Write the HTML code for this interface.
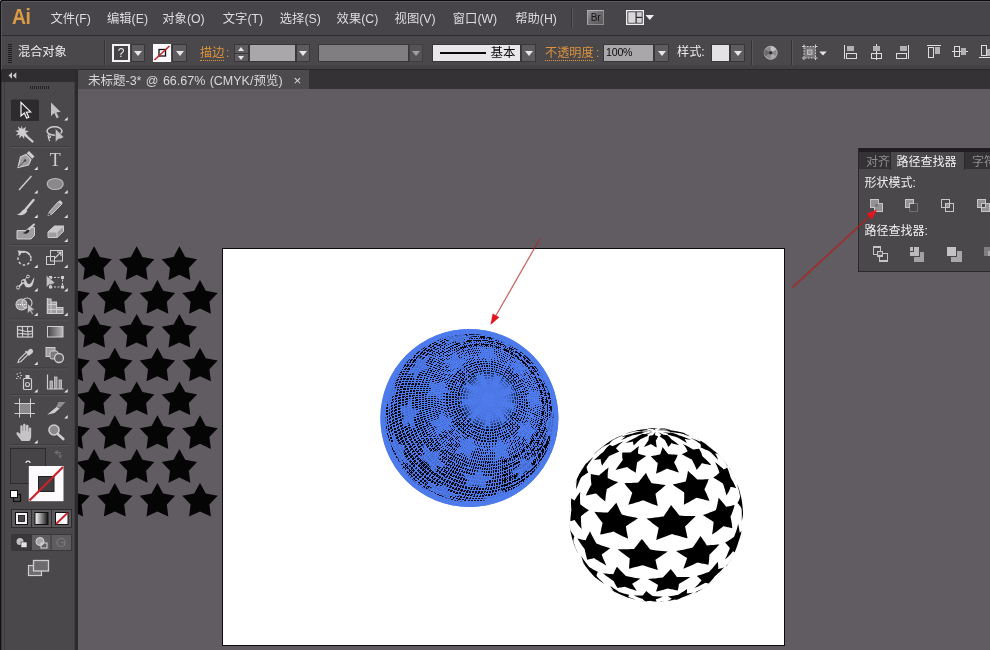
<!DOCTYPE html>
<html lang="zh-CN">
<head>
<meta charset="utf-8">
<title>Adobe Illustrator</title>
<style>
*{box-sizing:border-box;margin:0;padding:0}
html,body{width:990px;height:650px;overflow:hidden;background:#605c61}
body{position:relative;font-family:"Liberation Sans","Noto Sans CJK SC",sans-serif;font-size:12px;color:#e4e2e5;-webkit-font-smoothing:antialiased}
.abs{position:absolute}
#menubar{left:0;top:0;width:990px;height:35px;background:#48454a;border-top:1px solid #0d0c0e;box-shadow:inset 0 1px 0 #5b595c}
#menubar .mi{position:absolute;top:9.6px;font-size:12.3px;line-height:16px;color:#dedce0;white-space:nowrap;letter-spacing:0}
#ailogo{position:absolute;left:12px;top:2px;font-size:22px;font-weight:bold;color:#dc9c43;line-height:28px;letter-spacing:-0.5px;transform:scaleX(.88);transform-origin:left center}
#ctrlbar{left:0;top:35px;width:990px;height:35px;background:#4a484b;border-top:1px solid #2c2a2d;border-bottom:1px solid #2a282b}
#tabbar{left:77px;top:70px;width:913px;height:19px;background:#343235}
#doctab{left:78px;top:70px;width:231px;height:19px;background:#4c4a4d;color:#dedce0;font-size:12.5px;line-height:19px;white-space:nowrap}
#canvas{left:77px;top:89px;width:913px;height:561px;background:#605c61}
#toolbox{left:0;top:70px;width:75px;height:580px;background:#4a484b}
#toolhead{left:0;top:70px;width:75px;height:12px;background:#2f2d30}
#toolsep{left:75px;top:70px;width:3px;height:580px;background:#2c2a2d}
#artboard{left:222px;top:248px;width:563px;height:398px;background:#fff;border:1px solid #0b0a0c}
.lbl{position:absolute;white-space:nowrap;line-height:16px;font-size:12px}
.orange{color:#dc933b;border-bottom:1px dotted #dc933b}
.dd{position:absolute;background:#5e5c5f;border:1px solid #39373a}
.dd:after{content:"";position:absolute;left:50%;top:50%;margin:-2px 0 0 -4px;border:4px solid transparent;border-top:5px solid #e8e6e9;border-bottom:0}
.fld{position:absolute;border:1px solid #39373a}
.vsep{position:absolute;width:1px;background:#353336;box-shadow:1px 0 0 #585659}
</style>
</head>
<body>
<div id="root" style="position:absolute;left:0;top:0;width:990px;height:650px;will-change:transform;transform:translateZ(0)">
<!-- CANVAS -->
<div id="canvas" class="abs"></div>
<div id="artboard" class="abs"></div>
<!--STARS-->
<svg class="abs" style="left:78px;top:240px" width="150" height="285" viewBox="78 240 150 285">
<path fill="#050505" d="M94.1 246.3 L99.9 256.9 L111.8 259.2 L103.5 267.9 L105.0 279.9 L94.1 274.8 L83.2 279.9 L84.7 267.9 L76.4 259.2 L88.3 256.9Z M136.7 246.3 L142.5 256.9 L154.4 259.2 L146.1 267.9 L147.6 279.9 L136.7 274.8 L125.8 279.9 L127.3 267.9 L119.0 259.2 L130.9 256.9Z M179.4 246.3 L185.2 256.9 L197.1 259.2 L188.8 267.9 L190.3 279.9 L179.4 274.8 L168.5 279.9 L170.0 267.9 L161.7 259.2 L173.6 256.9Z M72.2 280.1 L78.0 290.7 L89.9 293.0 L81.6 301.7 L83.1 313.7 L72.2 308.6 L61.3 313.7 L62.8 301.7 L54.5 293.0 L66.4 290.7Z M114.8 280.1 L120.6 290.7 L132.5 293.0 L124.2 301.7 L125.7 313.7 L114.8 308.6 L103.9 313.7 L105.4 301.7 L97.1 293.0 L109.0 290.7Z M157.4 280.1 L163.2 290.7 L175.1 293.0 L166.8 301.7 L168.3 313.7 L157.4 308.6 L146.5 313.7 L148.0 301.7 L139.7 293.0 L151.6 290.7Z M200.0 280.1 L205.8 290.7 L217.7 293.0 L209.4 301.7 L210.9 313.7 L200.0 308.6 L189.1 313.7 L190.6 301.7 L182.3 293.0 L194.2 290.7Z M94.1 313.9 L99.9 324.5 L111.8 326.8 L103.5 335.5 L105.0 347.5 L94.1 342.4 L83.2 347.5 L84.7 335.5 L76.4 326.8 L88.3 324.5Z M136.7 313.9 L142.5 324.5 L154.4 326.8 L146.1 335.5 L147.6 347.5 L136.7 342.4 L125.8 347.5 L127.3 335.5 L119.0 326.8 L130.9 324.5Z M179.4 313.9 L185.2 324.5 L197.1 326.8 L188.8 335.5 L190.3 347.5 L179.4 342.4 L168.5 347.5 L170.0 335.5 L161.7 326.8 L173.6 324.5Z M72.2 347.7 L78.0 358.3 L89.9 360.6 L81.6 369.3 L83.1 381.3 L72.2 376.2 L61.3 381.3 L62.8 369.3 L54.5 360.6 L66.4 358.3Z M114.8 347.7 L120.6 358.3 L132.5 360.6 L124.2 369.3 L125.7 381.3 L114.8 376.2 L103.9 381.3 L105.4 369.3 L97.1 360.6 L109.0 358.3Z M157.4 347.7 L163.2 358.3 L175.1 360.6 L166.8 369.3 L168.3 381.3 L157.4 376.2 L146.5 381.3 L148.0 369.3 L139.7 360.6 L151.6 358.3Z M200.0 347.7 L205.8 358.3 L217.7 360.6 L209.4 369.3 L210.9 381.3 L200.0 376.2 L189.1 381.3 L190.6 369.3 L182.3 360.6 L194.2 358.3Z M94.1 381.5 L99.9 392.1 L111.8 394.4 L103.5 403.1 L105.0 415.1 L94.1 410.0 L83.2 415.1 L84.7 403.1 L76.4 394.4 L88.3 392.1Z M136.7 381.5 L142.5 392.1 L154.4 394.4 L146.1 403.1 L147.6 415.1 L136.7 410.0 L125.8 415.1 L127.3 403.1 L119.0 394.4 L130.9 392.1Z M179.4 381.5 L185.2 392.1 L197.1 394.4 L188.8 403.1 L190.3 415.1 L179.4 410.0 L168.5 415.1 L170.0 403.1 L161.7 394.4 L173.6 392.1Z M72.2 415.3 L78.0 425.9 L89.9 428.2 L81.6 436.9 L83.1 448.9 L72.2 443.8 L61.3 448.9 L62.8 436.9 L54.5 428.2 L66.4 425.9Z M114.8 415.3 L120.6 425.9 L132.5 428.2 L124.2 436.9 L125.7 448.9 L114.8 443.8 L103.9 448.9 L105.4 436.9 L97.1 428.2 L109.0 425.9Z M157.4 415.3 L163.2 425.9 L175.1 428.2 L166.8 436.9 L168.3 448.9 L157.4 443.8 L146.5 448.9 L148.0 436.9 L139.7 428.2 L151.6 425.9Z M200.0 415.3 L205.8 425.9 L217.7 428.2 L209.4 436.9 L210.9 448.9 L200.0 443.8 L189.1 448.9 L190.6 436.9 L182.3 428.2 L194.2 425.9Z M94.1 449.1 L99.9 459.7 L111.8 462.0 L103.5 470.7 L105.0 482.7 L94.1 477.6 L83.2 482.7 L84.7 470.7 L76.4 462.0 L88.3 459.7Z M136.7 449.1 L142.5 459.7 L154.4 462.0 L146.1 470.7 L147.6 482.7 L136.7 477.6 L125.8 482.7 L127.3 470.7 L119.0 462.0 L130.9 459.7Z M179.4 449.1 L185.2 459.7 L197.1 462.0 L188.8 470.7 L190.3 482.7 L179.4 477.6 L168.5 482.7 L170.0 470.7 L161.7 462.0 L173.6 459.7Z M72.2 482.9 L78.0 493.5 L89.9 495.8 L81.6 504.5 L83.1 516.5 L72.2 511.4 L61.3 516.5 L62.8 504.5 L54.5 495.8 L66.4 493.5Z M114.8 482.9 L120.6 493.5 L132.5 495.8 L124.2 504.5 L125.7 516.5 L114.8 511.4 L103.9 516.5 L105.4 504.5 L97.1 495.8 L109.0 493.5Z M157.4 482.9 L163.2 493.5 L175.1 495.8 L166.8 504.5 L168.3 516.5 L157.4 511.4 L146.5 516.5 L148.0 504.5 L139.7 495.8 L151.6 493.5Z M200.0 482.9 L205.8 493.5 L217.7 495.8 L209.4 504.5 L210.9 516.5 L200.0 511.4 L189.1 516.5 L190.6 504.5 L182.3 495.8 L194.2 493.5Z"/>
</svg>
<!--/STARS-->
<!--SPHERES-->
<svg class="abs" style="left:370px;top:320px" width="390" height="300" viewBox="370 320 390 300"><circle cx="469.4" cy="418.0" r="89.0" fill="#4e7bec"/><circle cx="469.4" cy="418.0" r="84.0" fill="#07070f"/><path fill="none" stroke="#4e7bec" stroke-width="1.0" shape-rendering="crispEdges" d="M496.7 399.3L496.4 397.7L495.9 396.2L495.0 394.9L493.9 393.7L492.6 392.8L491.1 392.2L489.6 391.8L488.0 391.8L486.5 392.2L485.1 392.8L483.9 393.7L482.9 394.9L482.2 396.2L481.8 397.7L481.7 399.3L482.0 400.8L482.5 402.3L483.4 403.7L484.5 404.9L485.8 405.8L487.3 406.4L488.8 406.7L490.4 406.7L491.9 406.4L493.3 405.8L494.5 404.9L495.5 403.7L496.2 402.3L496.6 400.8L496.7 399.3M499.2 399.3L498.9 397.4L498.2 395.5L497.2 393.7L495.9 392.2L494.3 390.9L492.5 390.0L490.6 389.4L488.6 389.2L486.7 389.4L484.8 390.0L483.1 390.9L481.7 392.2L480.5 393.7L479.6 395.5L479.2 397.4L479.1 399.3L479.4 401.3L480.0 403.2L481.0 405.0L482.4 406.5L484.0 407.8L485.8 408.7L487.7 409.3L489.6 409.5L491.6 409.3L493.5 408.7L495.2 407.8L496.6 406.5L497.8 405.0L498.6 403.2L499.1 401.3L499.2 399.3M501.7 399.4L501.4 397.1L500.6 394.8L499.5 392.7L498.0 390.8L496.2 389.3L494.1 388.0L491.9 387.2L489.6 386.7L487.2 386.7L485.0 387.2L482.8 388.0L480.9 389.3L479.2 390.8L477.9 392.7L477.0 394.8L476.5 397.1L476.4 399.4L476.7 401.8L477.5 404.0L478.6 406.1L480.1 408.0L481.9 409.6L484.0 410.8L486.2 411.7L488.5 412.1L490.9 412.1L493.1 411.7L495.3 410.8L497.2 409.6L498.9 408.0L500.2 406.1L501.1 404.0L501.6 401.8L501.7 399.4M504.2 399.5L503.9 396.8L503.1 394.3L501.8 391.8L500.2 389.6L498.2 387.8L495.9 386.2L493.5 385.1L490.8 384.4L488.2 384.2L485.5 384.4L483.0 385.1L480.6 386.2L478.5 387.8L476.7 389.6L475.3 391.8L474.3 394.3L473.8 396.8L473.7 399.5L474.0 402.2L474.9 404.8L476.1 407.2L477.7 409.4L479.7 411.3L482.0 412.8L484.5 413.9L487.1 414.6L489.7 414.9L492.4 414.6L494.9 413.9L497.3 412.8L499.4 411.3L501.2 409.4L502.6 407.2L503.6 404.8L504.1 402.2L504.2 399.5M506.7 399.6L506.3 396.7L505.5 393.8L504.1 391.1L502.4 388.6L500.3 386.4L497.9 384.6L495.2 383.2L492.3 382.2L489.4 381.7L486.5 381.7L483.6 382.2L480.8 383.2L478.3 384.6L476.0 386.4L474.2 388.6L472.7 391.1L471.6 393.8L471.0 396.7L470.9 399.6L471.3 402.6L472.2 405.5L473.5 408.2L475.3 410.7L477.4 412.9L479.8 414.7L482.5 416.1L485.3 417.1L488.3 417.5L491.2 417.5L494.1 417.1L496.9 416.1L499.4 414.7L501.6 412.9L503.5 410.7L505.0 408.2L506.1 405.5L506.6 402.6L506.7 399.6M509.2 399.8L508.8 396.5L507.9 393.4L506.5 390.4L504.7 387.7L502.5 385.2L499.9 383.1L497.1 381.4L494.0 380.2L490.9 379.4L487.7 379.2L484.5 379.4L481.4 380.2L478.5 381.4L475.8 383.1L473.5 385.2L471.5 387.7L470.0 390.4L468.9 393.4L468.3 396.5L468.2 399.8L468.6 403.0L469.5 406.1L470.9 409.1L472.7 411.9L474.9 414.3L477.5 416.4L480.3 418.1L483.3 419.3L486.5 420.1L489.7 420.3L492.9 420.1L496.0 419.3L498.9 418.1L501.6 416.4L503.9 414.3L505.9 411.9L507.4 409.1L508.5 406.1L509.1 403.0L509.2 399.8M511.6 399.9L511.2 396.5L510.3 393.1L508.8 389.8L507.0 386.8L504.7 384.1L502.0 381.8L499.1 379.8L495.9 378.3L492.5 377.3L489.1 376.8L485.6 376.8L482.3 377.3L479.0 378.3L476.0 379.8L473.2 381.8L470.8 384.1L468.8 386.8L467.2 389.8L466.1 393.1L465.5 396.5L465.4 399.9L465.9 403.4L466.8 406.8L468.2 410.0L470.1 413.0L472.4 415.7L475.0 418.1L478.0 420.0L481.2 421.5L484.5 422.5L488.0 423.1L491.4 423.1L494.8 422.5L498.1 421.5L501.1 420.0L503.9 418.1L506.3 415.7L508.3 413.0L509.9 410.0L511.0 406.8L511.6 403.4L511.6 399.9M514.1 400.1L513.6 396.5L512.7 393.0L511.3 389.6L509.5 386.4L507.2 383.5L504.6 380.9L501.7 378.7L498.5 376.9L495.1 375.5L491.5 374.7L488.0 374.3L484.4 374.4L480.9 375.0L477.5 376.1L474.4 377.7L471.5 379.7L469.0 382.1L466.8 384.9L465.0 388.0L463.7 391.3L462.9 394.7L462.6 398.3L462.8 401.9L463.5 405.4L464.6 408.9L466.3 412.2L468.3 415.3L470.8 418.0L473.6 420.4L476.6 422.4L479.9 424.0L483.4 425.1L487.0 425.8L490.6 425.9L494.1 425.5L497.5 424.6L500.8 423.3L503.8 421.5L506.5 419.3L508.9 416.7L510.9 413.8L512.4 410.6L513.4 407.2L514.0 403.7L514.1 400.1M516.5 400.3L516.0 396.5L515.1 392.8L513.7 389.2L511.8 385.8L509.5 382.7L506.8 379.8L503.8 377.4L500.5 375.3L497.0 373.7L493.3 372.6L489.6 372.0L485.8 371.9L482.0 372.2L478.4 373.1L474.9 374.5L471.7 376.3L468.8 378.6L466.2 381.2L464.0 384.2L462.2 387.4L460.9 390.9L460.1 394.6L459.8 398.4L460.0 402.2L460.7 405.9L461.9 409.6L463.5 413.1L465.6 416.4L468.1 419.3L471.0 422.0L474.1 424.2L477.5 426.1L481.1 427.4L484.9 428.3L488.6 428.7L492.4 428.6L496.1 427.9L499.7 426.8L503.0 425.2L506.1 423.2L508.9 420.7L511.3 417.9L513.2 414.8L514.8 411.4L515.8 407.8L516.4 404.1L516.5 400.3M518.8 400.5L518.4 396.5L517.4 392.6L516.0 388.8L514.1 385.2L511.8 381.9L509.0 378.9L506.0 376.2L502.6 373.9L499.0 372.1L495.2 370.7L491.3 369.8L487.4 369.5L483.4 369.6L479.5 370.2L475.8 371.3L472.2 373.0L469.0 375.0L466.0 377.5L463.4 380.4L461.2 383.5L459.4 387.0L458.1 390.7L457.3 394.5L457.0 398.5L457.2 402.5L457.9 406.4L459.1 410.3L460.8 413.9L462.9 417.4L465.4 420.6L468.3 423.5L471.5 425.9L475.0 428.0L478.7 429.6L482.6 430.7L486.5 431.4L490.5 431.5L494.4 431.1L498.2 430.2L501.9 428.9L505.3 427.0L508.4 424.7L511.2 422.1L513.6 419.0L515.6 415.7L517.2 412.1L518.2 408.4L518.8 404.5L518.8 400.5M521.2 400.7L520.7 396.6L519.8 392.5L518.3 388.6L516.4 384.8L514.1 381.3L511.3 378.0L508.2 375.2L504.8 372.7L501.1 370.6L497.2 369.0L493.2 367.8L489.1 367.2L485.0 367.1L480.9 367.5L476.9 368.3L473.1 369.7L469.5 371.6L466.1 373.9L463.1 376.6L460.5 379.6L458.3 383.0L456.5 386.6L455.2 390.5L454.4 394.5L454.1 398.6L454.3 402.8L455.1 406.9L456.3 410.9L458.0 414.8L460.1 418.4L462.6 421.8L465.6 424.9L468.9 427.6L472.4 429.9L476.2 431.7L480.2 433.1L484.2 434.0L488.4 434.3L492.5 434.2L496.5 433.6L500.4 432.4L504.1 430.8L507.6 428.8L510.8 426.3L513.6 423.4L516.0 420.2L518.0 416.6L519.6 412.9L520.6 408.9L521.2 404.8L521.2 400.7M523.5 401.0L523.1 396.7L522.1 392.4L520.6 388.3L518.7 384.4L516.3 380.7L513.6 377.3L510.4 374.2L507.0 371.5L503.2 369.2L499.3 367.4L495.2 366.0L490.9 365.1L486.7 364.7L482.4 364.9L478.2 365.5L474.1 366.6L470.2 368.2L466.6 370.3L463.2 372.8L460.2 375.7L457.6 379.0L455.4 382.5L453.6 386.3L452.4 390.4L451.6 394.6L451.3 398.8L451.5 403.1L452.2 407.4L453.4 411.6L455.1 415.6L457.3 419.4L459.8 423.0L462.8 426.2L466.1 429.1L469.7 431.6L473.5 433.7L477.6 435.3L481.8 436.4L486.0 437.1L490.3 437.2L494.6 436.8L498.7 435.9L502.7 434.6L506.5 432.7L510.0 430.4L513.1 427.7L516.0 424.6L518.4 421.2L520.4 417.5L521.9 413.6L522.9 409.5L523.5 405.3L523.5 401.0M525.8 401.2L525.4 396.8L524.4 392.4L522.9 388.2L521.0 384.1L518.6 380.2L515.8 376.6L512.7 373.4L509.2 370.5L505.4 368.0L501.4 365.9L497.2 364.3L492.9 363.2L488.5 362.5L484.1 362.4L479.7 362.8L475.4 363.7L471.3 365.0L467.3 366.9L463.7 369.2L460.3 371.9L457.3 375.0L454.7 378.4L452.5 382.1L450.7 386.1L449.4 390.3L448.7 394.6L448.4 399.0L448.6 403.5L449.3 407.9L450.5 412.2L452.2 416.4L454.4 420.4L457.0 424.1L459.9 427.5L463.3 430.6L466.9 433.3L470.8 435.6L474.9 437.5L479.2 438.8L483.6 439.7L488.0 440.1L492.4 440.0L496.7 439.3L501.0 438.2L505.0 436.6L508.8 434.5L512.3 432.0L515.5 429.1L518.3 425.8L520.7 422.3L522.7 418.4L524.2 414.3L525.3 410.0L525.8 405.7L525.8 401.2M528.1 401.5L527.6 397.0L526.6 392.5L525.2 388.1L523.3 383.8L520.9 379.8L518.1 376.1L514.9 372.6L511.4 369.5L507.6 366.8L503.6 364.5L499.3 362.7L494.9 361.3L490.4 360.5L485.9 360.1L481.3 360.2L476.8 360.8L472.5 362.0L468.3 363.6L464.3 365.6L460.7 368.1L457.3 371.0L454.3 374.3L451.7 377.9L449.5 381.8L447.8 385.9L446.5 390.3L445.7 394.7L445.5 399.3L445.7 403.8L446.4 408.4L447.6 412.8L449.3 417.1L451.5 421.3L454.1 425.2L457.0 428.8L460.4 432.0L464.0 435.0L468.0 437.5L472.1 439.5L476.5 441.1L480.9 442.2L485.5 442.9L490.0 443.0L494.6 442.6L499.0 441.7L503.3 440.4L507.3 438.5L511.1 436.3L514.7 433.5L517.9 430.5L520.7 427.0L523.1 423.3L525.0 419.2L526.5 415.0L527.6 410.6L528.1 406.1L528.1 401.5M530.3 401.9L529.9 397.2L528.9 392.6L527.4 388.0L525.5 383.7L523.1 379.5L520.4 375.6L517.2 372.0L513.7 368.7L509.9 365.8L505.8 363.3L501.5 361.3L497.0 359.7L492.4 358.6L487.7 357.9L483.1 357.8L478.4 358.2L473.9 359.1L469.5 360.4L465.3 362.2L461.3 364.5L457.6 367.2L454.3 370.3L451.3 373.7L448.7 377.5L446.5 381.6L444.8 385.8L443.5 390.3L442.8 394.9L442.5 399.5L442.8 404.2L443.5 408.9L444.7 413.5L446.4 417.9L448.6 422.2L451.1 426.2L454.1 430.0L457.4 433.4L461.1 436.5L465.1 439.2L469.3 441.5L473.7 443.3L478.2 444.7L482.8 445.5L487.5 445.9L492.2 445.8L496.8 445.2L501.3 444.1L505.6 442.5L509.7 440.4L513.5 437.9L517.0 435.0L520.2 431.8L523.0 428.1L525.4 424.2L527.3 420.1L528.8 415.7L529.8 411.2L530.3 406.6L530.3 401.9M532.6 402.2L532.1 397.4L531.1 392.7L529.6 388.0L527.7 383.5L525.4 379.2L522.6 375.2L519.4 371.4L515.9 368.0L512.1 364.9L508.0 362.2L503.7 360.0L499.1 358.2L494.5 356.8L489.7 355.9L484.9 355.6L480.2 355.7L475.4 356.3L470.8 357.4L466.4 359.0L462.2 361.0L458.2 363.5L454.5 366.4L451.2 369.7L448.2 373.3L445.6 377.2L443.5 381.4L441.8 385.8L440.6 390.3L439.8 395.0L439.6 399.8L439.8 404.6L440.5 409.4L441.8 414.1L443.4 418.7L445.6 423.1L448.1 427.3L451.1 431.2L454.5 434.8L458.1 438.1L462.1 440.9L466.3 443.4L470.8 445.4L475.4 447.0L480.1 448.1L484.9 448.7L489.6 448.9L494.4 448.5L499.1 447.6L503.6 446.3L507.9 444.5L512.0 442.2L515.9 439.5L519.4 436.5L522.6 433.0L525.3 429.3L527.7 425.2L529.6 420.9L531.1 416.4L532.1 411.8L532.6 407.0L532.6 402.2M534.7 402.6L534.3 397.8L533.3 393.0L531.9 388.3L530.1 383.8L527.8 379.4L525.1 375.2L522.0 371.4L518.6 367.8L514.9 364.5L510.9 361.6L506.6 359.2L502.2 357.1L497.5 355.5L492.8 354.3L488.0 353.6L483.2 353.3L478.4 353.6L473.7 354.3L469.1 355.5L464.6 357.1L460.4 359.2L456.4 361.6L452.6 364.5L449.2 367.8L446.2 371.4L443.5 375.2L441.3 379.4L439.4 383.8L438.0 388.3L437.1 393.0L436.6 397.8L436.6 402.6L437.1 407.4L438.1 412.2L439.5 416.9L441.3 421.5L443.6 425.8L446.3 430.0L449.3 433.9L452.8 437.4L456.5 440.7L460.5 443.6L464.8 446.0L469.2 448.1L473.8 449.7L478.6 450.9L483.4 451.6L488.2 451.9L493.0 451.6L497.7 450.9L502.3 449.7L506.8 448.1L511.0 446.0L515.0 443.6L518.7 440.7L522.1 437.4L525.2 433.9L527.9 430.0L530.1 425.8L532.0 421.5L533.4 416.9L534.3 412.2L534.7 407.4L534.7 402.6M536.9 403.0L536.4 398.1L535.5 393.2L534.1 388.4L532.2 383.7L529.9 379.3L527.3 375.0L524.2 371.0L520.8 367.2L517.1 363.8L513.1 360.8L508.8 358.1L504.3 355.9L499.7 354.0L494.9 352.6L490.0 351.7L485.1 351.2L480.2 351.2L475.3 351.7L470.5 352.6L465.9 354.0L461.4 355.9L457.2 358.1L453.2 360.8L449.5 363.8L446.1 367.2L443.0 371.0L440.4 375.0L438.2 379.3L436.3 383.7L435.0 388.4L434.1 393.2L433.6 398.1L433.6 403.0L434.1 407.9L435.0 412.8L436.4 417.6L438.3 422.3L440.6 426.8L443.2 431.0L446.3 435.1L449.7 438.8L453.4 442.2L457.4 445.2L461.7 447.9L466.2 450.2L470.8 452.0L475.6 453.4L480.5 454.3L485.4 454.8L490.3 454.8L495.2 454.3L500.0 453.4L504.6 452.0L509.1 450.2L513.3 447.9L517.3 445.2L521.0 442.2L524.4 438.8L527.5 435.1L530.1 431.0L532.3 426.8L534.2 422.3L535.5 417.6L536.4 412.8L536.9 407.9L536.9 403.0M539.0 403.5L538.5 398.4L537.6 393.5L536.2 388.6L534.3 383.8L532.1 379.2L529.4 374.8L526.4 370.7L523.0 366.8L519.3 363.2L515.3 360.0L511.0 357.2L506.5 354.7L501.8 352.7L497.0 351.1L492.0 350.0L487.0 349.3L482.0 349.0L477.0 349.3L472.1 350.0L467.3 351.1L462.6 352.7L458.2 354.7L453.9 357.2L449.9 360.0L446.2 363.2L442.9 366.8L439.9 370.7L437.2 374.8L435.0 379.2L433.2 383.8L431.9 388.6L431.0 393.5L430.6 398.4L430.6 403.5L431.1 408.5L432.0 413.5L433.4 418.4L435.2 423.1L437.5 427.7L440.1 432.1L443.2 436.3L446.6 440.1L450.3 443.7L454.3 446.9L458.6 449.7L463.1 452.2L467.8 454.2L472.6 455.8L477.5 457.0L482.5 457.7L487.5 457.9L492.5 457.7L497.4 457.0L502.3 455.8L506.9 454.2L511.4 452.2L515.7 449.7L519.6 446.9L523.3 443.7L526.7 440.1L529.7 436.3L532.3 432.1L534.5 427.7L536.3 423.1L537.7 418.4L538.6 413.5L539.0 408.5L539.0 403.5M541.1 403.9L540.6 398.8L539.6 393.8L538.2 388.8L536.4 383.9L534.2 379.2L531.5 374.7L528.5 370.4L525.1 366.4L521.4 362.7L517.4 359.4L513.2 356.4L508.6 353.7L503.9 351.5L499.1 349.7L494.1 348.4L489.0 347.4L483.9 347.0L478.8 347.0L473.8 347.4L468.8 348.4L464.0 349.7L459.3 351.5L454.8 353.7L450.6 356.4L446.6 359.4L443.0 362.7L439.6 366.4L436.6 370.4L434.1 374.7L431.9 379.2L430.1 383.9L428.8 388.8L427.9 393.8L427.5 398.8L427.5 403.9L428.0 409.1L428.9 414.1L430.3 419.1L432.1 424.0L434.4 428.7L437.0 433.2L440.0 437.5L443.4 441.5L447.1 445.2L451.1 448.5L455.4 451.5L459.9 454.1L464.6 456.4L469.5 458.2L474.4 459.5L479.5 460.4L484.6 460.9L489.7 460.9L494.8 460.4L499.7 459.5L504.6 458.2L509.2 456.4L513.7 454.1L518.0 451.5L521.9 448.5L525.6 445.2L528.9 441.5L531.9 437.5L534.5 433.2L536.7 428.7L538.4 424.0L539.8 419.1L540.7 414.1L541.1 409.1L541.1 403.9M543.1 404.5L542.6 399.3L541.6 394.1L540.3 389.0L538.5 384.1L536.2 379.3L533.6 374.7L530.6 370.3L527.3 366.2L523.6 362.3L519.6 358.8L515.3 355.6L510.8 352.8L506.1 350.4L501.2 348.5L496.2 346.9L491.1 345.8L485.9 345.1L480.7 344.9L475.6 345.1L470.5 345.8L465.5 346.9L460.6 348.5L455.9 350.4L451.4 352.8L447.2 355.6L443.3 358.8L439.6 362.3L436.3 366.2L433.4 370.3L430.8 374.7L428.7 379.3L426.9 384.1L425.6 389.0L424.8 394.1L424.3 399.3L424.4 404.5L424.9 409.7L425.8 414.8L427.2 419.9L429.0 424.8L431.2 429.6L433.8 434.3L436.8 438.6L440.2 442.8L443.9 446.6L447.9 450.1L452.1 453.3L456.7 456.1L461.4 458.5L466.3 460.5L471.3 462.0L476.4 463.1L481.6 463.8L486.7 464.1L491.9 463.8L497.0 463.1L502.0 462.0L506.9 460.5L511.5 458.5L516.0 456.1L520.2 453.3L524.2 450.1L527.8 446.6L531.1 442.8L534.1 438.6L536.6 434.3L538.8 429.6L540.5 424.8L541.8 419.9L542.7 414.8L543.1 409.7L543.1 404.5M545.0 405.0L544.5 399.8L543.6 394.5L542.2 389.4L540.5 384.3L538.2 379.4L535.6 374.7L532.7 370.2L529.3 366.0L525.7 362.0L521.7 358.4L517.4 355.0L512.9 352.1L508.2 349.5L503.3 347.3L498.3 345.6L493.1 344.3L487.9 343.4L482.6 342.9L477.4 342.9L472.1 343.4L467.0 344.3L462.0 345.6L457.1 347.3L452.5 349.5L448.0 352.1L443.8 355.0L439.9 358.4L436.3 362.0L433.0 366.0L430.1 370.2L427.5 374.7L425.4 379.4L423.7 384.3L422.4 389.4L421.6 394.5L421.2 399.8L421.2 405.0L421.7 410.3L422.6 415.5L424.0 420.7L425.8 425.7L428.0 430.6L430.6 435.3L433.6 439.8L436.9 444.1L440.6 448.0L444.6 451.7L448.8 455.0L453.3 458.0L458.1 460.5L463.0 462.7L468.0 464.5L473.2 465.8L478.4 466.7L483.6 467.1L488.9 467.1L494.1 466.7L499.2 465.8L504.3 464.5L509.1 462.7L513.8 460.5L518.3 458.0L522.5 455.0L526.4 451.7L530.0 448.0L533.3 444.1L536.2 439.8L538.7 435.3L540.8 430.6L542.5 425.7L543.8 420.7L544.7 415.5L545.1 410.3L545.0 405.0M546.9 405.6L546.5 400.3L545.5 395.0L544.2 389.7L542.4 384.6L540.2 379.6L537.6 374.8L534.7 370.2L531.3 365.9L527.7 361.8L523.7 358.0L519.5 354.6L515.0 351.4L510.3 348.7L505.4 346.4L500.3 344.4L495.1 342.9L489.9 341.8L484.5 341.1L479.2 340.9L473.9 341.1L468.6 341.8L463.5 342.9L458.5 344.4L453.6 346.4L448.9 348.7L444.5 351.4L440.3 354.6L436.4 358.0L432.8 361.8L429.6 365.9L426.7 370.2L424.2 374.8L422.1 379.6L420.4 384.6L419.2 389.7L418.4 395.0L418.0 400.3L418.0 405.6L418.5 411.0L419.4 416.3L420.8 421.5L422.6 426.7L424.8 431.6L427.3 436.4L430.3 441.0L433.6 445.4L437.3 449.5L441.2 453.3L445.5 456.7L450.0 459.8L454.7 462.6L459.6 464.9L464.6 466.9L469.8 468.4L475.1 469.5L480.4 470.1L485.7 470.4L491.1 470.1L496.3 469.5L501.5 468.4L506.5 466.9L511.4 464.9L516.0 462.6L520.5 459.8L524.7 456.7L528.5 453.3L532.1 449.5L535.4 445.4L538.2 441.0L540.7 436.4L542.8 431.6L544.5 426.7L545.8 421.5L546.6 416.3L547.0 411.0L546.9 405.6M548.8 406.3L548.3 400.9L547.4 395.5L546.0 390.2L544.3 385.0L542.1 379.9L539.5 375.0L536.6 370.3L533.3 365.9L529.7 361.7L525.7 357.8L521.5 354.2L517.0 350.9L512.3 348.0L507.4 345.5L502.4 343.4L497.1 341.7L491.8 340.4L486.5 339.5L481.1 339.1L475.7 339.1L470.3 339.5L465.0 340.4L459.9 341.7L454.8 343.4L450.0 345.5L445.3 348.0L440.9 350.9L436.8 354.2L432.9 357.8L429.4 361.7L426.2 365.9L423.3 370.3L420.9 375.0L418.8 379.9L417.1 385.0L415.9 390.2L415.1 395.5L414.7 400.9L414.8 406.3L415.3 411.7L416.2 417.1L417.5 422.4L419.3 427.6L421.5 432.7L424.0 437.6L427.0 442.3L430.2 446.7L433.9 450.9L437.8 454.8L442.0 458.4L446.5 461.7L451.2 464.6L456.1 467.1L461.2 469.2L466.4 470.9L471.7 472.2L477.1 473.1L482.5 473.5L487.9 473.5L493.2 473.1L498.5 472.2L503.7 470.9L508.7 469.2L513.6 467.1L518.2 464.6L522.6 461.7L526.8 458.4L530.6 454.8L534.2 450.9L537.4 446.7L540.2 442.3L542.7 437.6L544.7 432.7L546.4 427.6L547.6 422.4L548.5 417.1L548.8 411.7L548.8 406.3M550.5 407.0L550.0 401.6L549.1 396.1L547.8 390.7L546.0 385.5L543.9 380.3L541.4 375.3L538.4 370.6L535.2 366.0L531.6 361.7L527.7 357.7L523.5 353.9L519.0 350.5L514.3 347.5L509.4 344.8L504.3 342.5L499.1 340.6L493.8 339.1L488.4 338.1L482.9 337.4L477.5 337.2L472.0 337.4L466.6 338.1L461.3 339.1L456.1 340.6L451.1 342.5L446.3 344.8L441.7 347.5L437.3 350.5L433.1 353.9L429.3 357.7L425.8 361.7L422.7 366.0L419.9 370.6L417.4 375.3L415.4 380.3L413.8 385.5L412.5 390.7L411.8 396.1L411.4 401.6L411.5 407.0L411.9 412.5L412.9 418.0L414.2 423.3L415.9 428.6L418.1 433.8L420.6 438.7L423.5 443.5L426.8 448.1L430.4 452.4L434.3 456.4L438.5 460.1L443.0 463.5L447.7 466.6L452.6 469.3L457.6 471.6L462.9 473.5L468.2 474.9L473.6 476.0L479.1 476.7L484.5 476.9L490.0 476.7L495.4 476.0L500.7 474.9L505.8 473.5L510.9 471.6L515.7 469.3L520.3 466.6L524.7 463.5L528.8 460.1L532.7 456.4L536.2 452.4L539.3 448.1L542.1 443.5L544.6 438.7L546.6 433.8L548.2 428.6L549.4 423.3L550.2 418.0L550.6 412.5L550.5 407.0M552.2 407.9L551.7 402.3L550.8 396.8L549.5 391.4L547.7 386.0L545.6 380.8L543.1 375.7L540.2 370.9L537.0 366.2L533.4 361.8L529.5 357.7L525.3 353.8L520.9 350.3L516.2 347.1L511.3 344.3L506.3 341.8L501.0 339.8L495.7 338.1L490.3 336.8L484.8 336.0L479.2 335.5L473.7 335.5L468.2 336.0L462.8 336.8L457.5 338.1L452.3 339.8L447.3 341.8L442.5 344.3L437.9 347.1L433.5 350.3L429.5 353.8L425.7 357.7L422.2 361.8L419.1 366.2L416.3 370.9L413.9 375.7L411.9 380.8L410.3 386.0L409.1 391.4L408.4 396.8L408.0 402.3L408.1 407.9L408.6 413.4L409.5 418.9L410.8 424.3L412.5 429.7L414.7 434.9L417.2 440.0L420.1 444.8L423.3 449.5L426.9 453.9L430.7 458.0L434.9 461.9L439.4 465.4L444.0 468.6L448.9 471.4L454.0 473.9L459.2 476.0L464.6 477.6L470.0 478.9L475.5 479.7L481.0 480.2L486.5 480.2L492.0 479.7L497.4 478.9L502.8 477.6L507.9 476.0L512.9 473.9L517.8 471.4L522.4 468.6L526.7 465.4L530.8 461.9L534.6 458.0L538.1 453.9L541.2 449.5L543.9 444.8L546.3 440.0L548.3 434.9L549.9 429.7L551.1 424.3L551.9 418.9L552.3 413.4L552.2 407.9M553.7 408.8L553.2 403.2L552.3 397.6L551.0 392.1L549.3 386.7L547.2 381.4L544.7 376.3L541.8 371.3L538.6 366.6L535.1 362.1L531.3 357.8L527.1 353.9L522.7 350.2L518.0 346.9L513.2 343.9L508.1 341.3L502.9 339.1L497.5 337.2L492.1 335.8L486.5 334.7L481.0 334.1L475.4 333.9L469.8 334.1L464.3 334.7L458.9 335.8L453.6 337.2L448.4 339.1L443.4 341.3L438.6 343.9L434.0 346.9L429.7 350.2L425.7 353.9L421.9 357.8L418.5 362.1L415.4 366.6L412.7 371.3L410.4 376.3L408.4 381.4L406.8 386.7L405.6 392.1L404.9 397.6L404.5 403.2L404.6 408.8L405.1 414.4L406.0 419.9L407.3 425.4L409.0 430.8L411.1 436.1L413.6 441.2L416.5 446.2L419.7 450.9L423.2 455.4L427.1 459.7L431.2 463.6L435.6 467.3L440.3 470.6L445.2 473.6L450.2 476.2L455.5 478.5L460.8 480.3L466.3 481.8L471.8 482.8L477.4 483.4L483.0 483.6L488.5 483.4L494.0 482.8L499.4 481.8L504.8 480.3L509.9 478.5L514.9 476.2L519.7 473.6L524.3 470.6L528.6 467.3L532.7 463.6L536.4 459.7L539.8 455.4L542.9 450.9L545.6 446.2L548.0 441.2L550.0 436.1L551.5 430.8L552.7 425.4L553.5 419.9L553.8 414.4L553.7 408.8M555.1 409.8L554.6 404.2L553.7 398.5L552.4 393.0L550.7 387.5L548.6 382.2L546.2 377.0L543.3 371.9L540.2 367.1L536.7 362.5L532.8 358.2L528.7 354.1L524.3 350.3L519.7 346.9L514.9 343.8L509.8 341.0L504.6 338.6L499.2 336.6L493.8 335.0L488.2 333.7L482.6 332.9L477.0 332.5L471.4 332.5L465.8 332.9L460.2 333.7L454.8 335.0L449.5 336.6L444.4 338.6L439.4 341.0L434.6 343.8L430.1 346.9L425.8 350.3L421.8 354.1L418.1 358.2L414.7 362.5L411.7 367.1L409.0 371.9L406.7 377.0L404.7 382.2L403.2 387.5L402.0 393.0L401.3 398.5L401.0 404.2L401.0 409.8L401.5 415.4L402.4 421.1L403.7 426.6L405.4 432.1L407.5 437.4L410.0 442.6L412.8 447.7L416.0 452.5L419.5 457.1L423.3 461.4L427.4 465.5L431.8 469.3L436.4 472.7L441.3 475.8L446.3 478.6L451.5 481.0L456.9 483.0L462.4 484.6L467.9 485.9L473.5 486.7L479.2 487.1L484.8 487.1L490.4 486.7L495.9 485.9L501.3 484.6L506.6 483.0L511.8 481.0L516.8 478.6L521.5 475.8L526.1 472.7L530.4 469.3L534.4 465.5L538.1 461.4L541.4 457.1L544.5 452.5L547.2 447.7L549.5 442.6L551.4 437.4L553.0 432.1L554.1 426.6L554.9 421.1L555.2 415.4L555.1 409.8M556.3 411.0L555.8 405.3L554.9 399.6L553.6 394.0L551.9 388.5L549.8 383.1L547.4 377.9L544.6 372.8L541.5 367.9L538.0 363.2L534.2 358.8L530.1 354.6L525.8 350.7L521.2 347.1L516.4 343.9L511.3 341.0L506.1 338.4L500.8 336.2L495.3 334.5L489.8 333.0L484.1 332.0L478.5 331.4L472.8 331.2L467.1 331.4L461.5 332.0L456.0 333.0L450.6 334.5L445.3 336.2L440.1 338.4L435.2 341.0L430.5 343.9L426.0 347.1L421.7 350.7L417.8 354.6L414.1 358.8L410.8 363.2L407.8 367.9L405.1 372.8L402.9 377.9L401.0 383.1L399.4 388.5L398.3 394.0L397.6 399.6L397.3 405.3L397.4 411.0L397.8 416.7L398.7 422.4L400.0 428.0L401.7 433.5L403.8 438.9L406.2 444.1L409.0 449.2L412.1 454.1L415.6 458.8L419.4 463.2L423.5 467.4L427.8 471.3L432.4 474.9L437.2 478.1L442.3 481.0L447.5 483.6L452.8 485.8L458.3 487.5L463.9 489.0L469.5 490.0L475.2 490.6L480.8 490.8L486.5 490.6L492.1 490.0L497.6 489.0L503.1 487.5L508.3 485.8L513.5 483.6L518.4 481.0L523.2 478.1L527.6 474.9L531.9 471.3L535.8 467.4L539.5 463.2L542.8 458.8L545.8 454.1L548.5 449.2L550.8 444.1L552.7 438.9L554.2 433.5L555.3 428.0L556.0 422.4L556.3 416.7L556.3 411.0M557.0 412.3L556.5 406.6L555.6 400.9L554.4 395.3L552.7 389.7M502.2 336.4L496.7 334.4L491.2 332.8L485.5 331.6L479.9 330.8L474.2 330.4L468.5 330.4L462.8 330.8L457.2 331.6L451.7 332.8L446.3 334.4L441.1 336.4L436.0 338.7L431.1 341.4L426.4 344.4L422.0 347.7L417.8 351.4L413.9 355.4L410.3 359.6L407.0 364.1L404.1 368.9L401.5 373.8L399.3 379.0L397.4 384.3L395.9 389.7L394.8 395.3L394.1 400.9L393.8 406.6L393.9 412.3L394.4 418.0L395.3 423.7L396.5 429.3L398.2 434.9L400.2 440.3L402.6 445.6L405.4 450.7L408.5 455.7L411.9 460.4L415.6 464.9L419.7 469.2L423.9 473.1L428.5 476.8L433.3 480.2L438.2 483.2L443.4 485.9L448.7 488.2L454.2 490.2L459.7 491.8L465.4 492.9L471.0 493.7L476.7 494.1L482.4 494.1L488.1 493.7L493.7 492.9L499.2 491.8L504.6 490.2L509.8 488.2L514.9 485.9L519.8 483.2L524.5 480.2L528.9 476.8L533.1 473.1L537.0 469.2L540.6 464.9L543.9 460.4L546.8 455.7L549.4 450.7L551.6 445.6L553.5 440.3L555.0 434.9L556.1 429.3L556.8 423.7L557.1 418.0L557.0 412.3M469.8 330.0L464.2 330.2L458.5 330.8L453.0 331.8L447.5 333.1L442.2 334.8L437.0 336.9L432.0 339.4L427.2 342.2L422.6 345.3L418.2 348.8L414.2 352.5L410.3 356.6L406.8 360.9L403.6 365.4L400.7 370.2L398.2 375.1L396.0 380.3L394.2 385.6L392.8 391.1L391.7 396.6L391.0 402.2L390.7 407.9L390.8 413.6L391.3 419.3L392.2 425.0L393.4 430.6L395.0 436.2L397.0 441.6L399.4 446.9L402.1 452.1L405.1 457.0L408.5 461.8L412.2 466.3L416.1 470.6L420.3 474.7L424.8 478.4L429.5 481.9L434.4 485.0L439.5 487.8L444.8 490.3L450.2 492.4L455.7 494.1L461.3 495.4L466.9 496.4L472.6 497.0L478.3 497.2L483.9 497.0L489.6 496.4L495.1 495.4L500.6 494.1L505.9 492.4L511.1 490.3L516.1 487.8L520.9 485.0L525.5 481.9L529.9 478.4L534.0 474.7L537.8 470.6L541.3 466.3L544.5 461.8L547.4 457.0L549.9 452.1L552.1 446.9L553.9 441.6L555.3 436.2L556.4 430.6L557.1 425.0M441.9 334.4L436.7 336.4L431.6 338.8L426.7 341.5L422.0 344.5L417.5 347.9L413.3 351.5L409.4 355.5L405.8 359.7L402.4 364.2L399.4 368.9L396.7 373.8L394.4 378.9L392.4 384.1L390.8 389.5L389.5 395.1L388.6 400.7L388.2 406.4L388.1 412.1L388.4 417.8L389.0 423.5L390.1 429.2L391.5 434.8L393.3 440.3L395.5 445.7L398.0 451.0L400.9 456.1L404.0 461.0L407.5 465.7L411.3 470.2L415.4 474.4L419.7 478.4L424.3 482.0L429.1 485.4L434.1 488.4L439.3 491.1L444.6 493.4L450.1 495.4L455.6 497.1L461.2 498.3L466.9 499.2L472.6 499.7L478.3 499.8L484.0 499.5L489.7 498.8L495.2 497.7L500.7 496.3L506.0 494.5L511.2 492.3L516.2 489.8L521.0 486.9L525.5 483.7L529.9 480.2L533.9 476.4L537.7 472.3L541.2 468.0L544.4 463.4L547.3 458.6L549.8 453.6L552.0 448.4M424.8 342.1L420.1 345.2L415.6 348.6L411.3 352.3L407.4 356.3L403.7 360.5L400.3 365.0L397.3 369.8L394.6 374.7L392.2 379.9L390.2 385.2L388.6 390.7L387.3 396.2L386.4 401.9L385.9 407.6L385.8 413.4L386.1 419.2L386.8 425.0L387.9 430.7L389.3 436.4L391.1 441.9L393.3 447.4L395.9 452.7L398.8 457.8L402.0 462.8L405.5 467.5L409.3 472.1L413.4 476.3L417.8 480.3L422.4 484.0L427.3 487.4L432.3 490.4L437.5 493.2L442.9 495.5L448.4 497.5L454.0 499.2L459.7 500.4L465.4 501.3L471.2 501.8L477.0 501.9L482.7 501.6L488.4 500.9L494.0 499.9L499.5 498.4L504.9 496.6L510.1 494.4L515.1 491.8L520.0 489.0L524.6 485.7L529.0 482.2L533.1 478.3L536.9 474.2L540.4 469.8M405.7 357.4L402.0 361.7L398.6 366.2L395.5 371.0L392.8 375.9L390.4 381.1L388.4 386.4L386.8 391.9L385.5 397.5L384.6 403.2L384.2 409.0L384.1 414.8L384.4 420.6L385.0 426.4L386.1 432.1L387.6 437.8L389.4 443.4L391.6 448.9L394.1 454.2L397.0 459.4L400.2 464.4L403.8 469.1L407.6 473.6L411.8 477.9L416.2 481.9L420.8 485.6L425.7 489.0L430.7 492.1L436.0 494.8L441.4 497.2L446.9 499.2L452.5 500.9L458.2 502.1L464.0 503.0L469.8 503.5L475.5 503.6L481.3 503.3L487.0 502.6L492.6 501.6L498.2 500.1L503.6 498.3L508.8 496.1L513.9 493.5L518.7 490.6L523.4 487.4L527.8 483.8M394.2 372.4L391.5 377.4L389.1 382.5L387.1 387.9L385.4 393.3L384.2 398.9L383.3 404.6L382.8 410.3L382.7 416.1L383.0 421.9L383.7 427.7L384.8 433.5L386.2 439.1L388.0 444.7L390.2 450.2L392.8 455.5L395.7 460.7L398.9 465.7L402.4 470.4L406.3 474.9L410.4 479.2L414.8 483.2L419.4 486.9L424.3 490.3L429.3 493.4L434.6 496.1L439.9 498.5L445.5 500.5L451.1 502.1L456.8 503.4L462.5 504.3L468.3 504.8L474.1 504.9L479.8 504.6L485.5 503.9L491.2 502.8L496.7 501.4L502.1 499.5L507.3 497.3L512.4 494.8M384.6 394.9L383.3 400.4L382.4 406.0L382.0 411.8L381.9 417.5L382.1 423.3L382.8 429.0L383.9 434.7L385.3 440.4L387.1 445.9L389.3 451.3L391.8 456.6L394.7 461.8L397.9 466.7L401.4 471.4L405.2 475.9L409.3 480.2L413.7 484.1L418.3 487.8L423.1 491.2L428.1 494.2L433.3 496.9L438.7 499.3L444.2 501.3L449.8 502.9L455.4 504.2L461.1 505.1L466.9 505.6L472.6 505.6L478.3 505.4L484.0 504.7L489.6 503.6M381.4 416.0L381.5 421.7L382.0 427.5L382.9 433.2L384.2 438.9L385.8 444.5L387.8 449.9L390.2 455.3L392.9 460.5L396.0 465.5L399.4 470.3L403.0 474.9L407.0 479.2L411.3 483.3L415.8 487.1L420.5 490.6L425.5 493.7L430.6 496.5L435.9 499.0L441.4 501.1L446.9 502.9L452.5 504.2L458.2 505.2L464.0 505.8M389.0 453.8L391.6 459.0L394.5 464.0L397.7 468.9L401.3 473.6L405.1 478.0L409.2 482.1L413.6 486.0L418.3 489.5L423.1 492.8L428.1 495.7"/><path fill="none" stroke="#4e7bec" stroke-width="1.0" shape-rendering="crispEdges" d="M499.6 399.4L503.8 399.5L508.0 399.7L512.1 399.9L516.1 400.2L519.9 400.6L523.6 401.0L527.1 401.4L530.5 401.9L533.8 402.4L536.8 403.0L539.7 403.6L542.3 404.3L544.8 404.9L547.1 405.7L549.1 406.4L550.9 407.2L552.5 408.0L553.9 408.9L555.1 409.8L556.0 410.7L556.7 411.6L557.1 412.5M528.2 400.1L531.5 400.4L534.7 400.9L537.6 401.3L540.4 401.8L543.0 402.4L545.4 402.9L547.6 403.6L549.6 404.2L551.3 405.0M518.4 398.3L522.2 398.3L525.7 398.5L529.2 398.7L532.4 398.9L535.5 399.2L538.4 399.5L541.1 399.9L543.6 400.4L545.9 400.9L548.0 401.4L549.9 402.0L551.6 402.6L553.0 403.3L554.2 404.0L555.2 404.8L556.0 405.5L556.5 406.4M527.8 397.1L531.1 397.2L534.2 397.3L537.2 397.5L539.9 397.8L542.5 398.1L544.9 398.5L547.0 398.9L549.0 399.4L550.7 399.9M507.7 396.9L511.7 396.6L515.6 396.3L519.3 396.0L523.0 395.8L526.4 395.7L529.8 395.6L532.9 395.6L535.9 395.6L538.7 395.7L541.3 395.9L543.7 396.1L545.9 396.4L547.9 396.8L549.7 397.2L551.3 397.7L552.6 398.2L553.7 398.8L554.6 399.4L555.3 400.1L555.7 400.8M527.3 394.2L530.5 394.0L533.6 393.9L536.5 393.8L539.2 393.8L541.7 393.9L544.0 394.0L546.1 394.2L548.0 394.5L549.7 394.8M517.6 393.9L521.2 393.4L524.7 393.0L528.0 392.6L531.1 392.3L534.1 392.1L536.9 391.9L539.5 391.8L542.0 391.8L544.2 391.8L546.2 392.0L548.0 392.2L549.6 392.4L551.0 392.8L552.1 393.2L553.1 393.7L553.8 394.2L554.2 394.8M526.5 391.3L529.6 390.8L532.6 390.4L535.5 390.1L538.1 389.9L540.6 389.7L542.8 389.6L544.9 389.6L546.8 389.7L548.4 389.9M499.0 396.4L503.0 395.3L507.0 394.2L510.8 393.3L514.5 392.4L518.1 391.5L521.6 390.7L524.9 390.0L528.1 389.4L531.1 388.9L534.0 388.4L536.6 388.0L539.1 387.7L541.4 387.5L543.5 387.4L545.4 387.3L547.1 387.4L548.6 387.5L549.8 387.7L550.8 388.0L551.7 388.4L552.2 388.8M525.5 388.4L528.6 387.7L531.5 387.0L534.2 386.5L536.8 386.0L539.2 385.6L541.4 385.3L543.4 385.1L545.1 385.0L546.7 385.0M516.2 389.7L519.6 388.6L522.8 387.6L526.0 386.7L528.9 385.9L531.7 385.1L534.4 384.5L536.8 383.9L539.1 383.5L541.2 383.1L543.1 382.8L544.8 382.7L546.2 382.6L547.5 382.6L548.5 382.7L549.4 382.9L550.0 383.2M524.3 385.6L527.3 384.6L530.1 383.7L532.7 382.9L535.2 382.2L537.5 381.6L539.6 381.1L541.5 380.7L543.2 380.4L544.7 380.2M505.9 391.7L509.5 390.1L513.0 388.6L516.3 387.2L519.6 385.9L522.7 384.6L525.6 383.5L528.4 382.5L531.1 381.5L533.5 380.7L535.8 379.9L537.9 379.3L539.9 378.7L541.6 378.3L543.1 378.0L544.4 377.8L545.6 377.7L546.5 377.7L547.2 377.8L547.7 378.0M523.0 382.9L525.8 381.7L528.5 380.5L531.0 379.5L533.4 378.6L535.5 377.8L537.5 377.0L539.3 376.4L541.0 376.0L542.4 375.6M514.1 385.7L517.3 384.1L520.3 382.6L523.1 381.1L525.9 379.8L528.4 378.6L530.8 377.5L533.1 376.5L535.1 375.6L537.0 374.8L538.7 374.2L540.2 373.6L541.5 373.2L542.6 372.9L543.5 372.8L544.2 372.7L544.7 372.8M521.4 380.3L524.1 378.8L526.6 377.4L529.0 376.2L531.3 375.0L533.3 374.0L535.2 373.1L536.9 372.3L538.4 371.7L539.7 371.1M497.6 393.7L501.1 391.4L504.4 389.2L507.7 387.1L510.9 385.1L513.9 383.2L516.9 381.3L519.7 379.6L522.3 378.0L524.8 376.4L527.2 375.0L529.4 373.7L531.5 372.6L533.3 371.5L535.0 370.6L536.5 369.8L537.9 369.2L539.0 368.6L540.0 368.2L540.7 368.0L541.3 367.9L541.7 367.9M519.7 377.8L522.2 376.1L524.6 374.5L526.8 373.0L528.9 371.7L530.8 370.4L532.6 369.3L534.2 368.4L535.5 367.5L536.8 366.8M511.6 382.0L514.4 379.9L517.0 377.9L519.6 376.0L522.0 374.2L524.2 372.5L526.3 371.0L528.3 369.6L530.1 368.3L531.7 367.1L533.1 366.1L534.4 365.3L535.5 364.6L536.4 364.0L537.2 363.6L537.7 363.3L538.1 363.2M517.8 375.4L520.1 373.5L522.4 371.7L524.4 370.0L526.3 368.4L528.1 367.0L529.7 365.7L531.2 364.6L532.4 363.6L533.5 362.8M502.7 387.0L505.6 384.4L508.3 381.9L511.0 379.5L513.6 377.2L516.0 375.0L518.3 372.9L520.5 370.9L522.5 369.1L524.4 367.4L526.1 365.9L527.7 364.5L529.1 363.2L530.4 362.1L531.5 361.1L532.4 360.3L533.1 359.7L533.7 359.2L534.1 358.8L534.3 358.7M515.7 373.2L517.9 371.0L519.9 369.0L521.8 367.1L523.6 365.4L525.2 363.8L526.6 362.3L527.9 361.0L529.0 359.9L530.0 358.9M508.5 378.7L510.9 376.1L513.2 373.7L515.3 371.3L517.4 369.1L519.3 367.1L521.0 365.1L522.6 363.4L524.1 361.7L525.4 360.3L526.6 358.9L527.6 357.8L528.4 356.8L529.1 356.0L529.6 355.3L530.0 354.8L530.2 354.5M513.5 371.1L515.5 368.7L517.3 366.5L519.0 364.5L520.6 362.5L522.0 360.8L523.3 359.2L524.4 357.7L525.4 356.4L526.2 355.3M495.6 391.4L498.1 388.2L500.6 385.1L503.1 382.0L505.4 379.1L507.6 376.2L509.7 373.5L511.7 370.9L513.6 368.4L515.4 366.1L517.0 363.9L518.6 361.8L519.9 359.9L521.2 358.2L522.3 356.6L523.2 355.2L524.0 354.0L524.7 352.9L525.2 352.1L525.6 351.4L525.8 350.9L525.8 350.5M511.2 369.1L512.9 366.6L514.6 364.2L516.1 362.0L517.4 359.9L518.7 358.0L519.8 356.2L520.7 354.6L521.6 353.2L522.2 352.0M505.1 375.8L507.0 372.8L508.8 370.0L510.5 367.3L512.1 364.8L513.6 362.3L514.9 360.1L516.2 358.0L517.3 356.1L518.2 354.3L519.1 352.7L519.8 351.3L520.3 350.0L520.8 349.0L521.0 348.1L521.2 347.5L521.2 347.0M508.7 367.3L510.2 364.6L511.6 362.1L512.9 359.7L514.1 357.5L515.1 355.4L516.1 353.5L516.8 351.8L517.5 350.3L518.0 348.9M498.4 383.4L500.3 380.0L502.1 376.7L503.8 373.5L505.4 370.4L507.0 367.5L508.4 364.6L509.7 362.0L510.9 359.5L512.0 357.1L513.0 354.9L513.9 352.9L514.6 351.1L515.2 349.4L515.7 348.0L516.1 346.7L516.3 345.6L516.4 344.8L516.4 344.1L516.3 343.6M506.2 365.7L507.4 362.9L508.6 360.2L509.7 357.7L510.6 355.3L511.4 353.1L512.2 351.1L512.8 349.3L513.3 347.6L513.6 346.2M501.3 373.4L502.7 370.1L504.0 367.0L505.2 364.0L506.3 361.1L507.4 358.4L508.3 355.9L509.1 353.5L509.8 351.4L510.4 349.4L510.8 347.5L511.2 345.9L511.4 344.5L511.6 343.3L511.6 342.2L511.5 341.4L511.3 340.8M503.5 364.3L504.5 361.3L505.4 358.5L506.3 355.9L507.0 353.4L507.6 351.1L508.1 349.0L508.6 347.0L508.9 345.3L509.1 343.8M493.0 389.8L494.5 385.9L495.9 382.1L497.2 378.4L498.5 374.8L499.7 371.3L500.8 367.9L501.8 364.7L502.7 361.6L503.6 358.7L504.3 355.9L504.9 353.3L505.5 350.9L505.9 348.7L506.3 346.7L506.5 344.8L506.7 343.2L506.7 341.7L506.7 340.5L506.5 339.5L506.3 338.7L505.9 338.1M500.7 363.1L501.5 360.0L502.2 357.1L502.8 354.3L503.3 351.7L503.7 349.3L504.0 347.1L504.2 345.1L504.3 343.3L504.3 341.6M497.2 371.6L498.1 368.1L498.8 364.7L499.5 361.5L500.1 358.4L500.7 355.5L501.1 352.7L501.5 350.1L501.7 347.8L501.9 345.6L502.0 343.6L502.0 341.8L501.9 340.2L501.7 338.8L501.5 337.7L501.1 336.8L500.7 336.1L500.1 335.6M497.9 362.0L498.4 358.8L498.8 355.8L499.2 353.0L499.4 350.3L499.6 347.8L499.7 345.5L499.7 343.4L499.7 341.5L499.5 339.9M493.3 381.1L494.0 377.2L494.7 373.4L495.3 369.7L495.8 366.1L496.3 362.7L496.7 359.4L497.0 356.3L497.3 353.4L497.5 350.6L497.5 348.0L497.6 345.6L497.5 343.4L497.4 341.4L497.1 339.7L496.9 338.1L496.5 336.7L496.0 335.6L495.5 334.7L494.9 334.1L494.3 333.6M495.0 361.2L495.2 357.9L495.4 354.8L495.5 351.9L495.5 349.2L495.5 346.6L495.4 344.3L495.2 342.1L494.9 340.2L494.6 338.4M493.0 370.4L493.2 366.7L493.4 363.1L493.6 359.7L493.7 356.5L493.7 353.4L493.6 350.5L493.5 347.8L493.3 345.3L493.1 343.0L492.8 340.9L492.4 339.0L491.9 337.3L491.4 335.9L490.9 334.6L490.2 333.6L489.6 332.8L488.8 332.3M492.1 360.6L492.0 357.2L491.9 354.1L491.8 351.1L491.6 348.3L491.3 345.7L490.9 343.3L490.5 341.1L490.1 339.1L489.6 337.4M490.1 389.0L490.3 384.7L490.5 380.6L490.7 376.5L490.8 372.5L490.8 368.7L490.7 365.0L490.6 361.5L490.5 358.1L490.3 354.8L490.0 351.8L489.7 348.9L489.3 346.2L488.9 343.7L488.4 341.5L487.8 339.4L487.3 337.5L486.6 335.9L485.9 334.5L485.2 333.3L484.4 332.3L483.6 331.6L482.8 331.1M489.1 360.1L488.8 356.8L488.5 353.6L488.0 350.6L487.6 347.7L487.1 345.1L486.5 342.7L485.9 340.4L485.2 338.4L484.5 336.6M488.6 369.7L488.3 366.0L487.9 362.3L487.5 358.9L487.0 355.5L486.5 352.4L486.0 349.4L485.4 346.7L484.7 344.1L484.0 341.7L483.3 339.5L482.5 337.6L481.7 335.9L480.9 334.3L480.0 333.1L479.1 332.0L478.2 331.2L477.2 330.6L476.3 330.3M486.2 359.9L485.6 356.5L484.9 353.3L484.3 350.3L483.6 347.5L482.8 344.8L482.0 342.4L481.2 340.1L480.3 338.1L479.4 336.3M487.8 380.4L487.3 376.2L486.8 372.2L486.2 368.4L485.6 364.6L484.9 361.1L484.2 357.6L483.4 354.4L482.7 351.3L481.8 348.3L481.0 345.6L480.1 343.1L479.2 340.8L478.2 338.7L477.2 336.8L476.2 335.1L475.2 333.7L474.2 332.5L473.2 331.5L472.1 330.8L471.1 330.3L470.0 330.0M483.2 359.9L482.3 356.5L481.4 353.3L480.5 350.3L479.5 347.5L478.6 344.8L477.5 342.4L476.5 340.1L475.5 338.1L474.4 336.3M484.2 369.7L483.3 366.0L482.4 362.3L481.4 358.9L480.4 355.5L479.3 352.4L478.3 349.4L477.2 346.7L476.1 344.1L474.9 341.7L473.8 339.5L472.6 337.6L471.5 335.9L470.3 334.3L469.1 333.1L467.9 332.0L466.8 331.2L465.6 330.6L464.5 330.3M480.3 360.1L479.1 356.8L478.0 353.6L476.8 350.6L475.6 347.7L474.3 345.1L473.1 342.7L471.9 340.4L470.6 338.4L469.3 336.6M487.1 389.0L486.1 384.7L485.1 380.6L484.0 376.5L482.8 372.5L481.7 368.7L480.4 365.0L479.2 361.5L477.9 358.1L476.7 354.8L475.4 351.8L474.0 348.9L472.7 346.2L471.3 343.7L470.0 341.5L468.6 339.4L467.3 337.5L466.0 335.9L464.6 334.5L463.3 333.3L462.0 332.3L460.7 331.6L459.4 331.1L458.2 330.9M477.3 360.6L475.9 357.2L474.5 354.1L473.1 351.1L471.6 348.3L470.2 345.7L468.7 343.3L467.3 341.1L465.8 339.1L464.4 337.4M479.9 370.4L478.4 366.7L476.9 363.1L475.4 359.7L473.8 356.5L472.3 353.4L470.7 350.5L469.2 347.8L467.6 345.3L466.0 343.0L464.5 340.9L462.9 339.0L461.4 337.3L459.9 335.9L458.4 334.6L457.0 333.6L455.6 332.8L454.2 332.3L452.9 332.0L451.6 331.9M474.5 361.2L472.8 357.9L471.1 354.8L469.4 351.9L467.7 349.2L466.1 346.6L464.4 344.3L462.7 342.1L461.1 340.2L459.5 338.4M482.4 381.1L480.7 377.2L479.0 373.4L477.2 369.7L475.5 366.1L473.7 362.7L471.9 359.4L470.1 356.3L468.2 353.4L466.4 350.6L464.6 348.0L462.9 345.6L461.1 343.4L459.3 341.4L457.6 339.7L455.9 338.1L454.3 336.7L452.7 335.6L451.1 334.7L449.6 334.1L448.2 333.6L446.8 333.4L445.4 333.4M471.7 362.0L469.7 358.8L467.8 355.8L465.9 353.0L464.0 350.3L462.1 347.8L460.2 345.5L458.3 343.4L456.5 341.5L454.7 339.9M475.8 371.6L473.7 368.1L471.7 364.7L469.6 361.5L467.6 358.4L465.5 355.5L463.5 352.7L461.4 350.1L459.4 347.8L457.4 345.6L455.5 343.6L453.6 341.8L451.7 340.2L449.9 338.8L448.1 337.7L446.4 336.8L444.8 336.1L443.2 335.6L441.7 335.3L440.3 335.3L438.9 335.5M469.0 363.1L466.8 360.0L464.6 357.1L462.4 354.3L460.3 351.7L458.1 349.3L456.1 347.1L454.0 345.1L452.0 343.3L450.0 341.6M484.3 389.8L482.1 385.9L479.9 382.1L477.6 378.4L475.3 374.8L473.0 371.3L470.7 367.9L468.4 364.7L466.1 361.6L463.8 358.7L461.5 355.9L459.2 353.3L457.0 350.9L454.8 348.7L452.6 346.7L450.5 344.8L448.4 343.2L446.4 341.7L444.5 340.5L442.6 339.5L440.8 338.7L439.1 338.1L437.4 337.7L435.9 337.6L434.4 337.6L433.0 337.9M466.3 364.3L463.9 361.3L461.5 358.5L459.1 355.9L456.7 353.4L454.4 351.1L452.1 349.0L449.8 347.0L447.7 345.3L445.5 343.8M471.9 373.4L469.3 370.1L466.7 367.0L464.2 364.0L461.6 361.1L459.1 358.4L456.6 355.9L454.2 353.5L451.7 351.4L449.4 349.4L447.1 347.5L444.8 345.9L442.6 344.5L440.5 343.3L438.5 342.2L436.5 341.4L434.7 340.8L432.9 340.4L431.2 340.3L429.7 340.3L428.2 340.5L426.9 341.0M463.8 365.7L461.1 362.9L458.5 360.2L455.9 357.7L453.3 355.3L450.8 353.1L448.3 351.1L445.8 349.3L443.5 347.6L441.2 346.2M477.5 383.4L474.7 380.0L471.9 376.7L469.1 373.5L466.3 370.4L463.5 367.5L460.7 364.6L457.9 362.0L455.2 359.5L452.5 357.1L449.9 354.9L447.3 352.9L444.7 351.1L442.3 349.4L439.9 348.0L437.6 346.7L435.4 345.6L433.2 344.8L431.2 344.1L429.3 343.6L427.5 343.3L425.8 343.3L424.2 343.4L422.7 343.8L421.4 344.3M461.4 367.3L458.5 364.6L455.6 362.1L452.8 359.7L450.0 357.5L447.3 355.4L444.6 353.5L442.0 351.8L439.5 350.3L437.1 348.9M468.3 375.8L465.3 372.8L462.2 370.0L459.2 367.3L456.2 364.8L453.3 362.3L450.4 360.1L447.5 358.0L444.7 356.1L442.0 354.3L439.3 352.7L436.8 351.3L434.3 350.0L431.9 349.0L429.6 348.1L427.4 347.5L425.4 347.0L423.4 346.7L421.6 346.7L419.9 346.8L418.4 347.1L417.0 347.6L415.7 348.3M459.1 369.1L456.0 366.6L452.9 364.2L449.9 362.0L446.9 359.9L444.0 358.0L441.2 356.2L438.4 354.6L435.8 353.2L433.2 352.0M481.9 391.4L478.7 388.2L475.4 385.1L472.1 382.0L468.9 379.1L465.6 376.2L462.3 373.5L459.1 370.9L455.9 368.4L452.7 366.1L449.6 363.9L446.5 361.8L443.5 359.9L440.5 358.2L437.6 356.6L434.9 355.2L432.2 354.0L429.6 352.9L427.1 352.1L424.8 351.4L422.5 350.9L420.4 350.5L418.5 350.4L416.6 350.4L414.9 350.6L413.4 351.0L412.0 351.6L410.8 352.4M457.0 371.1L453.7 368.7L450.4 366.5L447.2 364.5L444.0 362.5L441.0 360.8L438.0 359.2L435.0 357.7L432.2 356.4L429.5 355.3M465.2 378.7L461.7 376.1L458.2 373.7L454.8 371.3L451.4 369.1L448.1 367.1L444.8 365.1L441.6 363.4L438.5 361.7L435.4 360.3L432.5 358.9L429.6 357.8L426.9 356.8L424.2 356.0L421.7 355.3L419.4 354.8L417.1 354.5L415.0 354.4L413.1 354.4L411.3 354.6L409.7 355.0L408.2 355.6L406.9 356.3M455.0 373.2L451.5 371.0L448.0 369.0L444.7 367.1L441.3 365.4L438.1 363.8L435.0 362.3L431.9 361.0L429.0 359.9L426.1 358.9M473.6 387.0L469.9 384.4L466.2 381.9L462.5 379.5L458.9 377.2L455.2 375.0L451.6 372.9L448.1 370.9L444.6 369.1L441.2 367.4L437.9 365.9L434.6 364.5L431.5 363.2L428.4 362.1L425.5 361.1L422.6 360.3L420.0 359.7L417.4 359.2L415.0 358.8L412.7 358.7L410.6 358.7L408.7 358.8L406.9 359.2L405.3 359.6L403.8 360.3L402.6 361.1L401.5 362.0M453.1 375.4L449.5 373.5L445.9 371.7L442.3 370.0L438.9 368.4L435.5 367.0L432.2 365.7L429.0 364.6L425.9 363.6L423.0 362.8M462.5 382.0L458.6 379.9L454.8 377.9L451.0 376.0L447.3 374.2L443.7 372.5L440.1 371.0L436.6 369.6L433.1 368.3L429.8 367.1L426.6 366.1L423.5 365.3L420.6 364.6L417.7 364.0L415.0 363.6L412.5 363.3L410.1 363.2L407.9 363.2L405.8 363.4L403.9 363.7L402.2 364.2L400.7 364.8L399.4 365.6L398.3 366.5M451.5 377.8L447.7 376.1L443.9 374.5L440.2 373.0L436.6 371.7L433.1 370.4L429.7 369.3L426.4 368.4L423.2 367.5L420.2 366.8M480.1 393.7L476.1 391.4L472.0 389.2L468.0 387.1L464.0 385.1L460.0 383.2L456.0 381.3L452.0 379.6L448.1 378.0L444.3 376.4L440.5 375.0L436.8 373.7L433.2 372.6L429.7 371.5L426.3 370.6L423.0 369.8L419.9 369.2L416.9 368.6L414.0 368.2L411.3 368.0L408.7 367.9L406.3 367.9L404.1 368.1L402.0 368.4L400.2 368.8L398.5 369.4L397.0 370.1L395.8 370.9L394.7 371.9M450.0 380.3L446.1 378.8L442.2 377.4L438.4 376.2L434.6 375.0L431.0 374.0L427.5 373.1L424.1 372.3L420.8 371.7L417.6 371.1L414.6 370.7L411.8 370.4L409.1 370.3L406.5 370.3L404.2 370.4L402.0 370.7L400.0 371.0L398.2 371.5L396.5 372.2L395.1 372.9L393.9 373.8L392.9 374.8M460.3 385.7L456.1 384.1L452.0 382.6L448.0 381.1L444.0 379.8L440.1 378.6L436.2 377.5L432.5 376.5L428.8 375.6L425.3 374.8L421.9 374.2L418.6 373.6L415.5 373.2L412.5 372.9L409.6 372.8L406.9 372.7L404.4 372.8L402.1 373.0L400.0 373.3L398.0 373.8L396.2 374.4L394.7 375.1L393.3 375.9L392.2 376.8L391.2 377.8M448.7 382.9L444.7 381.7L440.7 380.5L436.7 379.5L432.9 378.6L429.2 377.8L425.5 377.0L422.0 376.4L418.7 376.0L415.4 375.6L412.3 375.3L409.4 375.2L406.7 375.2L404.1 375.3L401.6 375.5L399.4 375.8L397.4 376.3L395.5 376.8L393.9 377.5L392.5 378.3L391.3 379.2L390.2 380.2L389.5 381.3M470.8 391.7L466.5 390.1L462.2 388.6L458.0 387.2L453.7 385.9L449.5 384.6L445.4 383.5L441.3 382.5L437.3 381.5L433.4 380.7L429.6 379.9L425.9 379.3L422.3 378.7L418.8 378.3L415.5 378.0L412.4 377.8L409.3 377.7L406.5 377.7L403.8 377.8L401.3 378.0L399.0 378.4L396.9 378.8L395.0 379.4L393.3 380.0L391.8 380.8L390.5 381.7L389.4 382.6L388.5 383.7M447.6 385.6L443.5 384.6L439.4 383.7L435.3 382.9L431.4 382.2L427.6 381.6L423.9 381.1L420.3 380.7L416.9 380.4L413.6 380.2L410.4 380.1L407.4 380.1L404.6 380.2L402.0 380.5L399.5 380.8L397.2 381.2L395.2 381.7L393.3 382.3L391.7 383.1L390.2 383.9L389.0 384.8L388.0 385.8L387.2 386.9M458.7 389.7L454.3 388.6L450.0 387.6L445.7 386.7L441.6 385.9L437.4 385.1L433.4 384.5L429.5 383.9L425.7 383.5L422.0 383.1L418.4 382.8L415.0 382.7L411.7 382.6L408.6 382.6L405.6 382.7L402.8 382.9L400.2 383.2L397.8 383.6L395.6 384.1L393.6 384.7L391.8 385.4L390.2 386.2L388.8 387.0L387.7 388.0L386.7 389.0L386.0 390.1M446.7 388.4L442.5 387.7L438.3 387.0L434.2 386.5L430.2 386.0L426.3 385.6L422.5 385.3L418.9 385.1L415.4 385.0L412.0 385.0L408.8 385.1L405.8 385.2L402.9 385.5L400.3 385.8L397.8 386.2L395.5 386.7L393.4 387.3L391.5 388.0L389.8 388.8L388.4 389.6L387.2 390.5L386.2 391.5L385.4 392.6M479.0 396.4L474.5 395.3L470.0 394.2L465.5 393.3L461.0 392.4L456.6 391.5L452.2 390.7L447.8 390.0L443.5 389.4L439.3 388.9L435.1 388.4L431.0 388.0L427.1 387.7L423.2 387.5L419.5 387.4L415.9 387.3L412.5 387.4L409.2 387.5L406.1 387.7L403.2 388.0L400.4 388.4L397.9 388.8L395.5 389.3L393.3 390.0L391.4 390.6L389.6 391.4L388.1 392.2L386.8 393.1L385.7 394.1L384.8 395.1L384.2 396.2M446.0 391.3L441.7 390.8L437.5 390.4L433.3 390.1L429.3 389.9L425.3 389.7L421.5 389.6L417.8 389.6L414.3 389.7L410.8 389.9L407.6 390.1L404.5 390.4L401.6 390.8L398.9 391.2L396.4 391.8L394.1 392.4L392.0 393.1L390.1 393.8L388.4 394.6L387.0 395.5L385.7 396.4L384.7 397.4L384.0 398.5L383.4 399.6M457.6 393.9L453.2 393.4L448.7 393.0L444.3 392.6L440.0 392.3L435.8 392.1L431.6 391.9L427.6 391.8L423.6 391.8L419.8 391.8L416.2 392.0L412.7 392.2L409.3 392.4L406.1 392.8L403.1 393.2L400.2 393.7L397.6 394.2L395.1 394.8L392.8 395.5L390.8 396.2L389.0 397.0L387.4 397.9L386.0 398.8L384.8 399.7L383.9 400.7L383.2 401.8L382.7 402.9M445.6 394.2L441.2 394.0L436.9 393.9L432.7 393.8L428.6 393.8L424.6 393.9L420.8 394.0L417.0 394.2L413.5 394.5L410.0 394.8L406.8 395.2L403.7 395.7L400.7 396.2L398.0 396.8L395.5 397.5L393.1 398.1L391.0 398.9L389.1 399.7L387.4 400.6L386.0 401.5L384.7 402.4L383.7 403.4L383.0 404.4L382.4 405.5M469.6 396.9L465.0 396.6L460.4 396.3L455.8 396.0L451.3 395.8L446.9 395.7L442.5 395.6L438.1 395.6L433.9 395.6L429.8 395.7L425.7 395.9L421.8 396.1L418.0 396.4L414.4 396.8L410.9 397.2L407.5 397.7L404.4 398.2L401.4 398.8L398.6 399.4L396.0 400.1L393.6 400.8L391.4 401.6L389.4 402.4L387.6 403.3L386.1 404.2L384.8 405.1L383.7 406.1L382.9 407.1L382.3 408.1L381.9 409.2M445.3 397.1L440.9 397.2L436.6 397.3L432.4 397.5L428.2 397.8L424.2 398.1L420.4 398.5L416.6 398.9L413.0 399.4L409.6 399.9L406.3 400.4L403.2 401.1L400.2 401.7L397.5 402.4L394.9 403.2L392.6 404.0L390.5 404.8L388.6 405.7L386.9 406.6L385.4 407.5L384.2 408.5L383.2 409.5L382.4 410.5L381.9 411.5L381.6 412.6M457.2 398.3L452.7 398.3L448.2 398.5L443.8 398.7L439.4 398.9L435.1 399.2L430.9 399.5L426.8 399.9L422.8 400.4L419.0 400.9L415.3 401.4L411.7 402.0L408.3 402.6L405.1 403.3L402.1 404.0L399.2 404.8L396.5 405.5L394.0 406.4L391.8 407.2L389.7 408.1L387.9 409.0L386.2 409.9L384.8 410.9L383.7 411.9L382.8 412.9L382.1 413.9L381.6 414.9M445.2 400.1L440.8 400.4L436.5 400.9L432.3 401.3L428.2 401.8L424.2 402.4L420.3 402.9L416.5 403.6L412.9 404.2L409.5 405.0L406.2 405.7L403.0 406.5L400.1 407.3L397.4 408.1L394.8 409.0L392.5 409.9L390.4 410.8L388.4 411.7L386.7 412.7L385.3 413.6L384.0 414.6L383.0 415.6L382.3 416.6L381.8 417.6L381.5 418.6M478.7 399.4L474.1 399.5L469.5 399.7L464.9 399.9L460.3 400.2L455.8 400.6L451.2 401.0L446.8 401.4L442.3 401.9L438.0 402.4L433.7 403.0L429.6 403.6L425.5 404.3L421.6 404.9L417.8 405.7L414.2 406.4L410.7 407.2L407.3 408.0L404.2 408.9L401.2 409.8L398.4 410.7L395.7 411.6L393.3 412.5L391.1 413.5L389.1 414.4L387.4 415.4L385.8 416.4L384.5 417.3L383.4 418.3L382.6 419.3L382.0 420.3L381.6 421.3M445.4 403.1L441.0 403.7L436.7 404.4L432.5 405.1L428.4 405.8L424.4 406.6L420.5 407.4L416.7 408.3L413.2 409.1L409.7 410.0L406.4 411.0L403.3 411.9L400.4 412.8L397.7 413.8L395.1 414.8L392.8 415.8L390.7 416.8L388.7 417.8L387.1 418.8L385.6 419.8L384.4 420.7L383.4 421.7L382.6 422.7L382.1 423.7L381.8 424.6M457.5 402.7L452.9 403.3L448.5 404.0L444.1 404.8L439.7 405.6L435.5 406.4L431.3 407.3L427.2 408.1L423.3 409.1L419.5 410.0L415.8 410.9L412.2 411.9L408.9 412.9L405.6 413.9L402.6 414.9L399.8 416.0L397.1 417.0L394.6 418.0L392.4 419.1L390.3 420.1L388.5 421.1L386.9 422.1L385.5 423.1L384.3 424.1L383.4 425.1L382.7 426.1L382.3 427.0L382.0 427.9M445.7 406.0L441.4 406.9L437.1 407.9L432.9 408.9L428.9 409.9L424.9 410.9L421.0 411.9L417.3 413.0L413.7 414.0L410.3 415.1L407.1 416.2L404.0 417.3L401.1 418.4L398.3 419.5L395.8 420.6L393.5 421.7L391.4 422.7L389.5 423.8L387.8 424.8L386.3 425.9L385.1 426.9L384.1 427.8L383.3 428.8L382.8 429.7L382.5 430.6M469.8 402.4L465.3 403.3L460.8 404.2L456.3 405.2L451.9 406.1L447.5 407.2L443.1 408.2L438.8 409.3L434.6 410.4L430.5 411.5L426.6 412.6L422.7 413.8L418.9 414.9L415.3 416.1L411.9 417.2L408.6 418.4L405.5 419.6L402.5 420.8L399.7 421.9L397.1 423.1L394.8 424.2L392.6 425.3L390.6 426.4L388.9 427.5L387.3 428.6L386.0 429.6L384.9 430.6L384.1 431.5L383.5 432.4L383.1 433.3L383.0 434.1M446.3 409.0L442.0 410.2L437.8 411.4L433.7 412.6L429.6 413.8L425.7 415.1L421.9 416.4L418.2 417.6L414.7 418.9L411.3 420.1L408.1 421.4L405.0 422.7L402.1 423.9L399.4 425.1L396.9 426.3L394.6 427.5L392.5 428.6L390.6 429.8L389.0 430.9L387.5 431.9L386.3 432.9L385.3 433.9L384.5 434.8L384.0 435.7L383.7 436.6L383.6 437.4M458.3 407.0L453.9 408.3L449.5 409.6L445.2 410.9L441.0 412.2L436.8 413.5L432.8 414.9L428.8 416.3L424.9 417.6L421.2 419.0L417.6 420.4L414.1 421.7L410.8 423.1L407.7 424.4L404.7 425.8L401.9 427.1L399.3 428.3L396.9 429.6L394.6 430.8L392.6 432.0L390.8 433.1L389.2 434.2L387.8 435.3L386.7 436.3L385.7 437.2L385.0 438.1L384.6 439.0L384.3 439.8M447.1 411.9L442.9 413.3L438.7 414.8L434.6 416.3L430.7 417.8L426.8 419.3L423.1 420.7L419.4 422.2L416.0 423.7L412.6 425.1L409.4 426.5L406.4 428.0L403.6 429.3L400.9 430.7L398.4 432.0L396.2 433.3L394.1 434.5L392.2 435.7L390.5 436.8L389.1 437.9L387.9 438.9L386.9 439.9L386.1 440.8L385.5 441.7L385.2 442.5L385.1 443.2M479.3 402.3L474.9 403.7L470.6 405.1L466.2 406.6L461.8 408.1L457.5 409.7L453.2 411.2L449.0 412.8L444.8 414.4L440.6 416.0L436.6 417.6L432.6 419.2L428.7 420.8L425.0 422.4L421.4 424.0L417.9 425.5L414.5 427.1L411.3 428.6L408.3 430.1L405.4 431.5L402.7 433.0L400.2 434.3L397.8 435.7L395.7 437.0L393.8 438.2L392.0 439.4L390.5 440.5L389.2 441.6L388.1 442.5L387.3 443.5L386.7 444.3L386.3 445.1L386.1 445.8M448.1 414.7L443.9 416.5L439.9 418.2L435.9 419.9L432.0 421.6L428.2 423.3L424.5 425.0L421.0 426.7L417.6 428.4L414.3 430.0L411.2 431.6L408.2 433.2L405.4 434.7L402.8 436.1L400.4 437.6L398.1 438.9L396.1 440.2L394.2 441.5L392.6 442.7L391.1 443.8L389.9 444.8L388.9 445.8L388.1 446.7L387.5 447.5L387.2 448.2L387.1 448.9M459.8 411.2L455.5 413.1L451.4 414.9L447.3 416.8L443.2 418.6L439.2 420.5L435.3 422.3L431.5 424.1L427.8 426.0L424.2 427.8L420.7 429.5L417.4 431.3L414.2 433.0L411.2 434.6L408.3 436.2L405.6 437.8L403.0 439.3L400.7 440.8L398.5 442.2L396.6 443.5L394.8 444.7L393.2 445.9L391.8 447.0L390.7 448.0L389.8 449.0L389.1 449.8L388.6 450.6L388.3 451.3L388.2 451.9M449.2 417.5L445.2 419.5L441.3 421.5L437.4 423.5L433.6 425.4L429.9 427.3L426.3 429.2L422.9 431.1L419.5 433.0L416.3 434.8L413.3 436.5L410.4 438.2L407.6 439.9L405.0 441.5L402.7 443.0L400.4 444.4L398.4 445.8L396.6 447.1L395.0 448.4L393.5 449.5L392.3 450.6L391.3 451.5L390.5 452.4L390.0 453.2L389.6 453.9L389.5 454.5M471.7 407.7L467.5 409.8L463.4 411.9L459.3 414.0L455.3 416.1L451.2 418.2L447.3 420.3L443.3 422.4L439.5 424.5L435.7 426.6L432.1 428.6L428.5 430.6L425.0 432.6L421.7 434.6L418.5 436.5L415.4 438.3L412.5 440.1L409.7 441.9L407.1 443.5L404.7 445.1L402.5 446.7L400.4 448.1L398.5 449.5L396.8 450.8L395.3 451.9L394.1 453.0L393.0 454.0L392.1 454.9L391.5 455.7L391.0 456.4L390.8 457.0L390.8 457.5M450.6 420.2L446.7 422.5L442.9 424.7L439.1 426.9L435.4 429.1L431.9 431.2L428.4 433.3L425.0 435.4L421.8 437.4L418.7 439.4L415.7 441.3L412.8 443.2L410.2 444.9L407.7 446.6L405.3 448.3L403.2 449.8L401.2 451.3L399.4 452.6L397.8 453.9L396.4 455.1L395.1 456.1L394.1 457.1L393.3 458.0L392.7 458.7L392.4 459.4L392.2 459.9M461.8 415.2L457.8 417.6L453.9 420.0L450.1 422.3L446.3 424.7L442.5 427.0L438.9 429.3L435.3 431.6L431.8 433.8L428.4 436.0L425.1 438.2L422.0 440.3L418.9 442.3L416.1 444.3L413.3 446.2L410.7 448.0L408.3 449.7L406.1 451.4L404.0 452.9L402.1 454.4L400.3 455.8L398.8 457.0L397.5 458.2L396.3 459.2L395.4 460.1L394.7 460.9L394.1 461.6L393.8 462.2L393.7 462.7M452.2 422.8L448.4 425.3L444.7 427.8L441.1 430.2L437.5 432.6L434.1 435.0L430.7 437.3L427.5 439.5L424.3 441.7L421.3 443.9L418.4 445.9L415.7 447.9L413.1 449.8L410.6 451.6L408.3 453.4L406.2 455.0L404.3 456.5L402.5 457.9L400.9 459.3L399.5 460.5L398.3 461.5L397.3 462.5L396.5 463.3L395.9 464.1L395.5 464.6L395.3 465.1M480.6 405.0L476.9 407.6L473.1 410.2L469.3 412.8L465.5 415.4L461.7 418.0L458.0 420.6L454.2 423.2L450.5 425.8L446.9 428.4L443.3 431.0L439.8 433.5L436.4 436.0L433.1 438.4L429.9 440.8L426.7 443.1L423.7 445.3L420.8 447.5L418.1 449.5L415.5 451.5L413.0 453.4L410.7 455.3L408.6 457.0L406.6 458.6L404.8 460.0L403.2 461.4L401.7 462.7L400.5 463.8L399.4 464.8L398.5 465.7L397.8 466.4L397.3 467.0L397.0 467.5L396.9 467.9M453.9 425.3L450.3 428.1L446.8 430.7L443.3 433.4L439.9 436.0L436.6 438.5L433.3 441.0L430.2 443.5L427.2 445.9L424.3 448.1L421.5 450.4L418.8 452.5L416.3 454.5L413.9 456.4L411.7 458.2L409.7 460.0L407.8 461.5L406.0 463.0L404.5 464.4L403.1 465.6L401.9 466.7L400.9 467.7L400.1 468.5L399.4 469.2L399.0 469.7L398.8 470.1M464.3 418.9L460.7 421.8L457.2 424.7L453.6 427.5L450.2 430.3L446.7 433.1L443.3 435.8L440.0 438.5L436.8 441.1L433.7 443.7L430.7 446.2L427.7 448.6L424.9 451.0L422.2 453.2L419.7 455.4L417.2 457.4L415.0 459.4L412.8 461.2L410.9 462.9L409.0 464.5L407.4 465.9L405.9 467.3L404.6 468.5L403.5 469.5L402.5 470.4L401.7 471.2L401.2 471.8L400.8 472.3L400.6 472.6M455.8 427.7L452.4 430.7L449.0 433.6L445.7 436.4L442.5 439.2L439.3 442.0L436.2 444.6L433.2 447.2L430.3 449.8L427.5 452.2L424.8 454.6L422.3 456.8L419.9 459.0L417.6 461.0L415.4 462.9L413.4 464.7L411.6 466.3L409.9 467.9L408.4 469.3L407.0 470.5L405.8 471.6L404.8 472.6L404.0 473.4L403.3 474.0L402.8 474.5L402.6 474.9M474.8 412.4L471.5 415.5L468.1 418.6L464.7 421.7L461.3 424.8L457.9 427.8L454.6 430.9L451.3 433.9L448.0 436.9L444.9 439.8L441.7 442.7L438.7 445.4L435.8 448.2L432.9 450.8L430.1 453.3L427.5 455.8L424.9 458.1L422.5 460.4L420.2 462.5L418.1 464.5L416.1 466.3L414.2 468.1L412.5 469.7L410.9 471.1L409.5 472.4L408.3 473.6L407.2 474.6L406.3 475.5L405.6 476.2L405.0 476.7L404.7 477.1L404.5 477.3M457.8 430.0L454.6 433.1L451.4 436.2L448.3 439.3L445.2 442.3L442.2 445.2L439.3 448.0L436.4 450.8L433.7 453.5L431.0 456.1L428.5 458.5L426.0 460.9L423.7 463.2L421.5 465.3L419.4 467.3L417.5 469.1L415.7 470.9L414.1 472.4L412.6 473.9L411.2 475.1L410.1 476.2L409.0 477.2L408.2 478.0L407.5 478.6L407.0 479.1L406.7 479.4M467.4 422.2L464.2 425.6L461.0 428.9L457.9 432.1L454.8 435.4L451.7 438.5L448.7 441.7L445.7 444.7L442.8 447.7L440.0 450.6L437.2 453.4L434.6 456.1L432.0 458.8L429.6 461.3L427.2 463.6L425.0 465.9L422.9 468.0L420.9 470.0L419.0 471.9L417.3 473.6L415.7 475.1L414.3 476.5L413.0 477.7L411.9 478.8L411.0 479.7L410.2 480.4L409.5 481.0L409.1 481.4L408.7 481.6M460.0 432.1L457.0 435.4L454.0 438.7L451.1 441.9L448.2 445.1L445.4 448.2L442.6 451.2L439.9 454.1L437.3 456.9L434.8 459.7L432.4 462.3L430.0 464.7L427.8 467.1L425.7 469.3L423.7 471.4L421.9 473.3L420.1 475.1L418.5 476.7L417.1 478.2L415.8 479.5L414.6 480.6L413.6 481.5L412.7 482.3L412.0 482.9L411.5 483.4L411.1 483.6M482.7 407.3L479.8 410.8L476.9 414.3L474.0 417.9L471.0 421.4L468.1 424.9L465.1 428.4L462.2 431.9L459.2 435.4L456.4 438.8L453.5 442.1L450.7 445.4L447.9 448.6L445.2 451.7L442.6 454.7L440.0 457.6L437.6 460.4L435.2 463.1L432.9 465.7L430.7 468.2L428.6 470.5L426.6 472.6L424.7 474.6L423.0 476.5L421.4 478.2L419.9 479.7L418.5 481.1L417.3 482.3L416.3 483.3L415.4 484.1L414.6 484.8L414.0 485.2L413.5 485.5L413.2 485.6M462.4 434.0L459.6 437.5L456.8 441.0L454.1 444.4L451.4 447.7L448.7 451.0L446.1 454.1L443.6 457.2L441.2 460.2L438.8 463.0L436.5 465.7L434.3 468.3L432.2 470.7L430.2 473.0L428.3 475.2L426.5 477.2L424.8 479.0L423.3 480.7L421.9 482.2L420.6 483.5L419.4 484.6L418.4 485.6L417.5 486.3L416.8 486.9L416.2 487.3L415.7 487.5M470.8 425.1L468.1 428.8L465.4 432.5L462.7 436.1L460.0 439.7L457.4 443.3L454.7 446.7L452.2 450.1L449.6 453.4L447.2 456.6L444.7 459.7L442.4 462.6L440.1 465.5L437.9 468.2L435.8 470.8L433.8 473.2L431.9 475.5L430.1 477.6L428.3 479.6L426.7 481.4L425.3 483.0L423.9 484.5L422.7 485.7L421.6 486.8L420.6 487.7L419.8 488.4L419.0 488.9L418.5 489.2L418.1 489.3M464.8 435.8L462.3 439.5L459.7 443.1L457.2 446.7L454.7 450.2L452.3 453.5L449.9 456.8L447.5 460.0L445.2 463.1L443.0 466.0L440.8 468.9L438.8 471.5L436.8 474.1L434.9 476.4L433.1 478.7L431.4 480.7L429.8 482.6L428.3 484.3L426.9 485.8L425.6 487.1L424.5 488.3L423.5 489.2L422.6 490.0L421.8 490.5L421.2 490.9L420.7 491.1M479.2 416.0L476.8 419.9L474.3 423.8L471.9 427.7L469.4 431.5L466.9 435.4L464.5 439.1L462.0 442.9L459.6 446.5L457.2 450.1L454.9 453.6L452.5 457.0L450.3 460.3L448.0 463.4L445.9 466.5L443.8 469.4L441.7 472.1L439.8 474.8L437.9 477.2L436.1 479.5L434.4 481.7L432.8 483.6L431.3 485.4L429.9 487.0L428.7 488.4L427.5 489.6L426.4 490.6L425.5 491.5L424.7 492.1L424.0 492.5L423.4 492.7L422.9 492.7M467.4 437.4L465.1 441.2L462.8 445.0L460.5 448.7L458.2 452.3L455.9 455.8L453.7 459.3L451.6 462.6L449.5 465.7L447.4 468.8L445.4 471.7L443.5 474.5L441.6 477.1L439.8 479.5L438.1 481.8L436.5 483.9L434.9 485.8L433.5 487.6L432.2 489.1L430.9 490.4L429.8 491.6L428.8 492.5L427.9 493.3L427.1 493.8L426.4 494.2L425.8 494.3M474.6 427.5L472.4 431.5L470.2 435.5L468.0 439.5L465.8 443.3L463.6 447.2L461.4 450.9L459.3 454.5L457.1 458.1L455.0 461.5L453.0 464.8L451.0 468.0L449.0 471.1L447.1 474.0L445.3 476.7L443.5 479.3L441.8 481.7L440.1 484.0L438.6 486.0L437.1 487.9L435.7 489.6L434.5 491.1L433.3 492.4L432.2 493.5L431.2 494.3L430.3 495.0L429.5 495.5L428.9 495.7L428.3 495.7M470.1 438.8L468.0 442.8L465.9 446.7L463.9 450.5L461.8 454.3L459.8 457.9L457.8 461.4L455.8 464.8L453.9 468.1L452.0 471.2L450.1 474.2L448.3 477.1L446.6 479.7L444.9 482.2L443.3 484.6L441.8 486.7L440.3 488.7L438.9 490.4L437.6 492.0L436.4 493.4L435.3 494.5L434.3 495.5L433.4 496.2L432.5 496.7L431.8 497.0L431.2 497.1M485.3 408.9L483.5 413.1L481.7 417.3L479.8 421.5L477.9 425.7L476.0 429.9L474.1 434.0L472.1 438.1L470.2 442.2L468.2 446.2L466.2 450.1L464.3 453.9L462.4 457.6L460.5 461.2L458.6 464.7L456.7 468.1L454.9 471.3L453.1 474.4L451.4 477.3L449.7 480.1L448.1 482.6L446.5 485.1L445.0 487.3L443.5 489.3L442.2 491.2L440.9 492.8L439.6 494.3L438.5 495.5L437.4 496.5L436.5 497.3L435.6 497.9L434.8 498.3L434.1 498.4M472.8 440.1L471.0 444.2L469.2 448.2L467.4 452.1L465.5 455.9L463.7 459.7L461.9 463.3L460.1 466.8L458.4 470.1L456.7 473.3L455.0 476.4L453.3 479.3L451.7 482.0L450.2 484.6L448.7 487.0L447.2 489.2L445.9 491.2L444.5 493.0L443.3 494.5L442.1 495.9L441.0 497.1L440.0 498.0L439.0 498.8L438.2 499.3L437.4 499.6L436.7 499.6M478.7 429.3L477.0 433.6L475.4 437.8L473.7 442.0L472.0 446.1L470.3 450.1L468.6 454.1L466.9 457.9L465.2 461.7L463.5 465.3L461.8 468.8L460.2 472.1L458.5 475.3L456.9 478.4L455.4 481.2L453.9 483.9L452.4 486.5L451.0 488.8L449.6 490.9L448.2 492.9L447.0 494.6L445.8 496.1L444.6 497.5L443.5 498.6L442.5 499.4L441.6 500.1L440.8 500.5L440.0 500.7L439.3 500.7M475.7 441.1L474.1 445.3L472.5 449.4L471.0 453.4L469.4 457.3L467.8 461.2L466.2 464.8L464.6 468.4L463.1 471.8L461.5 475.1L460.0 478.2L458.5 481.2L457.0 484.0L455.6 486.6L454.2 489.0L452.8 491.2L451.5 493.3L450.3 495.1L449.1 496.7L447.9 498.1L446.8 499.2L445.8 500.2L444.8 500.9L443.9 501.4L443.1 501.7L442.4 501.7M484.3 418.3L483.0 422.7L481.7 427.1L480.4 431.5L479.0 435.8L477.6 440.1L476.2 444.4L474.7 448.6L473.3 452.6L471.8 456.6L470.3 460.5L468.9 464.3L467.4 467.9L465.9 471.4L464.5 474.8L463.0 478.0L461.6 481.0L460.2 483.9L458.8 486.6L457.4 489.1L456.1 491.4L454.8 493.5L453.6 495.4L452.4 497.1L451.3 498.5L450.2 499.8L449.1 500.8L448.1 501.6L447.2 502.2L446.3 502.5L445.5 502.6M478.6 442.0L477.3 446.2L475.9 450.4L474.6 454.5L473.3 458.5L471.9 462.4L470.5 466.1L469.2 469.7L467.8 473.2L466.4 476.6L465.1 479.7L463.8 482.7L462.4 485.6L461.1 488.2L459.8 490.6L458.6 492.9L457.3 494.9L456.1 496.8L455.0 498.4L453.9 499.8L452.8 501.0L451.8 501.9L450.8 502.6L449.8 503.1L449.0 503.4L448.1 503.4M483.0 430.6L481.9 435.0L480.8 439.4L479.6 443.7L478.5 448.0L477.3 452.2L476.1 456.3L474.8 460.3L473.6 464.1L472.3 467.9L471.1 471.5L469.8 474.9L468.5 478.2L467.3 481.4L466.0 484.3L464.7 487.1L463.5 489.7L462.3 492.1L461.1 494.3L459.9 496.3L458.7 498.0L457.6 499.6L456.5 500.9L455.4 502.0L454.4 502.9L453.4 503.5L452.5 503.9L451.6 504.1M481.5 442.6L480.5 446.9L479.4 451.1L478.3 455.3L477.2 459.3L476.1 463.3L475.0 467.1L473.8 470.7L472.6 474.3L471.5 477.6L470.3 480.8L469.1 483.9L467.9 486.7L466.7 489.4L465.5 491.9L464.4 494.1L463.2 496.2L462.1 498.1L461.0 499.7L459.9 501.1L458.8 502.3L457.8 503.2L456.8 503.9L455.8 504.4L454.9 504.6M488.2 409.7L487.6 414.3L487.0 418.8L486.3 423.4L485.6 427.9L484.9 432.5L484.1 436.9L483.2 441.4L482.4 445.7L481.5 450.0L480.5 454.2L479.6 458.3L478.6 462.3L477.5 466.2L476.5 469.9L475.4 473.5L474.3 476.9L473.2 480.2L472.1 483.3L471.0 486.2L469.9 489.0L468.8 491.5L467.7 493.9L466.6 496.0L465.5 497.9L464.4 499.7L463.3 501.1L462.2 502.4L461.2 503.4L460.1 504.2L459.2 504.8L458.2 505.1M484.4 443.0L483.7 447.4L482.9 451.6L482.1 455.8L481.2 459.9L480.3 463.9L479.4 467.7L478.5 471.4L477.5 475.0L476.5 478.4L475.5 481.6L474.5 484.7L473.4 487.5L472.4 490.2L471.3 492.7L470.2 495.0L469.2 497.1L468.1 498.9L467.0 500.6L466.0 502.0L464.9 503.1L463.9 504.1L462.9 504.8L461.8 505.3L460.9 505.5M487.3 431.2L486.8 435.7L486.3 440.2L485.7 444.6L485.1 448.9L484.4 453.2L483.7 457.4L483.0 461.4L482.2 465.4L481.4 469.2L480.5 472.8L479.6 476.3L478.7 479.7L477.8 482.9L476.8 485.9L475.9 488.7L474.9 491.3L473.9 493.7L472.8 496.0L471.8 498.0L470.8 499.8L469.7 501.3L468.7 502.7L467.6 503.8L466.6 504.6L465.6 505.2L464.5 505.6L463.5 505.8M487.4 443.2L486.9 447.6L486.4 451.9L485.9 456.1L485.2 460.2L484.6 464.2L483.9 468.0L483.2 471.7L482.4 475.3L481.6 478.7L480.7 482.0L479.9 485.0L479.0 487.9L478.0 490.6L477.1 493.1L476.1 495.4L475.1 497.5L474.1 499.3L473.1 501.0L472.1 502.4L471.0 503.6L470.0 504.5L468.9 505.2L467.9 505.7L466.9 505.9M489.7 419.0L489.7 423.6L489.6 428.2L489.5 432.8L489.2 437.3L489.0 441.8L488.7 446.2L488.3 450.5L487.9 454.7L487.4 458.9L486.9 462.9L486.3 466.8L485.7 470.6L485.1 474.2L484.4 477.6L483.6 481.0L482.8 484.1L482.0 487.0L481.2 489.8L480.3 492.4L479.4 494.7L478.4 496.9L477.5 498.8L476.5 500.5L475.5 502.0L474.4 503.3L473.4 504.3L472.3 505.1L471.3 505.6L470.2 505.9M490.4 443.2L490.2 447.6L489.9 451.9L489.6 456.1L489.3 460.2L488.8 464.2L488.4 468.0L487.8 471.7L487.3 475.3L486.6 478.7L486.0 482.0L485.3 485.0L484.5 487.9L483.7 490.6L482.9 493.1L482.0 495.4L481.1 497.5L480.1 499.3L479.2 501.0L478.2 502.4L477.1 503.6L476.1 504.5L475.0 505.2L474.0 505.7M491.7 431.2L491.8 435.7L491.8 440.2L491.8 444.6L491.8 448.9L491.6 453.2L491.4 457.4L491.2 461.4L490.8 465.4L490.5 469.2L490.0 472.8L489.5 476.3L489.0 479.7L488.4 482.9L487.7 485.9L487.0 488.7L486.3 491.3L485.5 493.7L484.6 496.0L483.7 498.0L482.8 499.8L481.9 501.3L480.9 502.7L479.8 503.8L478.8 504.6L477.7 505.2L476.6 505.6M493.3 443.0L493.4 447.4L493.4 451.6L493.4 455.8L493.2 459.9L493.1 463.9L492.8 467.7L492.5 471.4L492.1 475.0L491.7 478.4L491.2 481.6L490.6 484.7L490.0 487.5L489.3 490.2L488.6 492.7L487.8 495.0L487.0 497.1L486.1 498.9L485.2 500.6L484.2 502.0L483.2 503.1L482.2 504.1L481.1 504.8L480.0 505.3M491.1 409.7L491.8 414.3L492.5 418.8L493.0 423.4L493.6 427.9L494.0 432.5L494.4 436.9L494.7 441.4L494.9 445.7L495.1 450.0L495.2 454.2L495.2 458.3L495.2 462.3L495.1 466.2L494.9 469.9L494.6 473.5L494.3 476.9L493.9 480.2L493.5 483.3L492.9 486.2L492.3 489.0L491.7 491.5L491.0 493.9L490.2 496.0L489.4 497.9L488.5 499.7L487.6 501.1L486.6 502.4L485.5 503.4L484.5 504.2L483.3 504.8M496.2 442.6L496.6 446.9L496.9 451.1L497.1 455.3L497.2 459.3L497.2 463.3L497.2 467.1L497.1 470.7L496.9 474.3L496.7 477.6L496.3 480.8L495.9 483.9L495.4 486.7L494.9 489.4L494.3 491.9L493.6 494.1L492.8 496.2L492.0 498.1L491.2 499.7L490.2 501.1L489.2 502.3L488.2 503.2L487.1 503.9L485.9 504.4M496.0 430.6L496.7 435.0L497.3 439.4L497.8 443.7L498.3 448.0L498.7 452.2L499.0 456.3L499.2 460.3L499.3 464.1L499.4 467.9L499.3 471.5L499.2 474.9L499.0 478.2L498.8 481.4L498.4 484.3L498.0 487.1L497.5 489.7L496.9 492.1L496.2 494.3L495.5 496.3L494.7 498.0L493.8 499.6L492.9 500.9L491.8 502.0L490.8 502.9L489.6 503.5M499.1 442.0L499.7 446.2L500.2 450.4L500.7 454.5L501.1 458.5L501.3 462.4L501.5 466.1L501.6 469.7L501.6 473.2L501.6 476.6L501.4 479.7L501.1 482.7L500.8 485.6L500.4 488.2L499.9 490.6L499.3 492.9L498.6 494.9L497.8 496.8L497.0 498.4L496.1 499.8L495.1 501.0L494.1 501.9L493.0 502.6M495.1 418.3L496.3 422.7L497.4 427.1L498.4 431.5L499.4 435.8L500.2 440.1L501.0 444.4L501.7 448.6L502.3 452.6L502.8 456.6L503.2 460.5L503.6 464.3L503.8 467.9L503.9 471.4L504.0 474.8L503.9 478.0L503.8 481.0L503.5 483.9L503.2 486.6L502.8 489.1L502.3 491.4L501.7 493.5L501.0 495.4L500.2 497.1L499.3 498.5L498.4 499.8L497.3 500.8L496.2 501.6M501.9 441.1L502.8 445.3L503.6 449.4L504.2 453.4L504.8 457.3L505.3 461.2L505.7 464.8L506.0 468.4L506.2 471.8L506.3 475.1L506.3 478.2L506.2 481.2L506.0 484.0L505.7 486.6L505.3 489.0L504.8 491.2L504.2 493.3L503.5 495.1L502.7 496.7L501.9 498.1L500.9 499.2L499.8 500.2L498.7 500.9M500.1 429.3L501.4 433.6L502.5 437.8L503.6 442.0L504.6 446.1L505.5 450.1L506.2 454.1L506.9 457.9L507.5 461.7L508.0 465.3L508.3 468.8L508.6 472.1L508.7 475.3L508.8 478.4L508.7 481.2L508.5 483.9L508.3 486.5L507.9 488.8L507.4 490.9L506.8 492.9L506.1 494.6L505.3 496.1L504.4 497.5L503.4 498.6L502.3 499.4M504.6 440.1L505.7 444.2L506.8 448.2L507.7 452.1L508.5 455.9L509.2 459.7L509.9 463.3L510.3 466.8L510.7 470.1L511.0 473.3L511.2 476.4L511.2 479.3L511.1 482.0L510.9 484.6L510.6 487.0L510.2 489.2L509.7 491.2L509.1 493.0L508.3 494.5L507.5 495.9L506.5 497.1L505.5 498.0L504.3 498.8M493.9 408.9L495.8 413.1L497.7 417.3L499.4 421.5L501.1 425.7L502.6 429.9L504.1 434.0L505.5 438.1L506.8 442.2L508.0 446.2L509.1 450.1L510.0 453.9L510.9 457.6L511.6 461.2L512.3 464.7L512.8 468.1L513.2 471.3L513.4 474.4L513.6 477.3L513.6 480.1L513.5 482.6L513.3 485.1L513.0 487.3L512.6 489.3L512.0 491.2L511.3 492.8L510.5 494.3L509.6 495.5L508.6 496.5L507.4 497.3M507.2 438.8L508.6 442.8L509.9 446.7L511.0 450.5L512.1 454.3L513.0 457.9L513.8 461.4L514.5 464.8L515.1 468.1L515.5 471.2L515.8 474.2L516.0 477.1L516.1 479.7L516.0 482.2L515.8 484.6L515.4 486.7L515.0 488.7L514.4 490.4L513.7 492.0L512.9 493.4L511.9 494.5L510.9 495.5M504.0 427.5L505.8 431.5L507.5 435.5L509.0 439.5L510.5 443.3L511.8 447.2L513.1 450.9L514.2 454.5L515.2 458.1L516.0 461.5L516.8 464.8L517.4 468.0L517.8 471.1L518.2 474.0L518.4 476.7L518.4 479.3L518.4 481.7L518.2 484.0L517.9 486.0L517.4 487.9L516.8 489.6L516.1 491.1L515.2 492.4L514.2 493.5L513.1 494.3M509.8 437.4L511.4 441.2L512.9 445.0L514.3 448.7L515.5 452.3L516.6 455.8L517.6 459.3L518.5 462.6L519.2 465.7L519.8 468.8L520.3 471.7L520.6 474.5L520.8 477.1L520.8 479.5L520.7 481.8L520.5 483.9L520.1 485.8L519.6 487.6L518.9 489.1L518.1 490.4L517.2 491.6L516.1 492.5M500.0 416.0L502.3 419.9L504.5 423.8L506.5 427.7L508.5 431.5L510.4 435.4L512.2 439.1L513.8 442.9L515.3 446.5L516.7 450.1L518.0 453.6L519.1 457.0L520.1 460.3L521.0 463.4L521.7 466.5L522.3 469.4L522.7 472.1L523.0 474.8L523.1 477.2L523.1 479.5L523.0 481.7L522.7 483.6L522.2 485.4L521.6 487.0L520.9 488.4L520.0 489.6L519.0 490.6M512.2 435.8L514.0 439.5L515.7 443.1L517.3 446.7L518.8 450.2L520.1 453.5L521.3 456.8L522.3 460.0L523.2 463.1L524.0 466.0L524.5 468.9L525.0 471.5L525.3 474.1L525.4 476.4L525.4 478.7L525.2 480.7L524.9 482.6L524.5 484.3L523.8 485.8L523.1 487.1L522.1 488.3M507.6 425.1L509.8 428.8L512.0 432.5L514.0 436.1L515.9 439.7L517.7 443.3L519.3 446.7L520.8 450.1L522.2 453.4L523.4 456.6L524.5 459.7L525.4 462.6L526.2 465.5L526.8 468.2L527.2 470.8L527.5 473.2L527.7 475.5L527.6 477.6L527.5 479.6L527.1 481.4L526.6 483.0L526.0 484.5L525.1 485.7L524.2 486.8M514.5 434.0L516.5 437.5L518.4 441.0L520.2 444.4L521.9 447.7L523.4 451.0L524.7 454.1L525.9 457.2L527.0 460.2L527.9 463.0L528.6 465.7L529.1 468.3L529.6 470.7L529.8 473.0L529.9 475.2L529.8 477.2L529.5 479.0L529.1 480.7L528.5 482.2L527.8 483.5L526.8 484.6M496.4 407.3L499.3 410.8L502.1 414.3L504.9 417.9L507.5 421.4L510.1 424.9L512.5 428.4L514.8 431.9L517.0 435.4L519.1 438.8L521.0 442.1L522.8 445.4L524.4 448.6L525.9 451.7L527.2 454.7L528.4 457.6L529.4 460.4L530.3 463.1L530.9 465.7L531.5 468.2L531.8 470.5L532.0 472.6L532.0 474.6L531.8 476.5L531.5 478.2L530.9 479.7L530.3 481.1L529.4 482.3M516.6 432.1L518.9 435.4L521.0 438.7L522.9 441.9L524.8 445.1L526.4 448.2L527.9 451.2L529.3 454.1L530.5 456.9L531.5 459.7L532.4 462.3L533.0 464.7L533.6 467.1L533.9 469.3L534.0 471.4L534.0 473.3L533.8 475.1L533.4 476.7L532.9 478.2L532.2 479.5M510.8 422.2L513.4 425.6L516.0 428.9L518.4 432.1L520.7 435.4L522.9 438.5L524.9 441.7L526.7 444.7L528.4 447.7L530.0 450.6L531.3 453.4L532.5 456.1L533.6 458.8L534.4 461.3L535.1 463.6L535.6 465.9L535.9 468.0L536.0 470.0L536.0 471.9L535.8 473.6L535.3 475.1L534.7 476.5L534.0 477.7M518.6 430.0L521.0 433.1L523.3 436.2L525.5 439.3L527.5 442.3L529.3 445.2L530.9 448.0L532.4 450.8L533.8 453.5L534.9 456.1L535.9 458.5L536.7 460.9L537.3 463.2L537.7 465.3L537.9 467.3L538.0 469.1L537.8 470.9L537.5 472.4L537.0 473.9L536.2 475.1M504.0 412.4L507.1 415.5L510.2 418.6L513.1 421.7L516.0 424.8L518.7 427.8L521.2 430.9L523.6 433.9L525.9 436.9L528.0 439.8L530.0 442.7L531.8 445.4L533.4 448.2L534.9 450.8L536.1 453.3L537.2 455.8L538.1 458.1L538.8 460.4L539.3 462.5L539.7 464.5L539.8 466.3L539.8 468.1L539.5 469.7L539.1 471.1L538.4 472.4M520.4 427.7L523.0 430.7L525.5 433.6L527.8 436.4L529.9 439.2L531.9 442.0L533.7 444.6L535.3 447.2L536.8 449.8L538.0 452.2M513.4 418.9L516.5 421.8L519.4 424.7L522.2 427.5L524.8 430.3L527.3 433.1L529.6 435.8L531.8 438.5L533.8 441.1L535.6 443.7L537.2 446.2L538.6 448.6L539.9 451.0L540.9 453.2L541.8 455.4L542.5 457.4L542.9 459.4L543.2 461.2L543.3 462.9L543.1 464.5L542.8 465.9L542.2 467.3M522.1 425.3L524.8 428.1L527.4 430.7L529.9 433.4L532.2 436.0L534.3 438.5L536.2 441.0L537.9 443.5L539.5 445.9L540.9 448.1M498.2 405.0L501.9 407.6L505.5 410.2L509.0 412.8L512.4 415.4L515.7 418.0L518.8 420.6L521.9 423.2L524.7 425.8L527.5 428.4L530.0 431.0L532.4 433.5L534.7 436.0L536.7 438.4L538.6 440.8L540.2 443.1L541.7 445.3L543.0 447.5L544.1 449.5L545.0 451.5L545.6 453.4L546.1 455.3L546.3 457.0L546.4 458.6L546.2 460.0L545.8 461.4M523.6 422.8L526.4 425.3L529.2 427.8L531.8 430.2L534.2 432.6L536.4 435.0L538.4 437.3L540.3 439.5L541.9 441.7L543.4 443.9M515.6 415.2L519.0 417.6L522.2 420.0L525.2 422.3L528.1 424.7L530.9 427.0L533.4 429.3L535.8 431.6L538.1 433.8L540.1 436.0L541.9 438.2L543.6 440.3L545.0 442.3L546.2 444.3L547.2 446.2L548.0 448.0L548.6 449.7L549.0 451.4L549.1 452.9L549.1 454.4L548.8 455.8M524.8 420.2L527.9 422.5L530.7 424.7L533.4 426.9L535.9 429.1L538.2 431.2L540.4 433.3L542.3 435.4L544.1 437.4L545.6 439.4M506.7 407.7L510.5 409.8L514.1 411.9L517.7 414.0L521.1 416.1L524.4 418.2L527.5 420.3L530.4 422.4L533.2 424.5L535.8 426.6L538.3 428.6L540.5 430.6L542.6 432.6L544.4 434.6L546.1 436.5L547.5 438.3L548.7 440.1L549.7 441.9L550.5 443.5L551.1 445.1L551.4 446.7L551.5 448.1L551.4 449.5M525.9 417.5L529.1 419.5L532.0 421.5L534.8 423.5L537.4 425.4L539.8 427.3L542.0 429.2L544.0 431.1L545.9 433.0L547.5 434.8M517.2 411.2L520.8 413.1L524.2 414.9L527.5 416.8L530.6 418.6L533.5 420.5L536.3 422.3L538.9 424.1L541.2 426.0L543.4 427.8L545.4 429.5L547.2 431.3L548.8 433.0L550.1 434.6L551.2 436.2L552.2 437.8L552.8 439.3L553.3 440.8L553.5 442.2L553.5 443.5M526.8 414.7L530.0 416.5L533.1 418.2L535.9 419.9L538.6 421.6L541.1 423.3L543.4 425.0L545.5 426.7L547.3 428.4L549.0 430.0M499.3 402.3L503.4 403.7L507.5 405.1L511.5 406.6L515.3 408.1L519.1 409.7L522.6 411.2L526.1 412.8L529.4 414.4L532.5 416.0L535.4 417.6L538.2 419.2L540.8 420.8L543.2 422.4L545.4 424.0L547.3 425.5L549.1 427.1L550.6 428.6L552.0 430.1L553.0 431.5L553.9 433.0L554.5 434.3L554.9 435.7L555.1 437.0L555.0 438.2M527.5 411.9L530.8 413.3L533.9 414.8L536.8 416.3L539.5 417.8L542.1 419.3L544.4 420.7L546.5 422.2L548.5 423.7L550.2 425.1M518.3 407.0L522.0 408.3L525.5 409.6L528.9 410.9L532.1 412.2L535.2 413.5L538.1 414.9L540.8 416.3L543.3 417.6L545.6 419.0L547.6 420.4L549.5 421.7L551.2 423.1L552.6 424.4L553.8 425.8L554.8 427.1L555.5 428.3L556.0 429.6L556.2 430.8M528.0 409.0L531.3 410.2L534.4 411.4L537.4 412.6L540.2 413.8L542.8 415.1L545.1 416.4L547.3 417.6L549.3 418.9L551.0 420.1M508.0 402.4L512.0 403.3L516.0 404.2L519.8 405.2L523.5 406.1L527.0 407.2L530.4 408.2L533.6 409.3L536.6 410.4L539.5 411.5L542.2 412.6L544.6 413.8L546.9 414.9L548.9 416.1L550.7 417.2L552.3 418.4L553.7 419.6L554.8 420.8L555.7 421.9L556.4 423.1L556.8 424.2L557.0 425.3M528.3 406.0L531.6 406.9L534.8 407.9L537.8 408.9L540.6 409.9L543.2 410.9L545.6 411.9L547.7 413.0L549.7 414.0L551.5 415.1M518.7 402.7L522.4 403.3L526.0 404.0L529.5 404.8L532.7 405.6L535.9 406.4L538.8 407.3L541.5 408.1L544.1 409.1L546.4 410.0L548.5 410.9L550.4 411.9L552.1 412.9L553.6 413.9L554.8 414.9L555.8 416.0L556.5 417.0L557.1 418.0L557.3 419.1M528.3 403.1L531.7 403.7L534.8 404.4L537.8 405.1L540.6 405.8L543.2 406.6L545.6 407.4L547.8 408.3L549.8 409.1L551.6 410.0"/><path fill="none" stroke="#07070f" stroke-width="1.25" stroke-dasharray="5 2.2 3 2 7 2.5" shape-rendering="crispEdges" d="M502.0 462.2L504.9 461.3L507.8 460.2L510.6 459.0L513.4 457.7L516.0 456.2L518.6 454.6L521.1 452.8L523.5 450.9L525.7 448.9L527.9 446.7L529.9 444.4L531.8 442.1L533.6 439.6L535.2 437.0L536.7 434.3L538.1 431.6L539.3 428.8L540.3 425.9L541.2 422.9L541.9 419.9L542.5 416.9L542.9 413.8L543.2 410.7L543.2 407.6L543.2 404.5L542.9 401.4L542.5 398.2L542.0 395.1L541.2 392.1L540.4 389.0L539.3 386.0L538.1 383.1L536.8 380.2L535.3 377.4L533.7 374.6L531.9 372.0L530.0 369.4L528.0 366.9L525.9 364.5L523.6 362.3L521.3 360.1L518.8 358.1L516.2 356.2L513.6 354.4L510.8 352.8L508.0 351.3L505.1 349.9L502.2 348.7L499.2 347.7L496.2 346.8L493.1 346.1L490.0 345.5L486.9 345.1L483.8 344.8L480.7 344.8L477.6 344.8L474.5 345.1L471.4 345.5L468.4 346.1L465.4 346.8L462.4 347.7L459.6 348.7M502.3 468.9L505.6 468.0L508.7 466.8L511.8 465.5L514.8 464.0L517.7 462.4L520.5 460.6L523.2 458.7L525.8 456.6L528.3 454.4L530.7 452.0L532.9 449.5L535.0 446.9L536.9 444.2L538.7 441.4L540.3 438.5L541.8 435.5L543.1 432.4L544.3 429.2L545.2 426.0L546.0 422.7L546.7 419.4L547.1 416.0L547.4 412.6L547.5 409.2L547.4 405.8L547.1 402.4L546.7 399.0L546.1 395.6L545.3 392.2L544.3 388.9L543.2 385.6L541.9 382.4L540.4 379.2L538.8 376.1L537.0 373.1L535.1 370.2L533.0 367.4L530.8 364.7L528.5 362.1L526.0 359.6L523.4 357.2L520.7 355.0L517.9 352.9L515.0 351.0L512.0 349.2L508.9 347.6L505.8 346.1L502.6 344.8L499.3 343.6L496.0 342.7L492.6 341.9L489.2 341.2L485.8 340.8L482.4 340.5L479.0 340.4L475.6 340.5L472.2 340.8L468.9 341.2L465.5 341.9L462.3 342.7L459.0 343.6L455.9 344.8M502.4 475.2L505.9 474.2L509.3 473.0L512.6 471.6L515.8 470.0L518.9 468.2L522.0 466.3L524.9 464.2L527.7 462.0L530.4 459.6L532.9 457.0L535.3 454.3L537.5 451.5L539.6 448.6L541.6 445.6L543.3 442.4L544.9 439.2L546.3 435.9L547.5 432.5L548.6 429.0L549.5 425.5L550.1 421.9L550.6 418.2L550.9 414.6L551.0 410.9L550.9 407.2L550.6 403.5L550.2 399.9L549.5 396.2L548.7 392.6L547.6 389.0L546.4 385.5L545.0 382.0L543.4 378.6L541.7 375.3L539.8 372.0L537.7 368.9L535.4 365.8L533.1 362.9L530.5 360.1L527.9 357.4L525.1 354.9L522.2 352.5L519.1 350.3L516.0 348.2L512.8 346.2L509.5 344.5L506.1 342.9L502.6 341.5L499.1 340.2L495.5 339.2L491.9 338.3L488.3 337.7L484.6 337.2L480.9 336.9L477.2 336.8L473.6 336.9L469.9 337.2L466.3 337.7L462.7 338.3L459.2 339.2L455.7 340.2L452.3 341.5M502.1 481.0L505.8 479.9L509.4 478.6L512.9 477.1L516.4 475.4L519.7 473.5L522.9 471.5L526.0 469.3L529.0 466.9L531.9 464.4L534.6 461.7L537.1 458.8L539.5 455.8L541.7 452.7L543.7 449.5L545.6 446.2L547.3 442.7L548.8 439.2L550.1 435.6L551.2 431.9L552.1 428.1L552.9 424.3L553.4 420.5L553.7 416.6L553.8 412.7L553.7 408.7L553.4 404.8L552.9 400.9L552.2 397.0L551.3 393.2L550.2 389.4L548.9 385.6L547.4 381.9L545.7 378.3L543.9 374.8L541.8 371.3L539.6 368.0L537.2 364.8L534.7 361.7L532.0 358.7L529.2 355.8L526.2 353.1L523.1 350.6L519.9 348.2L516.6 346.0L513.2 343.9L509.6 342.1L506.0 340.4L502.4 338.9L498.6 337.6L494.8 336.5L491.0 335.6L487.1 334.8L483.2 334.3L479.3 334.0L475.4 333.9L471.5 334.0L467.6 334.3L463.8 334.8L460.0 335.6L456.2 336.5L452.6 337.6L449.0 338.9M501.6 486.2L505.4 485.1L509.2 483.7L512.9 482.1L516.5 480.3L520.0 478.4L523.4 476.2L526.7 473.9L529.8 471.4L532.8 468.7L535.6 465.9L538.3 462.9L540.8 459.8L543.1 456.5L545.2 453.1L547.2 449.6L549.0 446.0L550.5 442.3L551.9 438.5L553.1 434.6L554.1 430.7L554.8 426.7L555.4 422.6L555.7 418.6L555.8 414.5L555.7 410.4L555.4 406.2L554.9 402.1L554.1 398.1L553.2 394.0L552.0 390.0L550.6 386.1L549.1 382.2L547.3 378.4L545.4 374.7L543.2 371.1L540.9 367.6L538.4 364.2L535.8 360.9L533.0 357.8L530.0 354.8L526.9 352.0L523.6 349.3L520.2 346.8L516.8 344.5L513.2 342.3L509.5 340.4L505.7 338.6L501.8 337.0L497.9 335.7L493.9 334.5L489.9 333.5L485.8 332.8L481.7 332.3L477.6 331.9L473.5 331.8L469.4 331.9L465.4 332.3L461.3 332.8L457.3 333.5L453.4 334.5L449.5 335.7L445.8 337.0M500.8 490.4L504.8 489.2L508.7 487.8L512.5 486.1L516.3 484.3L519.9 482.3L523.4 480.1L526.8 477.6L530.0 475.1L533.1 472.3L536.0 469.4L538.8 466.3L541.4 463.0L543.8 459.7L546.0 456.2L548.0 452.5L549.9 448.8L551.5 444.9L552.9 441.0L554.1 437.0L555.1 432.9L555.9 428.8L556.5 424.6L556.8 420.4L556.9 416.1L556.8 411.9L556.5 407.6L555.9 403.4L555.2 399.2L554.2 395.0L553.0 390.8L551.6 386.8L550.0 382.8L512.8 341.5L509.0 339.5L505.0 337.6L501.0 336.0L497.0 334.6L492.9 333.4L488.7 332.4L484.5 331.6L480.2 331.0L476.0 330.7L471.8 330.6L467.5 330.7L463.3 331.0L459.2 331.6L455.0 332.4L451.0 333.4L446.9 334.6L443.0 336.0"/><path fill="#4e7bec" fill-opacity="0.86" d="M492.9 400.2L495.9 400.9L498.9 401.5L501.9 401.9L502.3 401.2L502.7 400.5L503.0 399.8L505.2 400.6L507.2 401.6L509.3 402.8L512.3 403.2L515.2 403.5L518.1 403.8L516.5 404.9L514.9 405.9L513.2 406.6L514.3 408.5L515.3 410.4L516.2 412.5L513.7 410.7L511.0 409.0L508.3 407.4L506.0 407.2L503.8 406.8L501.6 406.2L501.6 405.4L501.6 404.5L501.5 403.7L498.7 402.4L495.8 401.2ZM492.6 397.6L495.2 396.2L497.7 394.7L500.1 393.1L499.9 392.3L499.7 391.5L499.5 390.7L501.5 389.9L503.6 389.3L505.7 388.9L508.0 387.2L510.2 385.5L512.3 383.7L511.9 385.7L511.4 387.5L510.8 389.3L512.7 390.0L514.6 390.8L516.4 391.8L513.6 392.2L510.8 392.6L507.9 393.2L506.3 394.5L504.5 395.7L502.6 396.7L502.1 396.0L501.5 395.4L500.9 394.8L498.1 395.6L495.3 396.5ZM490.7 395.8L491.6 393.0L492.4 390.2L493.1 387.3L492.4 386.7L491.8 386.2L491.0 385.7L491.9 383.7L493.0 381.9L494.3 380.1L494.6 377.2L494.9 374.3L495.1 371.4L496.2 373.3L497.2 375.1L497.9 377.0L499.6 376.3L501.4 375.7L503.4 375.2L501.7 377.4L500.2 379.7L498.6 382.1L498.3 384.3L497.9 386.4L497.2 388.5L496.4 388.3L495.6 388.2L494.7 388.1L493.3 390.5L491.9 393.1ZM488.1 395.6L487.0 392.7L485.7 389.9L484.2 387.1L483.4 387.1L482.5 387.1L481.6 387.1L481.0 385.0L480.5 382.7L480.2 380.5L478.4 377.8L476.5 375.2L474.6 372.7L476.7 373.5L478.7 374.4L480.6 375.5L481.3 373.7L482.1 372.0L483.1 370.4L483.5 373.3L484.0 376.2L484.6 379.3L485.9 381.2L487.1 383.3L488.0 385.4L487.3 385.8L486.6 386.2L485.9 386.7L486.5 389.6L487.3 392.6ZM486.1 397.1L483.3 395.5L480.5 394.0L477.6 392.7L476.9 393.2L476.3 393.8L475.7 394.4L473.7 393.0L471.8 391.5L470.0 389.9L466.8 388.8L463.6 387.8L460.4 386.9L462.6 386.3L464.7 385.8L466.9 385.5L466.2 383.6L465.6 381.6L465.1 379.6L467.5 381.7L470.0 383.9L472.5 386.0L474.9 386.8L477.1 387.8L479.3 388.9L479.0 389.7L478.7 390.5L478.6 391.2L481.0 393.3L483.5 395.2ZM485.6 399.6L482.5 400.0L479.4 400.7L476.4 401.5L476.2 402.3L476.1 403.1L476.0 404.0L473.6 404.1L471.1 404.1L468.7 403.9L465.4 405.0L462.2 406.2L459.1 407.5L460.4 405.6L461.8 403.9L463.3 402.3L461.4 401.2L459.6 399.9L457.9 398.6L461.2 398.8L464.6 399.1L468.0 399.2L470.3 398.4L472.7 397.8L475.1 397.3L475.4 398.1L475.7 398.9L476.1 399.7L479.3 399.7L482.4 399.7ZM486.7 401.9L484.8 404.2L482.9 406.7L481.0 409.2L481.4 410.0L481.9 410.8L482.4 411.5L480.6 413.1L478.7 414.6L476.7 416.0L474.8 418.9L473.0 421.8L471.3 424.7L471.2 422.4L471.2 420.2L471.4 418.0L469.2 418.3L467.0 418.4L464.7 418.4L467.6 416.5L470.4 414.6L473.2 412.7L474.5 410.6L475.9 408.6L477.4 406.7L478.2 407.2L478.9 407.6L479.7 408.0L482.2 406.0L484.5 404.0ZM489.1 403.0L489.1 406.1L489.2 409.3L489.5 412.4L490.2 412.8L491.0 413.1L491.8 413.4L491.5 415.7L491.0 418.1L490.3 420.5L490.6 423.9L491.0 427.2L491.4 430.6L489.9 428.9L488.6 427.2L487.5 425.4L485.9 427.0L484.3 428.4L482.4 429.8L483.6 426.6L484.6 423.4L485.6 420.1L485.3 417.6L485.1 415.2L485.2 412.8L486.0 412.7L486.9 412.5L487.7 412.3L488.3 409.2L488.8 406.1ZM491.6 402.3L493.5 404.8L495.6 407.2L497.7 409.5L498.5 409.3L499.2 409.1L500.0 408.7L501.2 410.8L502.3 413.0L503.1 415.3L505.4 417.7L507.6 420.0L509.8 422.3L507.8 422.0L505.9 421.5L504.0 420.9L503.8 423.1L503.4 425.3L502.8 427.5L501.8 424.3L500.7 421.1L499.5 418.0L497.8 416.3L496.2 414.5L494.7 412.6L495.3 411.9L495.8 411.3L496.3 410.6L494.9 407.7L493.3 405.0ZM523.3 397.8L525.6 397.0L527.8 396.0L529.8 395.0L529.5 392.4L529.0 389.9L528.4 387.4L530.6 389.0L532.7 390.8L534.7 392.7L536.6 392.0L538.4 391.3L540.1 390.5L539.9 393.4L539.5 396.1L538.9 398.8L540.3 401.7L541.5 404.7L542.5 407.9L540.5 406.6L538.5 405.4L536.3 404.2L534.8 406.0L533.1 407.6L531.3 409.0L531.3 406.4L531.1 403.7L530.7 401.2L528.3 399.9L525.8 398.8ZM511.7 375.3L512.6 373.0L513.3 370.6L513.8 368.3L511.9 366.5L509.9 364.8L507.8 363.2L510.1 362.9L512.6 362.8L515.0 362.9L515.6 360.9L516.0 359.0L516.3 357.1L518.2 359.6L519.9 362.1L521.4 364.7L524.0 366.1L526.6 367.6L529.2 369.4L527.4 369.8L525.5 370.4L523.6 371.1L523.9 373.6L523.9 376.1L523.8 378.5L522.1 376.5L520.3 374.5L518.4 372.7L516.1 373.4L513.9 374.3ZM488.7 364.8L487.6 362.2L486.3 359.8L484.9 357.4L482.3 357.2L479.7 357.1L477.1 357.1L478.4 355.3L479.9 353.5L481.5 351.8L480.2 349.7L478.8 347.6L477.4 345.7L480.6 346.6L483.7 347.6L486.7 348.8L489.3 348.1L491.9 347.5L494.7 347.2L494.1 348.9L493.5 350.8L493.0 352.8L495.1 354.8L497.0 356.9L498.7 359.0L496.2 358.5L493.6 358.2L491.1 357.9L490.2 360.1L489.4 362.4ZM465.2 371.2L462.4 369.8L459.6 368.5L456.7 367.3L454.6 368.8L452.6 370.4L450.7 372.1L450.2 369.6L449.9 367.1L449.8 364.6L447.0 363.5L444.2 362.5L441.5 361.7L444.7 360.4L447.9 359.4L451.1 358.6L452.2 356.2L453.6 353.9L455.2 351.7L456.3 353.7L457.5 355.8L458.8 358.0L461.9 358.4L464.9 358.9L467.8 359.7L465.6 360.9L463.6 362.3L461.6 363.8L462.7 366.2L463.9 368.7ZM452.0 391.6L448.8 392.0L445.6 392.7L442.4 393.4L441.8 395.9L441.3 398.5L441.0 401.1L438.8 399.3L436.7 397.4L434.7 395.3L431.6 396.0L428.5 396.8L425.5 397.7L427.2 394.7L429.1 391.9L431.1 389.3L430.3 386.6L429.6 383.7L429.1 380.8L431.7 382.0L434.4 383.1L437.1 384.2L439.9 382.6L442.7 381.3L445.5 380.2L444.8 382.6L444.2 385.0L443.7 387.4L446.4 388.9L449.2 390.3ZM455.4 416.3L453.1 418.6L450.8 421.0L448.7 423.5L449.8 425.9L451.1 428.2L452.4 430.5L449.4 430.4L446.4 430.1L443.4 429.6L441.1 431.9L438.9 434.3L436.8 436.7L436.4 433.4L436.3 430.0L436.3 426.8L433.7 425.0L431.1 423.0L428.7 420.9L431.7 420.4L434.8 419.8L438.0 419.1L439.3 416.2L440.7 413.5L442.3 410.9L443.4 413.3L444.5 415.6L445.8 417.9L449.0 417.5L452.2 417.0ZM473.8 433.9L473.3 437.1L472.9 440.3L472.6 443.5L474.9 444.7L477.3 445.7L479.7 446.6L477.2 448.3L474.5 449.9L471.7 451.3L471.1 454.5L470.6 457.6L470.2 460.6L468.0 458.3L466.0 455.8L464.1 453.3L460.8 453.5L457.5 453.5L454.1 453.2L456.4 451.1L458.7 448.8L461.0 446.5L460.4 443.5L460.0 440.5L459.7 437.5L462.0 438.7L464.4 439.9L466.9 440.9L469.3 438.7L471.6 436.3ZM498.5 436.1L500.0 438.8L501.4 441.5L503.0 444.0L505.4 443.5L507.7 442.7L510.1 441.9L509.1 444.8L507.8 447.6L506.4 450.4L507.6 453.1L508.8 455.6L510.0 458.1L507.1 457.8L504.3 457.3L501.5 456.6L499.0 458.7L496.3 460.8L493.5 462.6L494.2 459.6L494.9 456.5L495.5 453.4L493.4 451.6L491.4 449.6L489.5 447.5L492.1 447.0L494.6 446.4L497.1 445.6L497.7 442.5L498.2 439.3ZM518.1 421.8L520.6 423.0L523.1 424.0L525.6 424.9L526.9 422.8L528.2 420.7L529.3 418.5L530.1 421.3L530.8 424.2L531.3 427.3L533.5 428.4L535.6 429.5L537.6 430.5L535.5 432.2L533.3 433.7L531.1 435.0L530.4 438.3L529.5 441.5L528.4 444.7L527.4 442.1L526.4 439.4L525.2 436.7L522.7 436.8L520.3 436.6L517.8 436.2L519.4 434.2L520.9 432.1L522.3 430.0L521.0 427.2L519.7 424.4ZM544.6 421.7L546.4 421.3L548.0 420.7L549.6 420.1L550.2 416.3L550.5 412.4L550.6 408.5L551.5 412.0L552.2 415.6L552.7 419.2L553.8 419.2L554.7 419.2L555.5 419.1L554.8 422.5L553.9 425.7L552.8 428.9L552.3 433.1L551.6 437.3L550.7 441.5L550.3 439.4L549.9 437.3L549.3 435.3L547.5 437.3L545.7 439.1L543.7 440.7L545.2 437.0L546.5 433.3L547.5 429.4L546.7 426.8L545.8 424.2ZM538.7 378.5L539.2 376.8L539.6 375.0L539.8 373.3L537.7 369.8L535.5 366.5L533.0 363.3L535.5 365.3L537.9 367.5L540.3 369.8L540.5 368.8L540.5 367.9L540.4 367.0L542.4 370.3L544.2 373.7L545.7 377.1L547.7 380.6L549.6 384.2L551.3 388.0L550.3 386.9L549.2 385.9L548.0 384.9L548.4 387.8L548.6 390.7L548.6 393.5L547.4 389.6L546.0 385.8L544.3 382.1L542.5 380.7L540.7 379.6ZM506.6 347.9L505.4 345.9L504.1 344.0L502.6 342.2L498.8 340.7L495.0 339.5L491.0 338.5L493.8 338.3L496.6 338.3L499.4 338.5L498.3 337.2L497.2 336.1L495.9 335.2L499.8 336.7L503.6 338.4L507.2 340.3L510.6 341.6L514.0 343.2L517.4 345.0L516.6 345.0L515.7 345.2L514.8 345.5L517.3 347.8L519.7 350.1L521.8 352.6L518.5 350.3L515.1 348.2L511.6 346.3L509.9 346.6L508.2 347.2ZM463.4 344.1L460.8 343.0L458.1 342.1L455.4 341.4L451.6 342.6L447.9 344.1L444.3 345.8L445.8 343.7L447.5 341.7L449.3 339.8L447.2 339.2L445.0 338.8L442.9 338.5L447.0 337.3L451.2 336.4L455.4 335.8L458.4 334.5L461.6 333.4L464.9 332.4L464.9 333.3L465.0 334.3L465.1 335.5L468.8 335.8L472.4 336.4L476.0 337.2L472.1 337.5L468.3 338.1L464.6 338.9L464.1 340.5L463.7 342.2ZM429.3 369.0L426.2 369.5L423.2 370.3L420.2 371.2L418.2 374.6L416.4 378.1L414.8 381.8L414.1 378.9L413.7 376.0L413.4 373.1L410.9 373.8L408.4 374.5L406.1 375.3L408.7 371.9L411.5 368.7L414.4 365.6L415.5 362.4L416.8 359.3L418.4 356.3L419.5 357.3L420.8 358.4L422.2 359.5L425.6 357.6L429.0 355.9L432.4 354.5L429.9 357.3L427.5 360.2L425.3 363.3L426.5 365.1L427.8 367.0ZM420.2 410.8L417.9 413.0L415.7 415.3L413.6 417.7L414.2 421.7L415.1 425.7L416.2 429.6L413.5 427.5L410.9 425.3L408.5 423.0L406.5 424.8L404.5 426.7L402.7 428.5L402.8 424.3L403.1 420.0L403.6 415.9L402.0 412.5L400.7 409.0L399.6 405.4L401.7 405.8L403.9 406.1L406.2 406.4L407.9 402.9L409.7 399.6L411.6 396.4L411.6 400.3L411.8 404.2L412.2 408.1L414.8 409.1L417.5 410.0ZM440.5 450.1L439.7 453.2L439.1 456.2L438.5 459.2L441.5 461.9L444.6 464.5L447.9 466.9L444.2 466.8L440.6 466.4L436.9 465.9L436.0 468.4L435.2 470.8L434.4 473.2L432.1 469.9L429.8 466.5L427.8 463.0L424.2 461.1L420.7 459.1L417.3 456.8L419.7 456.0L422.1 455.1L424.6 454.2L423.9 450.6L423.5 446.9L423.2 443.3L425.8 446.5L428.5 449.5L431.4 452.3L434.4 451.7L437.4 451.0ZM480.5 468.5L481.4 471.1L482.4 473.7L483.5 476.2L487.3 476.4L491.2 476.4L495.1 476.2L492.0 478.2L488.7 480.2L485.3 481.9L485.6 484.2L486.0 486.3L486.4 488.4L482.8 487.5L479.3 486.3L475.9 485.0L471.7 485.7L467.5 486.1L463.2 486.4L465.1 484.5L466.9 482.6L468.7 480.5L466.3 478.2L464.0 475.8L461.9 473.3L465.8 474.2L469.8 474.8L473.8 475.3L476.2 473.1L478.4 470.9ZM521.7 457.2L523.6 458.5L525.5 459.7L527.3 460.7L530.2 458.4L533.0 455.8L535.7 453.1L534.3 456.6L532.8 460.1L531.0 463.5L532.1 464.8L533.2 465.9L534.2 467.0L531.3 468.7L528.3 470.2L525.3 471.5L522.3 474.6L519.2 477.5L515.9 480.3L516.7 478.0L517.4 475.5L517.9 473.0L515.1 473.0L512.3 472.7L509.4 472.2L513.0 470.4L516.4 468.5L519.7 466.3L520.5 463.3L521.2 460.3ZM556.0 404.5L556.0 403.2L555.9 401.8L555.6 400.4L554.6 395.8L553.2 391.2L551.6 386.7L553.0 390.4L554.1 394.2L555.1 398.1L555.0 397.7L554.9 397.2L554.8 396.7L555.7 400.7L556.4 404.7L556.9 408.7L557.3 413.3L557.4 418.0L557.3 422.7L557.4 420.9L557.4 419.2L557.4 417.4L557.4 420.5L557.2 423.6L557.0 426.5L557.3 421.7L557.4 416.9L557.2 412.1L557.0 409.5L556.5 407.0ZM530.2 354.4L528.8 353.0L527.2 351.7L525.6 350.3L521.8 347.3L517.8 344.5L513.6 341.9L516.6 343.7L519.5 345.7L522.4 347.8L521.4 347.0L520.4 346.3L519.3 345.5L523.1 348.3L526.6 351.1L530.0 354.2L533.1 357.3L536.1 360.6L539.0 364.2L538.3 363.2L537.6 362.4L536.9 361.5L539.2 364.3L541.3 367.3L543.3 370.2L540.5 366.2L537.5 362.3L534.3 358.6L533.0 357.1L531.6 355.7ZM479.1 331.1L476.6 330.6L474.0 330.2L471.4 330.0L466.6 330.1L461.7 330.4L457.0 331.0L459.9 330.5L462.8 330.2L465.9 330.1L464.0 330.2L462.2 330.3L460.4 330.5L465.0 330.1L469.7 330.0L474.4 330.1L478.3 330.5L482.3 330.9L486.3 331.6L485.9 331.6L485.5 331.5L485.1 331.4L489.1 332.2L493.0 333.2L496.8 334.4L492.2 333.0L487.6 331.9L483.0 331.1L481.7 330.9L480.4 330.9ZM426.7 345.4L423.9 346.3L421.2 347.4L418.5 348.6L415.0 351.7L411.6 355.1L408.4 358.6L409.8 356.1L411.3 353.7L413.1 351.5L411.3 352.6L409.6 353.8L408.0 355.1L411.4 351.9L415.0 348.9L418.8 346.1L421.7 344.0L424.8 342.1L428.0 340.4L428.0 340.3L428.0 340.4L428.2 340.5L432.0 338.7L435.8 337.1L439.8 335.7L435.6 337.5L431.6 339.6L427.7 341.9L427.3 343.0L426.9 344.1ZM397.4 390.7L395.4 392.9L393.5 395.2L391.7 397.6L391.0 402.3L390.6 407.1L390.4 412.0L389.4 408.9L388.6 405.7L388.0 402.6L386.7 404.3L385.6 406.0L384.6 407.7L385.4 403.1L386.5 398.6L387.8 394.1L388.2 390.4L388.9 386.7L389.9 383.1L390.4 383.4L391.2 383.7L392.0 384.1L394.1 380.4L396.3 376.8L398.8 373.4L397.0 377.6L395.4 381.9L394.2 386.3L395.1 387.8L396.2 389.2ZM405.0 445.7L404.4 448.5L403.8 451.3L403.5 454.0L405.9 458.2L408.6 462.3L411.6 466.2L408.4 464.2L405.3 462.0L402.4 459.6L401.9 461.4L401.4 463.2L401.1 464.8L399.1 460.8L397.4 456.7L395.8 452.4L393.4 449.0L391.2 445.4L389.2 441.7L390.5 441.9L391.9 442.1L393.4 442.2L393.1 438.2L392.9 434.1L392.9 430.0L394.4 434.6L396.1 439.0L398.0 443.4L400.2 444.3L402.6 445.0ZM445.9 484.8L446.6 487.1L447.4 489.4L448.3 491.5L452.7 493.2L457.3 494.7L461.8 495.9L457.7 496.1L453.6 496.1L449.5 495.8L449.6 497.3L449.8 498.6L450.0 499.8L446.3 498.0L442.6 496.0L439.1 493.8L434.8 492.5L430.6 490.8L426.4 489.0L428.2 488.7L430.0 488.3L431.8 487.7L429.4 485.0L427.1 482.1L425.0 479.0L429.0 481.8L433.2 484.3L437.5 486.5L440.3 486.1L443.1 485.5ZM501.0 489.6L502.4 490.7L503.8 491.7L505.2 492.5L509.5 490.9L513.7 489.2L517.8 487.1L514.4 489.7L511.0 492.1L507.4 494.3L507.7 495.1L508.0 495.7L508.2 496.2L504.7 497.3L501.1 498.3L497.5 499.0L493.1 500.5L488.6 501.7L484.0 502.7L485.8 501.7L487.5 500.6L489.1 499.3L486.1 498.9L483.0 498.3L479.9 497.5L484.7 497.1L489.4 496.4L494.1 495.5L496.5 493.7L498.8 491.7ZM544.4 457.9L545.6 457.6L546.7 457.1L547.6 456.5L549.7 452.5L551.6 448.3L553.2 444.0L551.9 448.0L550.5 451.9L548.8 455.8L548.9 455.8L548.9 455.8L548.9 455.8L547.2 459.1L545.4 462.3L543.5 465.4L540.9 469.2L538.1 473.0L535.1 476.5L536.4 475.0L537.6 473.3L538.6 471.5L536.6 473.4L534.4 475.2L532.0 476.7L535.4 473.4L538.5 469.8L541.4 466.1L542.6 463.4L543.6 460.7ZM396.0 369.6L394.4 372.0L392.9 374.5L391.5 377.0L389.4 381.4L387.5 385.8L385.8 390.4L386.8 387.7L387.8 385.0L388.9 382.4L388.1 384.2L387.4 386.1L386.7 387.9L388.4 383.7L390.2 379.5L392.4 375.5L394.1 372.4L396.0 369.5L397.9 366.6L398.0 366.5L398.1 366.4L398.2 366.3L400.8 362.9L403.6 359.6L406.5 356.5L403.3 359.9L400.4 363.4L397.6 367.1L397.0 367.9L396.5 368.7ZM383.7 426.3L383.5 429.0L383.4 431.6L383.5 434.1L384.6 439.0L385.9 443.7L387.6 448.4L386.2 445.3L385.0 442.2L384.0 439.1L384.4 440.6L384.8 442.1L385.2 443.5L384.0 439.3L383.1 435.1L382.3 430.7L381.9 427.0L381.6 423.3L381.4 419.7L381.4 419.9L381.4 420.1L381.4 420.4L381.4 416.3L381.6 412.2L382.0 408.1L381.7 412.8L381.6 417.6L381.9 422.3L382.3 423.6L382.9 425.0ZM411.1 479.6L412.0 481.5L413.0 483.3L414.1 485.0L417.9 488.1L421.9 491.0L426.0 493.6L422.6 491.8L419.3 489.9L416.2 487.8L416.7 488.4L417.3 488.9L418.0 489.4L414.8 487.0L411.7 484.4L408.6 481.6L405.7 478.7L402.9 475.6L400.3 472.5L400.9 473.2L401.5 473.9L402.2 474.5L400.0 471.5L398.0 468.3L396.1 465.0L399.0 469.0L402.0 472.9L405.3 476.6L407.1 477.7L409.1 478.7ZM465.4 504.4L466.7 505.0L468.0 505.5L469.2 505.8L473.9 505.8L478.6 505.5L483.3 504.9L479.2 505.5L475.1 505.8L471.0 506.0L471.1 506.0L471.3 506.0L471.4 506.0L467.8 506.0L464.2 505.8L460.5 505.5L456.1 505.0L451.8 504.2L447.5 503.2L449.1 503.6L450.6 504.0L452.2 504.3L449.1 503.5L446.1 502.6L443.0 501.4L447.7 502.8L452.5 503.9L457.4 504.8L460.0 504.8L462.7 504.7Z"/><defs><radialGradient id="bhl"><stop offset="0" stop-color="#4e7bec" stop-opacity="1"/><stop offset="0.62" stop-color="#4e7bec" stop-opacity=".9"/><stop offset="1" stop-color="#4e7bec" stop-opacity="0"/></radialGradient></defs><circle cx="488.7" cy="399.8" r="31" fill="url(#bhl)"/><circle cx="488.7" cy="399.8" r="7" fill="#4e7bec"/><circle cx="469.4" cy="418.0" r="86.5" fill="none" stroke="#4e7bec" stroke-width="5"/><path fill="#000" d="M655.8 431.6 L655.5 432.1 L655.3 432.7 L655.2 433.3 L655.1 433.9 L655.1 434.6 L655.2 435.3 L655.6 435.5 L656.0 435.6 L656.5 435.8 L657.0 435.9 L657.5 436.0 L658.0 436.2 L657.8 436.8 L657.6 437.5 L657.2 438.2 L656.8 438.9 L656.4 439.7 L655.8 440.4 L655.9 441.5 L656.1 442.6 L656.2 443.8 L656.4 445.0 L656.6 446.3 L656.8 447.6 L655.7 447.0 L654.7 446.4 L653.7 445.8 L652.8 445.2 L651.9 444.7 L651.1 444.1 L650.0 444.6 L648.9 445.1 L647.7 445.6 L646.5 446.1 L645.3 446.5 L644.0 447.0 L644.8 445.8 L645.6 444.6 L646.4 443.4 L647.1 442.3 L647.9 441.2 L648.6 440.1 L648.6 439.3 L648.6 438.6 L648.7 437.8 L648.9 437.1 L649.1 436.5 L649.4 435.8 L650.0 435.7 L650.6 435.6 L651.2 435.5 L651.7 435.4 L652.3 435.3 L652.8 435.2 L653.4 434.5 L654.0 433.9 L654.5 433.2 L655.0 432.6 L655.4 432.1Z M656.8 431.5 L657.8 432.0 L658.8 432.5 L659.9 433.0 L661.1 433.5 L662.2 434.1 L663.5 434.7 L664.0 434.8 L664.6 434.8 L665.2 434.9 L665.8 434.9 L666.4 434.9 L666.9 435.0 L667.8 435.5 L668.6 436.2 L669.3 436.8 L669.9 437.5 L670.5 438.3 L671.0 439.0 L672.4 440.0 L673.8 441.0 L675.2 442.0 L676.6 443.0 L677.9 444.2 L679.3 445.3 L678.0 444.9 L676.6 444.6 L675.3 444.2 L674.0 443.9 L672.7 443.5 L671.4 443.1 L671.0 443.7 L670.6 444.4 L670.1 445.0 L669.5 445.7 L668.9 446.3 L668.2 447.0 L667.7 445.7 L667.1 444.5 L666.6 443.3 L666.0 442.2 L665.4 441.0 L664.8 440.0 L663.7 439.3 L662.8 438.6 L661.8 438.0 L661.0 437.3 L660.2 436.7 L659.5 436.1 L659.9 435.9 L660.2 435.7 L660.6 435.6 L660.9 435.4 L661.1 435.2 L661.4 435.0 L660.8 434.3 L660.1 433.7 L659.3 433.1 L658.5 432.5 L657.7 432.0Z M657.4 431.3 L659.2 431.5 L661.0 431.7 L662.8 432.0 L664.6 432.2 L666.4 432.5 L668.3 432.8 L668.7 432.8 L669.2 432.8 L669.6 432.7 L670.0 432.7 L670.4 432.6 L670.8 432.5 L672.2 432.9 L673.7 433.3 L675.1 433.8 L676.5 434.3 L677.9 434.8 L679.2 435.4 L681.2 436.0 L683.2 436.7 L685.1 437.4 L687.1 438.2 L689.0 439.0 L690.9 439.8 L689.9 439.7 L688.9 439.6 L687.8 439.4 L686.7 439.3 L685.6 439.1 L684.5 439.0 L685.0 439.6 L685.4 440.2 L685.8 440.9 L686.1 441.6 L686.4 442.3 L686.7 443.0 L685.1 441.9 L683.5 440.9 L681.8 439.9 L680.2 438.9 L678.5 438.0 L676.8 437.2 L675.3 436.8 L673.7 436.3 L672.2 435.9 L670.8 435.5 L669.3 435.1 L667.9 434.7 L667.9 434.4 L667.9 434.2 L667.8 434.0 L667.7 433.8 L667.6 433.6 L667.5 433.4 L665.9 432.9 L664.2 432.5 L662.6 432.1 L660.9 431.8 L659.2 431.5Z M657.4 431.0 L659.1 430.9 L660.8 430.8 L662.5 430.7 L664.2 430.7 L665.8 430.6 L667.3 430.6 L667.5 430.5 L667.6 430.4 L667.6 430.3 L667.7 430.2 L667.7 430.1 L667.7 430.0 L669.1 430.1 L670.5 430.3 L672.0 430.5 L673.5 430.7 L675.0 431.0 L676.5 431.3 L678.2 431.6 L679.8 431.9 L681.5 432.3 L683.1 432.7 L684.7 433.2 L686.2 433.7 L686.0 433.7 L685.8 433.6 L685.5 433.6 L685.1 433.6 L684.7 433.6 L684.2 433.6 L685.4 434.1 L686.5 434.6 L687.6 435.1 L688.7 435.6 L689.8 436.2 L690.8 436.8 L688.9 436.1 L687.0 435.4 L685.0 434.7 L683.1 434.1 L681.1 433.6 L679.1 433.1 L677.8 432.9 L676.4 432.7 L675.0 432.6 L673.6 432.4 L672.2 432.3 L670.7 432.1 L670.4 432.0 L669.9 431.8 L669.5 431.6 L669.1 431.5 L668.7 431.3 L668.2 431.2 L666.4 431.0 L664.6 430.9 L662.8 430.9 L661.0 430.9 L659.2 430.9Z M656.7 430.8 L657.6 430.5 L658.4 430.1 L659.2 429.8 L659.9 429.5 L660.5 429.3 L661.1 429.1 L660.8 429.0 L660.6 428.9 L660.2 428.8 L659.9 428.8 L659.5 428.7 L659.1 428.6 L659.8 428.6 L660.6 428.5 L661.4 428.5 L662.3 428.5 L663.2 428.5 L664.2 428.6 L664.8 428.6 L665.4 428.7 L665.9 428.8 L666.4 428.8 L667.0 428.9 L667.5 429.0 L668.2 429.1 L668.8 429.1 L669.4 429.2 L669.9 429.3 L670.4 429.4 L670.8 429.5 L672.0 429.7 L673.3 429.9 L674.6 430.2 L676.0 430.5 L677.3 430.9 L678.7 431.2 L677.3 430.9 L676.0 430.5 L674.6 430.2 L673.3 429.9 L671.9 429.7 L670.6 429.5 L670.1 429.5 L669.6 429.5 L668.9 429.6 L668.3 429.6 L667.5 429.7 L666.7 429.7 L666.1 429.7 L665.5 429.6 L664.9 429.5 L664.3 429.5 L663.8 429.4 L663.2 429.4 L662.0 429.5 L660.9 429.7 L659.8 429.9 L658.7 430.2 L657.7 430.5Z M655.7 430.8 L655.3 430.4 L654.9 430.0 L654.3 429.7 L653.8 429.4 L653.2 429.1 L652.5 428.9 L652.0 428.9 L651.4 428.9 L650.9 428.9 L650.3 428.9 L649.7 429.0 L649.1 429.0 L648.8 428.9 L648.5 428.8 L648.3 428.7 L648.1 428.6 L648.1 428.6 L648.1 428.6 L647.3 428.6 L646.5 428.7 L645.7 428.8 L644.8 428.9 L643.9 429.0 L643.1 429.2 L644.4 429.0 L645.7 428.8 L646.9 428.7 L648.1 428.6 L649.3 428.5 L650.4 428.4 L651.2 428.3 L652.0 428.3 L652.9 428.3 L653.8 428.2 L654.9 428.2 L655.9 428.2 L655.8 428.2 L655.6 428.2 L655.5 428.2 L655.4 428.2 L655.3 428.2 L655.3 428.2 L655.8 428.2 L656.3 428.2 L656.8 428.3 L657.1 428.3 L657.4 428.5 L657.7 428.6 L657.1 428.6 L656.6 428.6 L656.1 428.7 L655.7 428.7 L655.3 428.7 L654.9 428.8 L654.8 429.0 L654.9 429.3 L655.0 429.6 L655.2 430.0 L655.4 430.4Z M654.8 430.9 L653.4 430.7 L651.8 430.5 L650.3 430.4 L648.7 430.3 L647.1 430.2 L645.5 430.2 L645.0 430.3 L644.4 430.4 L643.9 430.5 L643.4 430.7 L642.8 430.8 L642.3 430.9 L641.1 431.0 L639.9 431.0 L638.8 431.0 L637.7 431.1 L636.6 431.2 L635.6 431.2 L633.9 431.6 L632.1 431.9 L630.3 432.4 L628.5 432.9 L626.8 433.4 L625.0 434.0 L626.3 433.5 L627.5 433.1 L628.8 432.6 L630.1 432.2 L631.4 431.8 L632.6 431.4 L632.6 431.4 L632.6 431.4 L632.6 431.4 L632.8 431.4 L632.9 431.3 L633.2 431.2 L634.3 430.9 L635.5 430.7 L636.6 430.4 L637.8 430.1 L639.0 429.9 L640.3 429.8 L641.6 429.6 L643.0 429.4 L644.3 429.3 L645.5 429.2 L646.7 429.2 L647.8 429.2 L647.6 429.3 L647.4 429.4 L647.3 429.5 L647.2 429.6 L647.1 429.7 L647.0 429.8 L648.2 429.9 L649.5 430.0 L650.7 430.2 L652.1 430.4 L653.4 430.7Z M654.5 431.2 L652.6 431.3 L650.8 431.4 L648.9 431.6 L647.1 431.8 L645.2 432.1 L643.4 432.4 L643.1 432.6 L642.9 432.8 L642.6 433.0 L642.4 433.1 L642.1 433.3 L641.9 433.6 L640.4 433.8 L638.9 434.1 L637.3 434.4 L635.8 434.7 L634.3 435.0 L632.7 435.3 L630.8 436.0 L628.8 436.8 L626.9 437.5 L625.0 438.4 L623.2 439.3 L621.3 440.2 L622.0 439.5 L622.7 438.9 L623.4 438.2 L624.2 437.6 L625.0 437.0 L625.8 436.5 L624.9 436.6 L624.1 436.6 L623.3 436.7 L622.6 436.7 L621.8 436.8 L621.2 436.8 L623.0 436.2 L624.9 435.5 L626.8 435.0 L628.7 434.4 L630.7 433.9 L632.6 433.4 L634.2 433.0 L635.7 432.6 L637.2 432.2 L638.8 431.8 L640.3 431.6 L641.8 431.3 L642.0 431.4 L642.3 431.5 L642.5 431.6 L642.8 431.6 L643.1 431.7 L643.4 431.8 L645.2 431.6 L647.1 431.5 L648.9 431.4 L650.8 431.3 L652.6 431.2Z M654.8 431.4 L653.5 431.8 L652.1 432.2 L650.8 432.7 L649.6 433.2 L648.4 433.8 L647.2 434.4 L647.3 434.6 L647.4 434.8 L647.6 435.0 L647.7 435.2 L647.9 435.4 L648.1 435.6 L647.0 436.2 L645.8 436.7 L644.6 437.2 L643.4 437.8 L642.1 438.4 L640.7 439.0 L639.5 440.0 L638.3 441.0 L637.2 442.1 L636.1 443.2 L635.0 444.3 L633.9 445.6 L633.6 444.8 L633.4 444.1 L633.2 443.5 L633.1 442.8 L633.1 442.1 L633.1 441.5 L631.8 441.8 L630.6 442.0 L629.3 442.3 L628.0 442.5 L626.7 442.8 L625.4 443.0 L627.2 442.0 L628.9 441.0 L630.7 440.1 L632.4 439.2 L634.2 438.3 L635.9 437.5 L636.9 436.8 L637.9 436.2 L639.0 435.5 L640.1 435.0 L641.3 434.4 L642.5 433.9 L643.0 433.9 L643.5 433.9 L644.1 434.0 L644.6 434.0 L645.1 434.0 L645.7 433.9 L647.3 433.5 L648.9 433.0 L650.4 432.6 L651.9 432.2 L653.4 431.8Z M662.4 447.0 L663.3 448.1 L664.3 449.3 L665.2 450.4 L666.3 451.7 L667.3 452.9 L668.5 454.2 L670.0 454.3 L671.5 454.4 L673.1 454.5 L674.6 454.6 L676.1 454.7 L677.7 454.8 L677.3 456.0 L676.8 457.2 L676.2 458.5 L675.6 459.7 L674.8 461.0 L674.1 462.3 L674.9 464.0 L675.7 465.6 L676.5 467.3 L677.3 469.0 L678.1 470.8 L678.9 472.5 L676.9 471.9 L674.8 471.3 L672.8 470.6 L670.9 469.9 L668.9 469.3 L667.0 468.6 L665.3 469.4 L663.6 470.3 L661.8 471.2 L659.9 472.0 L658.1 472.8 L656.1 473.7 L656.4 471.8 L656.7 470.0 L657.0 468.3 L657.2 466.5 L657.5 464.8 L657.7 463.1 L656.4 461.9 L655.2 460.7 L654.0 459.6 L652.9 458.4 L651.8 457.2 L650.8 456.1 L652.4 455.9 L654.0 455.6 L655.5 455.4 L657.0 455.1 L658.6 454.8 L660.0 454.6 L660.6 453.2 L661.1 451.9 L661.5 450.6 L661.9 449.4 L662.2 448.2Z M682.8 443.8 L684.5 444.7 L686.2 445.6 L687.9 446.6 L689.6 447.5 L691.4 448.5 L693.1 449.5 L694.2 449.4 L695.2 449.3 L696.2 449.1 L697.2 449.0 L698.1 448.8 L699.0 448.7 L699.8 449.9 L700.4 451.1 L701.0 452.3 L701.6 453.6 L702.0 454.9 L702.4 456.2 L704.0 457.7 L705.5 459.1 L707.0 460.6 L708.5 462.1 L709.9 463.6 L711.3 465.2 L709.8 464.9 L708.3 464.6 L706.7 464.3 L705.1 463.9 L703.4 463.6 L701.7 463.2 L701.1 464.3 L700.3 465.4 L699.5 466.5 L698.6 467.6 L697.7 468.7 L696.6 469.8 L695.9 468.0 L695.2 466.3 L694.4 464.6 L693.6 462.9 L692.8 461.2 L691.9 459.6 L690.1 458.7 L688.4 457.8 L686.7 456.9 L685.0 456.0 L683.3 455.1 L681.7 454.2 L682.8 453.7 L683.9 453.2 L684.9 452.7 L685.9 452.2 L686.8 451.7 L687.7 451.2 L687.0 449.9 L686.3 448.6 L685.5 447.3 L684.7 446.1 L683.8 445.0Z M690.7 438.0 L692.4 438.6 L694.0 439.2 L695.7 439.8 L697.3 440.5 L698.8 441.1 L700.4 441.8 L700.5 441.6 L700.5 441.4 L700.5 441.1 L700.5 440.9 L700.4 440.7 L700.2 440.5 L701.8 441.4 L703.3 442.5 L704.8 443.5 L706.3 444.6 L707.7 445.7 L709.1 446.9 L710.6 448.0 L712.2 449.2 L713.6 450.4 L715.1 451.6 L716.5 452.8 L717.9 454.1 L717.6 454.0 L717.2 453.9 L716.8 453.8 L716.3 453.6 L715.7 453.5 L715.1 453.4 L715.8 454.4 L716.4 455.5 L716.9 456.7 L717.4 457.8 L717.8 459.0 L718.1 460.1 L716.8 458.5 L715.3 457.0 L713.9 455.5 L712.4 454.0 L710.9 452.6 L709.3 451.2 L707.9 450.6 L706.5 450.0 L705.1 449.4 L703.6 448.7 L702.1 448.1 L700.6 447.5 L700.7 447.0 L700.8 446.4 L700.8 445.8 L700.7 445.2 L700.6 444.6 L700.5 444.0 L698.9 442.9 L697.3 441.8 L695.7 440.8 L694.1 439.8 L692.4 438.9Z M682.3 432.3 L683.2 432.6 L684.1 432.9 L684.9 433.1 L685.7 433.4 L686.5 433.7 L687.2 434.0 L686.3 433.7 L685.4 433.3 L684.5 433.0 L683.5 432.7 L682.4 432.3 L681.4 432.0 L683.1 432.5 L684.8 433.1 L686.6 433.8 L688.4 434.5 L690.2 435.2 L692.1 436.0 L693.1 436.5 L694.2 437.0 L695.3 437.6 L696.3 438.1 L697.4 438.7 L698.4 439.3 L699.2 439.7 L699.9 440.1 L700.6 440.5 L701.2 440.8 L701.7 441.2 L702.1 441.4 L703.8 442.5 L705.4 443.6 L706.9 444.7 L708.5 445.8 L710.0 447.0 L711.4 448.1 L709.9 446.9 L708.3 445.7 L706.8 444.6 L705.2 443.5 L703.6 442.4 L702.1 441.4 L701.6 441.1 L701.1 440.8 L700.5 440.5 L699.9 440.1 L699.3 439.7 L698.6 439.3 L697.7 438.8 L696.7 438.3 L695.7 437.8 L694.7 437.3 L693.6 436.8 L692.5 436.2 L690.8 435.5 L689.1 434.7 L687.4 434.0 L685.7 433.4 L684.0 432.8Z M623.3 435.2 L621.5 435.9 L619.7 436.7 L617.9 437.5 L616.1 438.4 L614.4 439.3 L612.7 440.3 L612.0 440.8 L611.4 441.4 L610.9 442.0 L610.4 442.5 L610.0 443.1 L609.6 443.7 L608.4 444.2 L607.2 444.7 L606.1 445.2 L605.0 445.7 L604.0 446.2 L603.0 446.7 L601.4 447.9 L599.8 449.2 L598.2 450.6 L596.6 452.0 L595.1 453.4 L593.6 454.9 L594.6 453.7 L595.6 452.6 L596.7 451.6 L597.8 450.5 L599.0 449.5 L600.2 448.5 L600.1 448.5 L600.1 448.5 L600.1 448.5 L600.2 448.4 L600.3 448.3 L600.5 448.2 L601.8 447.2 L603.0 446.2 L604.4 445.2 L605.7 444.2 L607.0 443.3 L608.4 442.4 L610.0 441.3 L611.7 440.3 L613.4 439.3 L615.1 438.4 L616.8 437.5 L618.5 436.7 L617.9 437.0 L617.3 437.3 L616.8 437.5 L616.3 437.8 L615.9 438.0 L615.5 438.2 L616.7 437.6 L617.9 437.1 L619.2 436.6 L620.5 436.1 L621.9 435.6Z M623.5 441.3 L622.2 442.3 L620.8 443.4 L619.5 444.5 L618.3 445.7 L617.1 446.9 L616.0 448.2 L616.4 448.7 L616.9 449.3 L617.4 449.8 L618.0 450.4 L618.6 451.0 L619.3 451.5 L617.6 452.3 L615.9 453.0 L614.2 453.8 L612.5 454.6 L610.9 455.3 L609.2 456.1 L607.9 457.6 L606.7 459.2 L605.5 460.8 L604.3 462.4 L603.2 464.1 L602.1 465.8 L601.7 464.6 L601.3 463.5 L601.1 462.3 L600.9 461.2 L600.7 460.1 L600.7 459.0 L599.4 459.2 L598.2 459.4 L597.1 459.6 L596.0 459.8 L594.9 460.0 L593.9 460.2 L595.4 458.8 L596.9 457.4 L598.5 456.0 L600.0 454.6 L601.6 453.3 L603.3 452.0 L604.2 450.8 L605.2 449.5 L606.2 448.3 L607.3 447.1 L608.5 446.0 L609.6 444.9 L610.1 445.1 L610.5 445.3 L611.1 445.5 L611.6 445.7 L612.3 445.9 L612.9 446.1 L614.7 445.2 L616.4 444.4 L618.2 443.6 L620.0 442.8 L621.8 442.1Z M639.0 446.0 L638.7 447.2 L638.4 448.4 L638.2 449.6 L638.1 450.9 L638.0 452.3 L638.0 453.6 L639.3 454.0 L640.6 454.4 L641.9 454.8 L643.3 455.2 L644.7 455.5 L646.2 455.9 L644.8 456.9 L643.4 458.0 L641.9 459.1 L640.4 460.1 L638.8 461.2 L637.2 462.3 L636.9 463.9 L636.6 465.7 L636.4 467.4 L636.1 469.2 L635.9 471.0 L635.8 472.8 L634.2 471.8 L632.6 470.8 L631.1 469.9 L629.7 468.9 L628.4 467.9 L627.1 466.9 L625.1 467.4 L623.2 467.9 L621.3 468.4 L619.4 468.9 L617.5 469.4 L615.6 469.9 L616.7 468.2 L617.9 466.5 L619.1 464.9 L620.3 463.3 L621.5 461.7 L622.7 460.1 L622.5 458.8 L622.3 457.5 L622.2 456.2 L622.2 454.9 L622.2 453.7 L622.3 452.4 L623.7 452.5 L625.0 452.5 L626.4 452.5 L627.7 452.6 L629.1 452.6 L630.5 452.5 L632.0 451.4 L633.5 450.3 L634.9 449.2 L636.3 448.1 L637.7 447.0Z M645.9 472.8 L646.7 474.5 L647.5 476.2 L648.4 477.9 L649.4 479.6 L650.4 481.3 L651.4 483.1 L653.7 483.4 L656.1 483.8 L658.5 484.1 L660.9 484.4 L663.3 484.7 L665.7 485.0 L664.1 486.4 L662.4 487.9 L660.8 489.4 L659.0 490.8 L657.3 492.3 L655.5 493.8 L655.8 495.8 L656.2 497.8 L656.6 499.9 L657.0 501.9 L657.4 504.0 L657.8 506.1 L655.3 505.1 L652.8 504.2 L650.4 503.3 L648.0 502.3 L645.6 501.3 L643.2 500.3 L640.8 501.1 L638.3 501.9 L635.8 502.6 L633.3 503.4 L630.9 504.1 L628.4 504.8 L629.0 502.8 L629.7 500.8 L630.3 498.8 L631.0 496.8 L631.6 494.8 L632.3 492.8 L630.8 491.2 L629.4 489.6 L628.1 488.0 L626.8 486.4 L625.5 484.8 L624.4 483.2 L626.6 483.1 L628.9 483.1 L631.2 482.9 L633.5 482.8 L635.8 482.7 L638.2 482.5 L639.5 480.9 L640.8 479.2 L642.2 477.6 L643.4 476.0 L644.7 474.4Z M688.0 470.8 L689.5 472.2 L691.0 473.7 L692.6 475.1 L694.1 476.6 L695.7 478.1 L697.2 479.6 L699.2 479.6 L701.2 479.5 L703.1 479.4 L705.0 479.3 L706.9 479.2 L708.7 479.1 L708.1 480.8 L707.5 482.4 L706.8 484.1 L706.1 485.8 L705.3 487.5 L704.4 489.3 L705.3 491.2 L706.2 493.1 L707.1 495.0 L707.9 496.9 L708.8 498.9 L709.6 500.8 L707.5 500.4 L705.3 499.9 L703.1 499.3 L700.9 498.8 L698.6 498.3 L696.4 497.7 L694.4 498.9 L692.4 500.1 L690.4 501.3 L688.3 502.5 L686.1 503.6 L683.9 504.8 L684.0 502.7 L684.1 500.6 L684.2 498.5 L684.2 496.5 L684.2 494.4 L684.2 492.4 L682.2 491.1 L680.3 489.8 L678.4 488.5 L676.4 487.2 L674.6 485.9 L672.7 484.6 L675.0 484.1 L677.2 483.6 L679.4 483.1 L681.5 482.5 L683.7 482.0 L685.7 481.4 L686.2 479.6 L686.7 477.8 L687.1 476.0 L687.4 474.2 L687.7 472.5Z M715.1 462.2 L716.6 463.3 L718.1 464.5 L719.6 465.7 L721.0 466.9 L722.4 468.1 L723.8 469.4 L724.5 469.0 L725.2 468.7 L725.8 468.4 L726.3 468.1 L726.7 467.8 L727.0 467.4 L727.8 469.1 L728.5 470.8 L729.1 472.5 L729.7 474.2 L730.2 475.9 L730.7 477.7 L731.7 479.4 L732.7 481.1 L733.7 482.9 L734.6 484.7 L735.4 486.4 L736.3 488.2 L735.5 488.0 L734.7 487.8 L733.8 487.6 L732.8 487.3 L731.7 487.1 L730.6 486.9 L730.1 488.3 L729.6 489.7 L728.9 491.2 L728.2 492.6 L727.3 494.1 L726.4 495.5 L725.9 493.5 L725.4 491.4 L724.9 489.4 L724.2 487.4 L723.6 485.4 L722.9 483.4 L721.4 482.5 L719.8 481.5 L718.2 480.5 L716.6 479.6 L714.9 478.6 L713.2 477.7 L714.4 476.8 L715.6 476.0 L716.6 475.2 L717.6 474.3 L718.5 473.5 L719.4 472.6 L718.8 470.8 L718.2 469.0 L717.5 467.3 L716.7 465.5 L715.9 463.8Z M714.7 451.0 L715.6 451.8 L716.5 452.7 L717.3 453.5 L718.2 454.3 L719.0 455.2 L719.8 456.0 L719.2 455.4 L718.6 454.8 L717.9 454.1 L717.2 453.4 L716.4 452.6 L715.6 451.8 L717.3 453.4 L718.9 455.1 L720.5 456.8 L722.0 458.6 L723.5 460.3 L725.0 462.1 L726.0 463.5 L727.0 464.9 L728.0 466.4 L729.0 467.9 L729.9 469.4 L730.9 470.9 L731.0 471.2 L731.2 471.4 L731.3 471.6 L731.4 471.8 L731.4 471.9 L731.5 472.0 L732.4 473.6 L733.2 475.1 L734.0 476.7 L734.8 478.2 L735.5 479.8 L736.1 481.3 L735.3 479.4 L734.4 477.4 L733.4 475.6 L732.5 473.7 L731.4 471.9 L730.4 470.1 L729.9 469.3 L729.5 468.6 L728.9 467.8 L728.3 467.1 L727.7 466.3 L726.9 465.6 L726.5 464.7 L726.1 463.8 L725.5 462.9 L724.9 462.0 L724.2 461.2 L723.4 460.2 L722.1 458.6 L720.7 457.0 L719.2 455.4 L717.7 453.9 L716.2 452.4Z M593.4 457.0 L592.2 458.6 L591.0 460.2 L589.8 461.9 L588.7 463.5 L587.6 465.3 L586.6 467.0 L586.7 467.9 L586.9 468.8 L587.1 469.7 L587.4 470.6 L587.8 471.5 L588.3 472.4 L587.0 473.2 L585.7 474.0 L584.5 474.9 L583.3 475.7 L582.2 476.6 L581.2 477.4 L580.2 479.3 L579.4 481.2 L578.5 483.2 L577.8 485.2 L577.0 487.2 L576.4 489.2 L576.2 487.7 L576.2 486.2 L576.3 484.7 L576.4 483.3 L576.6 481.8 L577.0 480.3 L576.6 480.5 L576.3 480.7 L576.1 480.9 L576.0 481.1 L575.9 481.2 L575.8 481.4 L576.6 479.7 L577.4 478.0 L578.2 476.3 L579.0 474.6 L579.9 473.0 L580.9 471.3 L581.9 469.6 L583.0 467.9 L584.1 466.3 L585.2 464.6 L586.4 463.0 L587.6 461.4 L587.3 461.8 L587.0 462.2 L586.8 462.5 L586.6 462.9 L586.5 463.2 L586.4 463.5 L587.5 462.4 L588.6 461.3 L589.7 460.2 L590.9 459.1 L592.1 458.1Z M608.6 467.4 L608.3 469.1 L608.0 470.9 L607.8 472.6 L607.7 474.4 L607.7 476.2 L607.7 478.1 L609.3 478.8 L610.9 479.5 L612.6 480.3 L614.4 480.9 L616.3 481.6 L618.1 482.3 L616.2 483.4 L614.3 484.6 L612.4 485.7 L610.6 486.8 L608.7 488.0 L606.8 489.1 L606.5 491.1 L606.1 493.2 L605.8 495.2 L605.6 497.3 L605.4 499.4 L605.2 501.4 L603.5 500.1 L601.9 498.8 L600.3 497.5 L598.8 496.1 L597.4 494.8 L596.1 493.4 L594.2 493.8 L592.4 494.2 L590.7 494.6 L589.0 494.9 L587.3 495.3 L585.8 495.6 L586.6 493.7 L587.5 491.8 L588.5 490.0 L589.4 488.1 L590.4 486.3 L591.5 484.5 L591.2 482.7 L591.0 481.0 L590.8 479.2 L590.8 477.5 L590.8 475.8 L590.9 474.1 L592.0 474.3 L593.3 474.6 L594.6 474.8 L596.0 475.1 L597.5 475.3 L599.0 475.5 L600.5 474.1 L602.1 472.7 L603.7 471.4 L605.3 470.0 L606.9 468.7Z M671.0 505.0 L672.4 506.8 L673.8 508.6 L675.3 510.3 L676.7 512.1 L678.1 513.9 L679.5 515.6 L682.3 515.8 L685.0 515.9 L687.7 516.0 L690.4 516.0 L693.0 516.1 L695.6 516.1 L693.9 517.9 L692.2 519.6 L690.5 521.3 L688.7 523.0 L686.9 524.7 L685.0 526.4 L685.5 528.4 L685.9 530.4 L686.4 532.4 L686.8 534.4 L687.2 536.4 L687.6 538.3 L685.1 537.7 L682.5 537.0 L680.0 536.3 L677.4 535.6 L674.8 534.9 L672.1 534.1 L669.5 535.1 L666.9 536.1 L664.2 537.1 L661.5 538.0 L658.9 539.0 L656.2 539.9 L656.6 537.9 L657.0 535.8 L657.5 533.8 L657.9 531.8 L658.3 529.7 L658.7 527.7 L656.6 526.2 L654.6 524.7 L652.5 523.2 L650.5 521.6 L648.5 520.1 L646.5 518.5 L649.4 518.2 L652.2 517.9 L655.1 517.6 L658.0 517.2 L660.8 516.8 L663.6 516.4 L664.9 514.5 L666.2 512.6 L667.5 510.7 L668.7 508.8 L669.9 506.9Z M718.6 497.7 L720.0 499.2 L721.3 500.7 L722.5 502.2 L723.8 503.8 L725.0 505.3 L726.1 506.8 L727.7 506.5 L729.3 506.3 L730.7 506.0 L732.1 505.6 L733.4 505.3 L734.6 505.0 L734.1 506.9 L733.5 508.9 L732.9 510.8 L732.2 512.8 L731.4 514.7 L730.5 516.6 L730.9 518.6 L731.3 520.5 L731.6 522.4 L731.9 524.3 L732.1 526.3 L732.3 528.2 L731.0 527.9 L729.6 527.6 L728.1 527.3 L726.6 526.9 L725.0 526.6 L723.3 526.2 L721.6 527.7 L719.8 529.1 L718.0 530.5 L716.0 531.9 L714.1 533.2 L712.0 534.6 L712.4 532.5 L712.7 530.4 L713.0 528.3 L713.2 526.2 L713.4 524.1 L713.6 522.0 L711.9 520.8 L710.2 519.7 L708.4 518.5 L706.6 517.4 L704.8 516.2 L702.9 515.0 L705.3 514.2 L707.5 513.4 L709.7 512.6 L711.8 511.8 L713.9 510.9 L715.9 510.1 L716.5 508.0 L717.0 505.9 L717.5 503.8 L717.9 501.8 L718.3 499.7Z M736.9 484.1 L737.6 485.5 L738.2 486.8 L738.7 488.2 L739.1 489.6 L739.5 490.9 L739.9 492.3 L739.8 491.9 L739.7 491.4 L739.5 490.9 L739.4 490.4 L739.2 489.8 L739.0 489.3 L739.7 491.3 L740.2 493.4 L740.7 495.4 L741.2 497.4 L741.6 499.4 L741.9 501.5 L742.2 503.3 L742.4 505.2 L742.6 507.1 L742.8 509.1 L742.9 511.0 L743.0 512.9 L743.0 512.7 L743.0 512.5 L743.0 512.3 L742.9 512.1 L742.9 511.9 L742.9 511.7 L743.0 513.3 L742.9 514.9 L742.7 516.5 L742.5 518.1 L742.1 519.6 L741.7 521.2 L741.8 519.1 L741.8 517.0 L741.8 514.9 L741.8 512.7 L741.7 510.6 L741.5 508.5 L741.0 507.6 L740.4 506.6 L739.8 505.7 L739.1 504.8 L738.3 503.8 L737.4 502.9 L738.1 501.8 L738.7 500.8 L739.2 499.7 L739.6 498.6 L739.9 497.6 L740.1 496.5 L739.7 494.4 L739.3 492.3 L738.8 490.2 L738.2 488.2 L737.6 486.2Z M578.0 476.7 L577.0 478.7 L576.1 480.8 L575.2 482.8 L574.4 484.9 L573.7 487.0 L573.0 489.1 L572.6 490.3 L572.3 491.4 L572.0 492.6 L571.7 493.7 L571.4 494.8 L571.2 495.9 L571.0 496.7 L570.8 497.6 L570.6 498.5 L570.4 499.4 L570.3 500.3 L570.1 501.1 L569.8 503.2 L569.6 505.4 L569.3 507.5 L569.2 509.6 L569.1 511.8 L569.0 513.9 L569.0 512.3 L569.1 510.7 L569.2 509.1 L569.4 507.4 L569.5 505.7 L569.7 504.0 L569.7 504.1 L569.7 504.3 L569.7 504.4 L569.7 504.5 L569.6 504.7 L569.6 504.8 L569.9 502.7 L570.2 500.6 L570.6 498.6 L571.0 496.6 L571.5 494.6 L572.0 492.6 L572.6 490.3 L573.3 488.1 L574.1 485.7 L575.0 483.4 L576.0 481.1 L577.0 478.7 L576.6 479.7 L576.2 480.6 L575.8 481.4 L575.5 482.2 L575.2 483.0 L574.9 483.7 L575.4 482.5 L575.9 481.4 L576.4 480.2 L576.9 479.0 L577.4 477.8Z M580.3 491.8 L580.1 493.9 L580.0 495.9 L580.0 498.0 L580.1 500.1 L580.1 502.2 L580.3 504.3 L581.5 505.3 L582.8 506.3 L584.2 507.3 L585.7 508.3 L587.3 509.2 L589.0 510.2 L587.5 511.2 L586.0 512.3 L584.7 513.3 L583.4 514.3 L582.1 515.3 L580.9 516.4 L580.9 518.5 L581.0 520.6 L581.1 522.7 L581.2 524.8 L581.4 526.9 L581.7 529.1 L580.3 527.6 L579.0 526.1 L577.8 524.5 L576.7 523.0 L575.6 521.5 L574.7 519.9 L573.7 520.2 L572.9 520.4 L572.1 520.7 L571.5 520.9 L570.9 521.1 L570.4 521.3 L570.4 519.4 L570.5 517.5 L570.7 515.6 L570.9 513.7 L571.1 511.8 L571.4 509.9 L571.2 507.9 L571.1 505.9 L571.0 503.9 L571.0 502.0 L571.1 500.0 L571.3 498.1 L571.6 498.5 L572.0 498.9 L572.5 499.3 L573.1 499.6 L573.8 500.0 L574.6 500.4 L575.4 499.0 L576.3 497.5 L577.2 496.1 L578.2 494.7 L579.2 493.2Z M616.4 502.7 L617.2 504.7 L618.1 506.7 L619.0 508.7 L619.9 510.7 L620.9 512.7 L622.0 514.6 L624.6 515.3 L627.2 515.9 L629.9 516.5 L632.6 517.1 L635.3 517.6 L638.1 518.2 L636.0 519.5 L634.0 520.9 L631.9 522.3 L629.9 523.6 L627.9 525.0 L625.9 526.3 L626.2 528.4 L626.5 530.4 L626.9 532.5 L627.3 534.6 L627.7 536.6 L628.1 538.7 L625.6 537.6 L623.1 536.4 L620.6 535.2 L618.2 534.0 L615.8 532.8 L613.5 531.6 L611.1 532.2 L608.8 532.7 L606.6 533.2 L604.4 533.7 L602.3 534.2 L600.2 534.6 L600.5 532.7 L600.9 530.8 L601.3 528.8 L601.7 526.8 L602.1 524.9 L602.6 522.9 L601.1 521.1 L599.7 519.2 L598.3 517.4 L597.0 515.5 L595.7 513.7 L594.5 511.8 L596.6 512.0 L598.7 512.2 L600.9 512.3 L603.2 512.4 L605.5 512.5 L607.9 512.6 L609.2 511.0 L610.6 509.3 L612.0 507.7 L613.5 506.0 L614.9 504.3Z M641.9 538.9 L643.3 540.7 L644.7 542.5 L646.1 544.4 L647.5 546.1 L648.9 547.9 L650.3 549.6 L653.2 550.0 L656.1 550.4 L659.0 550.7 L661.9 551.0 L664.8 551.2 L667.7 551.5 L665.6 552.9 L663.5 554.3 L661.5 555.7 L659.5 557.0 L657.4 558.4 L655.4 559.7 L655.8 561.4 L656.2 563.2 L656.6 564.9 L657.0 566.6 L657.4 568.3 L657.8 569.9 L655.3 569.2 L652.9 568.4 L650.4 567.7 L647.9 566.9 L645.3 566.1 L642.8 565.2 L640.4 565.8 L638.0 566.5 L635.7 567.1 L633.4 567.6 L631.2 568.2 L629.0 568.7 L629.1 567.1 L629.2 565.4 L629.3 563.8 L629.5 562.1 L629.6 560.3 L629.8 558.6 L627.8 557.1 L625.8 555.6 L623.8 554.1 L621.8 552.5 L619.8 550.9 L617.9 549.3 L620.4 549.3 L623.1 549.3 L625.8 549.3 L628.5 549.2 L631.2 549.1 L634.0 549.0 L635.3 547.3 L636.6 545.7 L637.9 544.0 L639.2 542.3 L640.6 540.6Z M700.4 536.0 L701.6 537.6 L702.7 539.2 L703.8 540.8 L704.9 542.3 L705.9 543.9 L706.8 545.4 L709.1 545.3 L711.3 545.1 L713.5 545.0 L715.6 544.8 L717.6 544.6 L719.5 544.4 L717.9 546.1 L716.3 547.9 L714.6 549.6 L712.9 551.3 L711.2 553.0 L709.4 554.7 L709.3 556.4 L709.2 558.2 L709.1 559.9 L708.9 561.5 L708.7 563.2 L708.4 564.8 L706.8 564.5 L705.1 564.1 L703.4 563.7 L701.5 563.4 L699.6 562.9 L697.7 562.5 L695.3 563.6 L693.0 564.7 L690.6 565.7 L688.2 566.7 L685.8 567.7 L683.3 568.7 L684.0 567.0 L684.6 565.3 L685.3 563.5 L685.9 561.7 L686.5 559.9 L687.1 558.1 L685.4 557.0 L683.6 555.9 L681.8 554.7 L679.9 553.5 L678.0 552.3 L676.1 551.0 L679.0 550.5 L681.8 550.0 L684.5 549.4 L687.3 548.8 L690.0 548.2 L692.6 547.6 L694.0 545.7 L695.3 543.8 L696.6 541.9 L697.9 539.9 L699.2 538.0Z M738.1 524.1 L738.5 525.6 L738.8 527.0 L739.1 528.4 L739.3 529.9 L739.5 531.3 L739.6 532.7 L740.2 532.3 L740.7 531.9 L741.1 531.5 L741.4 531.1 L741.6 530.7 L741.7 530.3 L741.3 532.3 L740.9 534.2 L740.3 536.2 L739.8 538.1 L739.1 540.0 L738.4 541.9 L737.9 543.7 L737.3 545.5 L736.7 547.3 L736.0 549.0 L735.3 550.7 L734.6 552.5 L734.5 552.3 L734.4 552.1 L734.2 551.9 L733.9 551.7 L733.5 551.5 L733.0 551.3 L731.8 552.8 L730.6 554.2 L729.3 555.5 L727.9 556.9 L726.4 558.3 L724.9 559.6 L725.8 557.8 L726.7 555.9 L727.5 554.0 L728.3 552.1 L729.1 550.2 L729.8 548.2 L729.2 547.3 L728.5 546.4 L727.7 545.5 L726.9 544.6 L726.0 543.6 L725.0 542.6 L726.7 541.7 L728.4 540.7 L729.9 539.8 L731.4 538.8 L732.8 537.8 L734.1 536.8 L734.9 534.7 L735.7 532.6 L736.4 530.5 L737.0 528.4 L737.6 526.2Z M569.0 516.9 L569.1 519.1 L569.2 521.3 L569.4 523.4 L569.7 525.6 L570.0 527.7 L570.4 529.8 L570.8 530.9 L571.4 532.0 L572.0 533.1 L572.7 534.1 L573.5 535.2 L574.4 536.3 L574.0 537.2 L573.8 538.1 L573.6 539.0 L573.4 539.9 L573.4 540.7 L573.4 541.6 L574.1 543.6 L574.8 545.6 L575.5 547.6 L576.3 549.5 L577.2 551.5 L578.0 553.4 L577.2 551.9 L576.5 550.5 L575.9 549.0 L575.3 547.6 L574.7 546.1 L574.2 544.7 L574.3 545.0 L574.4 545.3 L574.5 545.6 L574.6 546.0 L574.8 546.4 L575.0 546.9 L574.2 545.0 L573.6 543.0 L572.9 541.1 L572.4 539.2 L571.8 537.3 L571.4 535.3 L570.9 533.4 L570.5 531.5 L570.2 529.6 L569.9 527.6 L569.6 525.6 L569.4 523.6 L569.4 523.9 L569.5 524.2 L569.5 524.6 L569.5 524.9 L569.6 525.3 L569.6 525.6 L569.5 524.2 L569.3 522.7 L569.2 521.3 L569.1 519.8 L569.1 518.4Z M590.1 531.3 L591.0 533.4 L592.0 535.5 L593.1 537.5 L594.1 539.5 L595.3 541.5 L596.4 543.5 L598.6 544.3 L600.8 545.2 L603.1 546.0 L605.5 546.7 L607.9 547.5 L610.3 548.2 L608.8 549.3 L607.2 550.4 L605.8 551.5 L604.4 552.5 L603.0 553.5 L601.7 554.5 L602.4 556.4 L603.1 558.2 L603.9 560.1 L604.7 561.9 L605.5 563.7 L606.3 565.4 L604.1 564.2 L602.1 563.1 L600.0 561.9 L598.0 560.6 L596.0 559.4 L594.1 558.1 L592.8 558.4 L591.5 558.7 L590.3 559.0 L589.2 559.2 L588.2 559.4 L587.2 559.7 L586.7 558.0 L586.3 556.3 L585.8 554.6 L585.5 552.9 L585.1 551.2 L584.8 549.4 L583.5 547.6 L582.1 545.8 L580.9 544.0 L579.7 542.1 L578.5 540.2 L577.4 538.3 L578.6 538.7 L579.8 539.0 L581.1 539.4 L582.6 539.7 L584.1 540.0 L585.7 540.3 L586.3 538.8 L586.9 537.3 L587.6 535.9 L588.4 534.4 L589.2 532.9Z M670.8 569.0 L671.9 570.4 L673.0 571.7 L674.0 573.1 L675.0 574.4 L675.9 575.6 L676.8 576.9 L679.2 576.9 L681.5 577.0 L683.8 577.0 L686.0 577.0 L688.2 577.0 L690.3 576.9 L688.4 578.2 L686.5 579.4 L684.6 580.5 L682.7 581.7 L680.8 582.8 L678.9 583.9 L678.8 585.1 L678.6 586.3 L678.5 587.4 L678.2 588.5 L678.0 589.6 L677.7 590.6 L676.2 590.3 L674.7 590.0 L673.1 589.6 L671.4 589.3 L669.6 588.9 L667.9 588.5 L665.8 589.1 L663.8 589.7 L661.8 590.2 L659.9 590.7 L658.0 591.2 L656.1 591.6 L656.4 590.6 L656.7 589.6 L657.1 588.5 L657.4 587.3 L657.8 586.1 L658.1 584.9 L656.5 584.0 L654.8 583.0 L653.1 582.1 L651.4 581.1 L649.6 580.1 L647.8 579.0 L650.2 578.8 L652.7 578.6 L655.2 578.4 L657.7 578.1 L660.2 577.8 L662.8 577.6 L664.1 576.2 L665.4 574.8 L666.7 573.4 L668.1 572.0 L669.4 570.5Z M717.7 561.8 L717.9 563.1 L718.1 564.3 L718.2 565.5 L718.2 566.7 L718.2 567.9 L718.1 569.1 L719.3 568.8 L720.4 568.5 L721.5 568.2 L722.4 567.9 L723.3 567.6 L724.1 567.3 L722.7 568.8 L721.2 570.4 L719.7 571.9 L718.1 573.3 L716.6 574.8 L714.9 576.2 L714.0 577.5 L713.0 578.8 L711.9 580.0 L710.8 581.2 L709.7 582.4 L708.5 583.6 L708.2 583.5 L707.8 583.3 L707.3 583.2 L706.8 583.1 L706.1 582.9 L705.4 582.8 L703.6 583.7 L701.9 584.6 L700.1 585.5 L698.3 586.4 L696.4 587.2 L694.6 588.0 L695.8 586.8 L697.0 585.6 L698.1 584.4 L699.3 583.1 L700.4 581.8 L701.5 580.4 L700.9 579.7 L700.2 579.0 L699.4 578.3 L698.6 577.5 L697.7 576.7 L696.7 575.9 L698.8 575.3 L701.0 574.7 L703.0 574.0 L705.1 573.3 L707.1 572.6 L709.0 571.9 L710.5 570.3 L712.0 568.7 L713.5 567.0 L714.9 565.3 L716.3 563.6Z M736.3 548.7 L735.7 550.1 L735.1 551.5 L734.4 552.9 L733.7 554.4 L732.9 555.8 L732.2 557.3 L732.2 557.2 L732.2 557.2 L732.2 557.2 L732.1 557.3 L732.1 557.4 L732.0 557.6 L731.1 559.1 L730.2 560.6 L729.3 562.1 L728.3 563.5 L727.3 565.0 L726.3 566.4 L725.1 568.1 L723.7 569.8 L722.4 571.5 L720.9 573.1 L719.5 574.7 L718.0 576.3 L718.6 575.6 L719.1 575.1 L719.6 574.5 L720.1 574.0 L720.5 573.5 L720.9 573.1 L720.1 574.1 L719.2 575.0 L718.2 576.0 L717.2 577.0 L716.2 578.0 L715.2 579.0 L716.7 577.5 L718.2 576.1 L719.6 574.5 L721.0 573.0 L722.4 571.4 L723.7 569.8 L724.3 569.1 L724.9 568.3 L725.4 567.6 L725.9 566.9 L726.2 566.2 L726.6 565.5 L727.4 564.6 L728.2 563.6 L728.9 562.7 L729.5 561.8 L730.0 560.9 L730.6 560.0 L731.6 558.2 L732.7 556.3 L733.6 554.5 L734.6 552.5 L735.5 550.6Z M581.4 556.0 L582.5 557.9 L583.7 559.7 L585.0 561.6 L586.3 563.3 L587.6 565.1 L589.0 566.8 L590.3 567.7 L591.7 568.5 L593.1 569.4 L594.7 570.2 L596.2 571.0 L597.9 571.7 L597.5 572.5 L597.2 573.2 L596.9 573.9 L596.7 574.6 L596.6 575.3 L596.6 576.0 L597.9 577.4 L599.2 578.9 L600.6 580.2 L602.0 581.6 L603.4 582.9 L604.8 584.2 L603.3 583.2 L601.8 582.3 L600.4 581.3 L599.0 580.2 L597.6 579.2 L596.3 578.1 L596.2 578.3 L596.2 578.4 L596.3 578.5 L596.5 578.6 L596.6 578.8 L596.9 579.0 L595.5 577.7 L594.1 576.4 L592.8 575.0 L591.6 573.7 L590.3 572.3 L589.1 570.8 L587.9 569.3 L586.7 567.8 L585.5 566.2 L584.4 564.6 L583.3 563.1 L582.3 561.4 L582.5 561.7 L582.7 562.0 L582.9 562.3 L583.1 562.7 L583.5 563.0 L583.9 563.4 L583.3 562.2 L582.8 561.0 L582.4 559.8 L582.0 558.5 L581.6 557.3Z M617.0 566.7 L618.4 568.3 L619.9 569.9 L621.4 571.5 L622.9 573.0 L624.4 574.5 L625.9 576.0 L628.3 576.5 L630.7 577.0 L633.1 577.4 L635.6 577.9 L638.0 578.3 L640.5 578.7 L639.0 579.6 L637.5 580.5 L636.1 581.4 L634.7 582.2 L633.4 583.0 L632.2 583.8 L632.9 585.1 L633.7 586.3 L634.5 587.5 L635.2 588.6 L636.0 589.8 L636.8 590.8 L634.8 590.2 L632.8 589.6 L630.8 588.9 L628.8 588.2 L626.8 587.5 L624.8 586.7 L623.4 587.0 L622.1 587.2 L620.9 587.4 L619.7 587.6 L618.6 587.8 L617.6 588.0 L616.9 587.0 L616.2 585.9 L615.5 584.7 L614.9 583.6 L614.3 582.4 L613.7 581.1 L611.9 579.9 L610.0 578.6 L608.2 577.3 L606.3 576.0 L604.5 574.6 L602.7 573.2 L604.3 573.4 L606.0 573.6 L607.7 573.8 L609.6 573.9 L611.4 574.1 L613.4 574.2 L613.8 573.0 L614.4 571.8 L614.9 570.6 L615.6 569.3 L616.2 568.0Z M646.2 591.1 L647.4 592.0 L648.5 592.9 L649.6 593.7 L650.6 594.6 L651.6 595.3 L652.6 596.0 L654.3 596.2 L656.1 596.3 L657.8 596.4 L659.5 596.6 L661.2 596.6 L662.8 596.7 L661.5 597.3 L660.2 597.8 L659.0 598.3 L657.8 598.7 L656.7 599.1 L655.7 599.5 L655.9 600.0 L656.1 600.4 L656.3 600.8 L656.4 601.2 L656.6 601.5 L656.7 601.7 L655.7 601.6 L654.7 601.5 L653.6 601.4 L652.5 601.2 L651.3 601.0 L650.1 600.8 L649.2 600.9 L648.3 601.0 L647.5 601.1 L646.7 601.2 L646.0 601.2 L645.4 601.2 L644.9 601.0 L644.4 600.7 L643.9 600.3 L643.5 599.9 L643.1 599.5 L642.7 599.0 L641.3 598.5 L639.9 598.0 L638.4 597.4 L636.8 596.8 L635.3 596.2 L633.7 595.5 L635.1 595.5 L636.5 595.6 L638.0 595.6 L639.6 595.6 L641.1 595.6 L642.7 595.6 L643.2 595.0 L643.7 594.3 L644.2 593.5 L644.9 592.7 L645.5 591.9Z M686.9 589.1 L687.0 589.9 L687.0 590.7 L687.0 591.4 L687.0 592.1 L686.8 592.8 L686.7 593.5 L687.9 593.3 L689.1 593.2 L690.2 593.1 L691.2 592.9 L692.2 592.7 L693.2 592.6 L691.5 593.4 L689.8 594.2 L688.1 595.0 L686.4 595.7 L684.7 596.4 L683.1 597.0 L682.1 597.6 L681.0 598.1 L680.0 598.6 L678.9 599.0 L677.7 599.4 L676.6 599.7 L676.4 599.7 L676.2 599.7 L675.9 599.7 L675.5 599.7 L675.1 599.7 L674.6 599.6 L673.2 600.0 L671.8 600.3 L670.5 600.5 L669.2 600.8 L668.0 601.0 L666.7 601.2 L667.6 600.9 L668.4 600.6 L669.2 600.2 L670.1 599.8 L670.9 599.3 L671.8 598.7 L671.3 598.4 L670.7 598.1 L670.1 597.7 L669.4 597.3 L668.6 596.9 L667.8 596.5 L669.5 596.2 L671.2 596.0 L673.0 595.7 L674.7 595.4 L676.4 595.1 L678.1 594.8 L679.5 594.0 L680.9 593.1 L682.4 592.1 L683.9 591.2 L685.3 590.2Z M713.0 580.8 L712.1 581.7 L711.0 582.6 L710.0 583.4 L708.9 584.3 L707.7 585.2 L706.5 586.0 L706.7 585.9 L706.9 585.8 L707.0 585.7 L707.1 585.6 L707.1 585.6 L707.1 585.6 L705.7 586.6 L704.2 587.6 L702.8 588.6 L701.3 589.5 L699.8 590.4 L698.2 591.3 L696.5 592.2 L694.8 593.1 L693.0 594.0 L691.1 594.8 L689.3 595.6 L687.4 596.3 L688.0 596.1 L688.6 595.9 L689.2 595.6 L689.6 595.4 L690.1 595.2 L690.5 595.1 L689.3 595.6 L688.1 596.1 L686.8 596.6 L685.6 597.0 L684.4 597.4 L683.1 597.9 L684.9 597.3 L686.6 596.6 L688.3 596.0 L690.1 595.3 L691.8 594.5 L693.5 593.7 L694.1 593.4 L694.7 593.1 L695.2 592.7 L695.7 592.3 L696.1 592.0 L696.4 591.6 L697.6 591.0 L698.8 590.5 L699.9 590.0 L701.0 589.4 L702.1 588.8 L703.1 588.3 L704.8 587.1 L706.5 586.0 L708.2 584.7 L709.8 583.5 L711.4 582.2Z M610.2 585.9 L611.8 587.0 L613.5 588.2 L615.1 589.3 L616.8 590.3 L618.4 591.4 L620.1 592.3 L621.5 592.8 L623.0 593.2 L624.6 593.7 L626.1 594.1 L627.7 594.5 L629.3 594.8 L629.0 595.2 L628.7 595.6 L628.5 596.0 L628.4 596.3 L628.4 596.6 L628.4 596.9 L629.8 597.5 L631.1 598.1 L632.5 598.6 L633.8 599.1 L635.1 599.6 L636.5 599.9 L635.2 599.6 L633.9 599.3 L632.5 598.9 L631.2 598.5 L629.8 598.1 L628.4 597.7 L628.4 597.7 L628.4 597.7 L628.4 597.7 L628.6 597.8 L628.7 597.8 L628.9 597.9 L627.4 597.4 L625.8 596.8 L624.3 596.2 L622.8 595.6 L621.3 595.0 L619.9 594.3 L618.2 593.5 L616.6 592.7 L614.9 591.9 L613.3 591.0 L611.6 590.0 L610.0 589.0 L610.5 589.3 L611.0 589.5 L611.5 589.7 L612.1 589.9 L612.8 590.2 L613.6 590.4 L612.9 589.7 L612.2 589.0 L611.6 588.2 L611.1 587.5 L610.6 586.7Z M661.9 601.5 L662.1 601.7 L662.2 601.8 L662.2 601.9 L662.2 602.0 L662.1 602.0 L661.9 602.0 L662.5 602.0 L663.1 601.9 L663.6 601.9 L664.1 601.8 L664.5 601.8 L665.0 601.7 L663.9 601.8 L662.9 601.9 L662.0 602.0 L661.1 602.1 L660.2 602.1 L659.5 602.1 L658.8 602.2 L658.1 602.2 L657.4 602.2 L656.7 602.2 L655.9 602.2 L655.2 602.2 L655.5 602.2 L655.9 602.2 L656.2 602.2 L656.4 602.2 L656.5 602.2 L656.6 602.2 L656.4 602.2 L656.2 602.2 L656.1 602.2 L656.0 602.2 L656.0 602.2 L656.0 602.2 L656.0 602.2 L656.0 602.2 L656.1 602.2 L656.1 602.2 L656.2 602.2 L656.3 602.2 L656.1 602.2 L655.8 602.2 L655.4 602.2 L655.0 602.2 L654.4 602.2 L653.9 602.2 L654.5 602.2 L655.1 602.2 L655.8 602.2 L656.5 602.2 L657.2 602.2 L657.9 602.2 L658.5 602.2 L659.0 602.1 L659.7 602.0 L660.4 601.9 L661.1 601.7Z M640.4 600.6 L641.7 600.9 L642.9 601.2 L644.1 601.4 L645.3 601.5 L646.4 601.7 L647.4 601.8 L648.2 601.9 L649.0 601.9 L649.8 602.0 L650.5 602.0 L651.2 602.1 L652.0 602.1 L651.8 602.1 L651.8 602.1 L651.9 602.1 L652.0 602.1 L652.1 602.1 L652.4 602.1 L653.1 602.2 L653.9 602.2 L654.6 602.2 L655.3 602.2 L656.1 602.2 L656.7 602.2 L656.5 602.2 L656.1 602.2 L655.8 602.2 L655.3 602.2 L654.9 602.2 L654.3 602.2 L654.7 602.2 L655.2 602.2 L655.7 602.2 L656.2 602.2 L656.8 602.2 L657.5 602.2 L656.1 602.2 L654.7 602.2 L653.4 602.2 L652.1 602.1 L650.8 602.0 L649.6 602.0 L648.4 601.9 L647.2 601.8 L646.0 601.6 L644.7 601.5 L643.4 601.3 L642.0 601.1 L642.3 601.1 L642.5 601.1 L642.8 601.2 L643.1 601.2 L643.5 601.3 L643.8 601.3 L643.1 601.2 L642.5 601.1 L641.9 601.0 L641.3 600.9 L640.8 600.8Z"/></svg>
<!--/SPHERES-->
<!--ARROWS-->
<svg class="abs" style="left:0;top:0;z-index:50;pointer-events:none" width="990" height="650" viewBox="0 0 990 650"><line x1="540" y1="238.5" x2="496.0" y2="315.5" stroke="#b1201f" stroke-opacity=".72" stroke-width="1.2"/><polygon points="490.5,325.0 492.7,313.6 499.3,317.3" fill="#e6141c"/><line x1="792.5" y1="287.5" x2="869.3" y2="216.6" stroke="#b1201f" stroke-opacity=".72" stroke-width="1.8"/><polygon points="877.0,209.5 871.9,219.4 866.7,213.8" fill="#e6141c"/></svg>
<!--/ARROWS-->
<!-- MENU BAR -->
<div id="menubar" class="abs">
  <div id="ailogo">Ai</div>
  <div class="mi" style="left:50.5px">文件(F)</div>
  <div class="mi" style="left:107px">编辑(E)</div>
  <div class="mi" style="left:162.3px">对象(O)</div>
  <div class="mi" style="left:222.8px">文字(T)</div>
  <div class="mi" style="left:279.8px">选择(S)</div>
  <div class="mi" style="left:336.6px">效果(C)</div>
  <div class="mi" style="left:394.6px">视图(V)</div>
  <div class="mi" style="left:452.8px">窗口(W)</div>
  <div class="mi" style="left:515.2px">帮助(H)</div>
  <!--MENUEXTRA-->
  <div class="vsep" style="left:571px;top:7px;height:20px"></div>
  <div class="abs" style="left:587px;top:9px;width:17px;height:15px;background:linear-gradient(135deg,#979598 0%,#6f6d70 45%,#59575a 100%);border:1px solid #8f8d90;border-top-color:#b5b3b6;border-left-color:#a9a7aa;font-size:10px;line-height:13px;text-align:center;color:#161417;letter-spacing:-.2px">Br</div>
  <svg class="abs" style="left:626px;top:9px" width="30" height="15" viewBox="0 0 30 15"><rect x=".7" y=".7" width="16.600" height="13.600" fill="#2b292c" stroke="#f1eff2" stroke-width="1.400"/><rect x="2.200" y="2.200" width="7.300" height="10.600" fill="#d9d7da"/><rect x="10.700" y="2.200" width="5.100" height="4.600" fill="#d2d0d3"/><rect x="10.700" y="8" width="5.100" height="4.800" fill="#d2d0d3"/><path d="M19.500 5h8.500l-4.250 5z" fill="#f1eff2"/></svg>
  <!--/MENUEXTRA-->
</div>
<!-- CONTROL BAR -->
<div id="ctrlbar" class="abs">
<!--CTRL-->
  <div class="abs" style="left:0;top:29px;width:990px;height:4px;background:#434144"></div>
  <div class="abs" style="left:8px;top:8px;width:4px;height:20px;background:repeating-linear-gradient(to bottom,#1f1d20 0,#1f1d20 1px,transparent 1px,transparent 2px)"></div>
  <div class="lbl" style="left:18px;top:8px;font-size:12.2px;color:#ebe9ec">混合对象</div>
  <div class="vsep" style="left:104px;top:4px;height:25px"></div>
  <!-- fill ? -->
  <div class="abs" style="left:112px;top:8px;width:18px;height:18px;border:2px solid #f4f2f5;background:#454346;color:#f0eef1;font-size:12px;line-height:14px;text-align:center">?</div>
  <div class="dd" style="left:131px;top:8px;width:14px;height:18px"></div>
  <!-- stroke -->
  <svg class="abs" style="left:153px;top:8px" width="18" height="18" viewBox="0 0 18 18"><rect width="18" height="18" fill="#fbf9fc"/><rect x="6" y="5.5" width="6.5" height="6.5" fill="none" stroke="#111" stroke-width="1.3"/><line x1="1.5" y1="16" x2="16.5" y2="2" stroke="#c0272d" stroke-width="1.6"/></svg>
  <div class="dd" style="left:172px;top:8px;width:15px;height:18px"></div>
  <div class="lbl orange" style="left:200px;top:9px;font-size:12.2px;line-height:17px;height:15.5px">描边</div><div class="lbl" style="left:226px;top:9px;color:#dc933b">:</div>
  <!-- stepper -->
  <div class="abs" style="left:234px;top:8px;width:15px;height:18px;background:#5e5c5f;border:1px solid #39373a"></div>
  <div class="abs" style="left:234px;top:16.5px;width:15px;height:1px;background:#39373a"></div>
  <div class="abs" style="left:238px;top:11px;border:3.5px solid transparent;border-bottom:4px solid #e8e6e9;border-top:0"></div>
  <div class="abs" style="left:238px;top:20px;border:3.5px solid transparent;border-top:4px solid #e8e6e9;border-bottom:0"></div>
  <div class="fld" style="left:249px;top:8px;width:47px;height:18px;background:#a9a7aa"></div>
  <div class="dd" style="left:296px;top:8px;width:14px;height:18px"></div>
  <!-- var width profile -->
  <div class="fld" style="left:318px;top:8px;width:91px;height:18px;background:#807e81"></div>
  <div class="dd" style="left:409px;top:8px;width:14px;height:18px;opacity:.55"></div>
  <!-- brush def -->
  <div class="fld" style="left:432px;top:8px;width:89px;height:18px;background:#e9e7ea"></div>
  <div class="abs" style="left:439.5px;top:16px;width:46px;height:2px;background:#0a0a0a"></div>
  <div class="lbl" style="left:490.5px;top:8.5px;color:#0a0a0a;font-size:12.5px">基本</div>
  <div class="dd" style="left:521px;top:8px;width:15px;height:18px"></div>
  <div class="lbl orange" style="left:545px;top:9px;font-size:12.2px;line-height:17px;height:15.5px">不透明度</div><div class="lbl" style="left:596px;top:9px;color:#dc933b">:</div>
  <div class="fld" style="left:603px;top:8px;width:51px;height:18px;background:#a9a7aa;color:#0a0a0a;font-size:10.6px;line-height:12px;padding:.5px 0 0 2px;letter-spacing:-.2px">100%</div>
  <div class="dd" style="left:654px;top:8px;width:15px;height:18px"></div>
  <div class="lbl" style="left:677px;top:8px;font-size:12.2px;color:#ebe9ec">样式:</div>
  <div class="fld" style="left:711px;top:8px;width:19px;height:18px;background:#e4e2e5"></div>
  <div class="dd" style="left:730px;top:8px;width:15px;height:18px"></div>
  <div class="vsep" style="left:751px;top:4px;height:25px"></div>
  <!-- recolor globe -->
  <svg class="abs" style="left:763px;top:9px" width="16" height="16" viewBox="0 0 16 16"><circle cx="7.700" cy="7.800" r="6.500" fill="#8a888b" stroke="#b3b1b4" stroke-width="1"/><path d="M7.700 7.800L7.700 1.300A6.500 6.500 0 0 1 13.300 4.500Z" fill="#c4c2c5"/><path d="M7.700 7.800L13.300 11A6.500 6.500 0 0 1 7.700 14.300Z" fill="#a9a7aa"/><path d="M7.700 7.800L2.100 11A6.500 6.500 0 0 1 2.100 4.500Z" fill="#6a686b"/><circle cx="7.700" cy="7.800" r="1.800" fill="#333134"/></svg>
  <div class="vsep" style="left:791px;top:4px;height:25px"></div>
  <!-- transform / isolate -->
  <svg class="abs" style="left:800px;top:6px" width="30" height="22" viewBox="0 0 30 22"><rect x="4" y="4.500" width="11.500" height="11.500" fill="#777578" stroke="#d2d0d3" stroke-width="1" stroke-dasharray="1.600 1.300"/><path d="M2 4.500H4V2.500M17.500 4.500H15.500V2.500M2 16H4V18M17.500 16H15.500V18" stroke="#d2d0d3" fill="none"/><rect x="7.500" y="8" width="4.500" height="4.500" fill="#8f8d90" stroke="#c9c7ca" stroke-width=".8"/><path d="M19.300 9.500h7.400l-3.700 4z" fill="#e8e6e9"/></svg>
  <!--ALIGN-->
<svg class="abs" style="left:840px;top:6px" width="150" height="22" viewBox="840 42 150 22" shape-rendering="crispEdges">
<g stroke="#dedcdf" fill="none" stroke-width="1">
<line x1="844.5" y1="45" x2="844.5" y2="59"/><rect x="846.5" y="53.500" width="10" height="4.500"/>
<line x1="876.5" y1="44" x2="876.5" y2="60"/><rect x="871.5" y="53.500" width="10" height="4.500"/>
<line x1="908.5" y1="45" x2="908.5" y2="59"/><rect x="896.5" y="53.500" width="10" height="4.500"/>
<line x1="927" y1="45.500" x2="941" y2="45.500"/><rect x="928.5" y="47.500" width="4.500" height="10"/>
<line x1="952" y1="51.500" x2="968" y2="51.500"/><rect x="954.5" y="46.500" width="4.500" height="10"/>
<line x1="979" y1="57.500" x2="990" y2="57.500"/><rect x="981.5" y="45.500" width="4.500" height="10"/>
</g>
<g fill="#b3b1b4">
<rect x="847" y="46" width="7" height="5"/><rect x="873" y="46" width="7" height="5"/><rect x="900" y="46" width="7" height="5"/>
<rect x="935" y="47" width="5" height="7"/><rect x="961" y="48" width="5" height="7"/><rect x="987" y="49" width="3" height="7"/>
</g></svg>
</div>
<!-- TAB BAR -->
<div id="tabbar" class="abs"></div>
<div id="doctab" class="abs"><span style="position:absolute;left:10px;top:2px;word-spacing:.9px;color:#d9d7da">未标题-3* @ 66.67% (CMYK/预览)</span><span style="position:absolute;left:215.5px;top:1px;font-size:13.5px;color:#d9d7da">×</span></div>
<!-- TOOLBOX -->
<div id="toolbox" class="abs"></div>
<div id="toolhead" class="abs"></div>
<div id="toolsep" class="abs"></div>
<!--TOOLS-->
<svg class="abs" style="left:0;top:70px" width="75" height="580" viewBox="0 70 75 580">
<path d="M12 72.300l-3.500 3.200 3.500 3.200zM16.300 72.300l-3.500 3.200 3.500 3.200z" fill="#c9c7ca"/>
<path d="M30.500 86v3M32.500 86v3M34.500 86v3M36.500 86v3M38.500 86v3M40.500 86v3M42.500 86v3M44.500 86v3M46.500 86v3M48.500 86v3" stroke="#222023" stroke-width="1"/>
<rect x="0" y="70" width="1.5" height="580" fill="#242225"/><rect x="4" y="82" width="1" height="568" fill="#3f3d40"/><rect x="74" y="82" width="1" height="568" fill="#403e41"/>
<rect x="10" y="146" width="58" height="1" fill="#3d3b3e"/><rect x="10" y="147" width="58" height="1" fill="#575558"/>
<rect x="10" y="244" width="58" height="1" fill="#3d3b3e"/><rect x="10" y="245" width="58" height="1" fill="#575558"/>
<rect x="10" y="318.5" width="58" height="1" fill="#3d3b3e"/><rect x="10" y="319.5" width="58" height="1" fill="#575558"/>
<rect x="10" y="367.5" width="58" height="1" fill="#3d3b3e"/><rect x="10" y="368.5" width="58" height="1" fill="#575558"/>
<rect x="10" y="394" width="58" height="1" fill="#3d3b3e"/><rect x="10" y="395" width="58" height="1" fill="#575558"/>
<rect x="10" y="444" width="58" height="1" fill="#3d3b3e"/><rect x="10" y="445" width="58" height="1" fill="#575558"/>
<path d="M67.7 120.6v-3.500l-3.500 3.500z" fill="#e4e2e5"/>
<path d="M37.7 170.1v-3.500l-3.500 3.500z" fill="#e4e2e5"/>
<path d="M67.7 170.1v-3.500l-3.500 3.500z" fill="#e4e2e5"/>
<path d="M37.7 193.6v-3.500l-3.500 3.500z" fill="#e4e2e5"/>
<path d="M67.7 193.6v-3.500l-3.500 3.500z" fill="#e4e2e5"/>
<path d="M37.7 218.1v-3.500l-3.500 3.500z" fill="#e4e2e5"/>
<path d="M67.7 218.1v-3.500l-3.500 3.500z" fill="#e4e2e5"/>
<path d="M67.7 242.1v-3.500l-3.500 3.500z" fill="#e4e2e5"/>
<path d="M37.7 268.1v-3.500l-3.500 3.500z" fill="#e4e2e5"/>
<path d="M67.7 268.1v-3.500l-3.500 3.500z" fill="#e4e2e5"/>
<path d="M37.7 291.6v-3.500l-3.500 3.500z" fill="#e4e2e5"/>
<path d="M67.7 291.6v-3.500l-3.500 3.500z" fill="#e4e2e5"/>
<path d="M37.7 316.1v-3.500l-3.500 3.500z" fill="#e4e2e5"/>
<path d="M67.7 316.1v-3.500l-3.500 3.500z" fill="#e4e2e5"/>
<path d="M37.7 365.1v-3.500l-3.500 3.500z" fill="#e4e2e5"/>
<path d="M37.7 392.6v-3.500l-3.500 3.500z" fill="#e4e2e5"/>
<path d="M67.7 392.6v-3.500l-3.500 3.500z" fill="#e4e2e5"/>
<path d="M67.7 418.6v-3.500l-3.500 3.500z" fill="#e4e2e5"/>
<path d="M37.7 443.6v-3.500l-3.500 3.500z" fill="#e4e2e5"/>
<rect x="11" y="99.500" width="28" height="21.500" rx="1.500" fill="#2d2b2e"/>
<path d="M21 102.500v13.500l3.300-3 2.400 5.200 2.100-1-2.400-5 4.300-.3z" fill="#2d2b2e" stroke="#f3f1f4" stroke-width="1.200" stroke-linejoin="miter"/>
<path d="M51 102.500v13.500l3.300-3 2.400 5.200 2.100-1-2.400-5 4.300-.3z" fill="#c2c0c3"/>
<path d="M24 134l8.500 7.500" stroke="#cfcdd0" stroke-width="2.300" stroke-linecap="round"/>
<path d="M21.500 125.500l1.300 3.600 3.200-2.300-1 3.700 3.900.4-3.300 2.100 2.700 2.900-3.900-.8-.3 3.900-2.200-3.300-2.600 2.900.3-3.900-3.800.9 2.700-2.900-3.400-2 3.900-.5-1.100-3.700 3.300 2.200z" fill="#cfcdd0"/>
<ellipse cx="54.500" cy="131" rx="7.500" ry="4.200" fill="none" stroke="#cfcdd0" stroke-width="1.500"/><path d="M48.500 134c-1.500 2 .5 4 1.500 3.500s.5-2-1-1.500 0 4 1 5" fill="none" stroke="#cfcdd0" stroke-width="1.100"/>
<path d="M55.300 128.500v13.700l3.400-3.200 1.700 0 3.600-1.700z" fill="#c2c0c3" stroke="#4a484b" stroke-width=".7"/>
<path d="M29 151l5.500 5.500-2.300 2.300-5.500-5.500z" fill="#cfcdd0"/><path d="M26 154.500l5 5-2.500 5.500-10.500 2.500 2.500-10.500z" fill="#9f9da0" stroke="#cfcdd0" stroke-width="1.100"/><path d="M18.500 167l6-6" stroke="#4a484b" stroke-width="1"/><circle cx="25" cy="160.500" r="1.300" fill="#4a484b"/>
<text x="55.300" y="166" font-family="Liberation Serif,serif" font-size="18" text-anchor="middle" fill="#cfcdd0">T</text>
<path d="M19 190l12.500-14" stroke="#cfcdd0" stroke-width="1.400"/>
<ellipse cx="55.200" cy="184" rx="8" ry="5.500" fill="#8a888b" stroke="#bab8bb" stroke-width="1.200"/>
<path d="M33.500 200l-8 9.500" stroke="#cfcdd0" stroke-width="2.400" stroke-linecap="round"/><path d="M25.800 208.500l-2.500 1.200c-2 1-2 3.800-6.500 4.800 4 1.700 8.500.5 10.500-3.500z" fill="#cfcdd0"/>
<path d="M58.500 201.500l3 3-9.500 9.500-4 1.500 1.500-4z" fill="#9f9da0" stroke="#cfcdd0" stroke-width="1"/><path d="M58.500 201.500l3 3 1-1.200c.6-.8-2.200-3.500-3-2.800z" fill="#cfcdd0"/><path d="M48 215.500l1-2.500 1.500 1.500z" fill="#2d2b2e"/>
<path d="M17 230.500h9l3.500-3h5v8l-3.500 3.500h-14z" fill="#9f9da0" stroke="#cfcdd0" stroke-width="1"/><path d="M34 224.500l-6 5.500" stroke="#cfcdd0" stroke-width="2" stroke-linecap="round"/><path d="M28 229.500c-2 .5-2 3-5.500 3.500 3 1.500 6.500.5 7-2.500z" fill="#2d2b2e"/>
<path d="M54.500 226h9v5.500l-6.500 6h-9v-5.500z" fill="#9f9da0" stroke="#cfcdd0" stroke-width="1"/><path d="M48 232h9l6.500-6M57 232v5.500" fill="none" stroke="#cfcdd0" stroke-width="1"/><path d="M54.500 226h9l-6.500 6h-9z" fill="#c9c7ca"/>
<circle cx="24.500" cy="258.500" r="6.500" fill="none" stroke="#cfcdd0" stroke-width="1.500" stroke-dasharray="2.600 2"/><path d="M17.500 250.500l5.500.5-3.500 4z" fill="#cfcdd0"/><path d="M19 254a6.500 6.500 0 0 1 11 1.500" fill="none" stroke="#cfcdd0" stroke-width="1.500"/>
<rect x="46.500" y="256.500" width="8" height="8" fill="#4a484b" stroke="#cfcdd0" stroke-width="1"/><rect x="50.500" y="250.500" width="12" height="10.500" fill="none" stroke="#cfcdd0" stroke-width="1"/><path d="M55 258l5.500-5.500M57 252h4v4" fill="none" stroke="#cfcdd0" stroke-width="1.200"/>
<path d="M17 288c4-1 4-9 7-9s2 5 5 5 3-5 5.500-6.500c-1 5-1.500 10-6 10s-3.500-4-5-4-2 4-6.500 4.500z" fill="#cfcdd0"/><path d="M18 287l5.500-5.500 4-5" stroke="#cfcdd0" stroke-width="1" fill="none"/><circle cx="18" cy="287.500" r="1.600" fill="#4a484b" stroke="#cfcdd0"/><circle cx="23" cy="281.500" r="1.600" fill="#4a484b" stroke="#cfcdd0"/><circle cx="28" cy="276.500" r="1.400" fill="#4a484b" stroke="#cfcdd0"/>
<rect x="50.500" y="277.500" width="12" height="9.500" fill="none" stroke="#cfcdd0" stroke-width="1" stroke-dasharray="2 1.500"/><rect x="49" y="276" width="3" height="3" fill="#cfcdd0"/><rect x="61" y="276" width="3" height="3" fill="#cfcdd0"/><rect x="61" y="285.500" width="3" height="3" fill="#cfcdd0"/><rect x="49" y="285.500" width="3" height="3" fill="#cfcdd0"/><path d="M46.300 275.300v12l3.300-2.900 2.300 0 3.200-1.700z" fill="#c2c0c3" stroke="#4a484b" stroke-width=".6"/>
<circle cx="21.500" cy="304.500" r="5.500" fill="#9f9da0" stroke="#cfcdd0" stroke-width="1.100"/><circle cx="27" cy="303" r="5" fill="none" stroke="#cfcdd0" stroke-width="1.100"/><path d="M17.500 304.500h9" stroke="#fff" stroke-width="1.200" stroke-dasharray="1.200 1"/><path d="M27.500 303.500v10l2.600-2.300 1.900 3.300 1.400-.8-1.900-3.300 3.300-.4z" fill="#c2c0c3" stroke="#4a484b" stroke-width=".6"/>
<path d="M47.500 299h3.500v3h5.500v5.500h6.500v6h-15.500z" fill="#9f9da0" stroke="#cfcdd0" stroke-width="1.100"/><path d="M47.500 304.500h9M47.500 309.500h15.500M51 302v11.500M56.500 307.500v6" stroke="#cfcdd0" stroke-width="1" fill="none"/><path d="M47.500 298v16" stroke="#cfcdd0" stroke-width="1.400"/>
<rect x="17.500" y="326.500" width="15" height="10.500" fill="none" stroke="#cfcdd0" stroke-width="1.200"/><path d="M17.500 330c5-1 5 3 15 1M17.500 334c6-2 8 2 15-.5M22 326.500c2 4-1 7 1 10.500M28 326.500c-2 4 2 7-.5 10.500" fill="none" stroke="#cfcdd0" stroke-width="1.100"/>
<defs><linearGradient id="gr1"><stop offset="0" stop-color="#454346"/><stop offset="1" stop-color="#bcbabd"/></linearGradient></defs><rect x="47.500" y="326.500" width="15.500" height="10.500" fill="url(#gr1)" stroke="#cfcdd0" stroke-width="1"/>
<path d="M18 362.500l1-3 7.500-7.500 2 2-7.500 7.500z" fill="#4a484b" stroke="#cfcdd0" stroke-width="1.100"/><path d="M25.500 351l4 4M27 353l2.500-3c1.500-1.500 4 .5 2.500 2.500l-3 2.500z" fill="#cfcdd0" stroke="#cfcdd0" stroke-width="1.300" stroke-linejoin="round"/>
<rect x="46" y="347.500" width="9" height="9" fill="#9f9da0" stroke="#cfcdd0" stroke-width="1"/><rect x="50" y="351" width="8" height="8" rx="2" fill="#7c7a7d" stroke="#cfcdd0" stroke-width="1"/><circle cx="59" cy="358" r="4.500" fill="#605e61" stroke="#cfcdd0" stroke-width="1.300"/>
<rect x="23.500" y="378.500" width="8" height="11" rx="1" fill="#4a484b" stroke="#cfcdd0" stroke-width="1.200"/><rect x="25.500" y="375" width="4" height="3" fill="#cfcdd0"/><circle cx="27.500" cy="384.500" r="2" fill="none" stroke="#cfcdd0" stroke-width="1.100"/><path d="M16.500 374h1.500M19.500 373h1.500M17.500 376.500h1.500M20.500 375.500h1.500M16 378.500h1.500M19.500 378h1.500" stroke="#cfcdd0" stroke-width="1.200"/>
<path d="M47.500 374.500v14.500h16" fill="none" stroke="#cfcdd0" stroke-width="1.200"/><rect x="50" y="381" width="2.500" height="7.500" fill="#9f9da0" stroke="#cfcdd0" stroke-width=".8"/><rect x="54.500" y="377" width="2.500" height="11.500" fill="#9f9da0" stroke="#cfcdd0" stroke-width=".8"/><rect x="59" y="380" width="2.500" height="8.500" fill="#9f9da0" stroke="#cfcdd0" stroke-width=".8"/>
<rect x="19.500" y="403.500" width="11" height="10" fill="#8a888b" stroke="#cfcdd0" stroke-width="1" stroke-dasharray="2 1"/><path d="M14.500 403.500h20.500M14.500 413.500h20.500M19.500 398.500v19M30.500 398.500v19" stroke="#cfcdd0" stroke-width="1"/>
<path d="M58.500 402h7l-5 5.500h-4.500z" fill="#8f8d90"/><path d="M56.500 407l3.200 1.500-5.200 4.500-7.300 1.800 3.500-3z" fill="#cfcdd0"/>
<path d="M21.500 441c-1.500-2.500-4.800-5.500-5.300-8 .6-1.300 2.500-1 4.100 1.200v-7.700c0-1.700 2.300-1.700 2.400 0v4.500h.4v-6c0-1.700 2.400-1.700 2.500 0v6h.4v-5c0-1.600 2.400-1.600 2.500 0v5.500h.4v-3c0-1.500 2.300-1.500 2.300 0v7.500c0 2-.8 3.500-1.600 5z" fill="#c6c4c7"/>
<circle cx="54" cy="430" r="5" fill="#8a888b" stroke="#cfcdd0" stroke-width="1.600"/><path d="M57.800 434l5.500 5" stroke="#cfcdd0" stroke-width="2.600" stroke-linecap="round"/>
<rect x="10.500" y="448.500" width="35" height="35" fill="#464447" stroke="#2d2b2e" stroke-width="1"/>
<path d="M26 463c0-2.500 4-2.500 4 0" fill="none" stroke="#e8e6e9" stroke-width="1.200"/>
<rect x="28.800" y="466" width="34.700" height="35.200" fill="#fdfbfe"/><rect x="38.500" y="476.500" width="15.500" height="15" fill="#3f3d40" stroke="#222" stroke-width="1"/><path d="M29.500 500.500l33.500-33.500" stroke="#cc2229" stroke-width="2.200"/>
<path d="M55 452.500h5v4M58 450.500l-3 2 3 2M58.500 455.500l1.700 2 1.700-2" fill="none" stroke="#716f72" stroke-width="1.100"/>
<rect x="13.500" y="494.500" width="7" height="7" fill="#4a484b" stroke="#111" stroke-width="1.200"/><rect x="10.500" y="490.500" width="7" height="7" fill="#fff" stroke="#111" stroke-width="1"/>
<rect x="11.500" y="509.500" width="60" height="18" fill="#5b595c" stroke="#2d2b2e" stroke-width="1"/><path d="M31.500 509.500v18M51.500 509.500v18" stroke="#2d2b2e" stroke-width="1"/>
<rect x="15.500" y="512.500" width="12" height="12" fill="#f4f2f5" stroke="#111" stroke-width="1"/><rect x="18.500" y="515.500" width="6" height="6" fill="#4a484b" stroke="#111" stroke-width=".8"/>
<defs><linearGradient id="gr2"><stop offset="0" stop-color="#fff"/><stop offset="1" stop-color="#111"/></linearGradient></defs><rect x="35" y="512.500" width="13" height="12" fill="url(#gr2)" stroke="#111" stroke-width="1"/>
<rect x="55.500" y="512.500" width="12.500" height="12" fill="#fbf9fc" stroke="#111" stroke-width="1"/><path d="M56 524l11.500-11" stroke="#cc2229" stroke-width="1.800"/>
<rect x="11.500" y="534.500" width="60" height="16" fill="#5e5c5f" stroke="#39373a" stroke-width="1"/><rect x="12" y="535" width="19.500" height="15" fill="#39373a"/><path d="M31.500 535v15M51 535v15" stroke="#39373a"/>
<circle cx="20" cy="541.500" r="3.500" fill="#c2c0c3"/><rect x="21" y="542" width="6" height="5.500" fill="#e4e2e5" stroke="#39373a" stroke-width=".6"/>
<circle cx="40" cy="541.500" r="4" fill="#a9a7aa" stroke="#d8d6d9" stroke-width="1"/><rect x="41" y="543" width="6" height="5" fill="none" stroke="#d8d6d9" stroke-width="1"/>
<circle cx="61" cy="542.500" r="4" fill="none" stroke="#79777a" stroke-width="1.200"/><path d="M61 542.500h3.500v3.500" stroke="#79777a" fill="none"/>
<rect x="28.500" y="565.500" width="13" height="10" fill="#6d6b6e" stroke="#cfcdd0" stroke-width="1.200"/><rect x="33.500" y="560.500" width="15" height="10.500" fill="#6d6b6e" stroke="#cfcdd0" stroke-width="1.300"/>
</svg>
<!--/TOOLS-->
<div class="abs" style="left:0;top:0;width:1px;height:650px;background:#121013"></div>
<div class="abs" style="left:1px;top:2px;width:1px;height:68px;background:#59575a"></div>
<svg class="abs" style="left:0;top:0" width="5" height="5" viewBox="0 0 5 5"><path d="M0 0h5v1h-2a2 2 0 0 0-2 2v2h-1z" fill="#0d0c0e"/><path d="M0 0h1.500a1.500 1.500 0 0 0-1.500 1.500z" fill="#e8e8e8"/></svg>
<!--PATHFINDER-->
<div class="abs" id="pf" style="left:858px;top:148px;width:132px;height:124px;background:#4a484b;border-left:1px solid #2a282b;border-bottom:1px solid #2a282b;overflow:hidden">
  <div class="abs" style="left:0;top:0;width:132px;height:21px;background:#343235"></div>
  <div class="abs" style="left:0;top:0;width:132px;height:4px;background:#1f1d20"></div>
  <div class="abs" style="left:31px;top:4px;width:75px;height:18px;background:#4a484b;border-left:1px solid #2a282b;border-right:1px solid #2a282b"></div>
  <div class="lbl" style="left:7px;top:6px;font-size:12px;color:#8f8d90">对齐</div>
  <div class="lbl" style="left:37.500px;top:6px;font-size:12px;color:#f1eff2">路径查找器</div>
  <div class="lbl" style="left:113px;top:6px;font-size:12px;color:#8f8d90">字符</div>
  <div class="lbl" style="left:5.500px;top:27px;font-size:12px;color:#f1eff2">形状模式:</div>
  <div class="lbl" style="left:5.500px;top:75px;font-size:12px;color:#f1eff2">路径查找器:</div>
</div>
<svg class="abs" style="left:859px;top:190px" width="131" height="80" viewBox="859 190 131 80" shape-rendering="crispEdges"><path d="M870.5 199.5h7.8v4.4h4.4v7.8h-7.8v-4.4h-4.4z" fill="#949295" stroke="#c6c4c7"/><rect x="874.9" y="203.9" width="3.3999999999999995" height="3.3999999999999995" fill="#7d7b7e"/><rect x="909.9" y="203.9" width="7.8" height="7.8" fill="none" stroke="#727073"/><path d="M905.5 199.5h7.8v4.4h-3.3999999999999995v3.3999999999999995h-4.4z" fill="#949295" stroke="#c6c4c7"/><rect x="941.5" y="199.5" width="7.8" height="7.8" fill="none" stroke="#c6c4c7"/><rect x="945.9" y="203.9" width="7.8" height="7.8" fill="none" stroke="#c6c4c7"/><rect x="945.9" y="203.9" width="3.3999999999999995" height="3.3999999999999995" fill="#949295" stroke="#c6c4c7"/><rect x="977.5" y="199.5" width="7.8" height="7.8" fill="#949295" stroke="#c6c4c7"/><rect x="981.9" y="203.9" width="7.8" height="7.8" fill="#949295" stroke="#c6c4c7"/><rect x="981.9" y="203.9" width="3.3999999999999995" height="3.3999999999999995" fill="#4a484b" stroke="#c6c4c7"/><rect x="873.2" y="247" width="7.500" height="7.500" fill="none" stroke="#c6c4c7" stroke-width="1.300"/><rect x="879.7" y="253.5" width="7.500" height="7.500" fill="none" stroke="#c6c4c7" stroke-width="1.300"/><rect x="877.7" y="251.5" width="4.500" height="4.500" fill="#5e5c5f" stroke="#c6c4c7" stroke-width="1.200"/><rect x="909.8" y="247" width="9.500" height="9" fill="#bcbabd"/><path d="M909.8 251h4v-4" stroke="#4a484b" fill="none" stroke-width="1"/><path d="M919.8 251.5h4.500v10h-10v-5h5.500z" fill="#a3a1a4"/><rect x="947" y="247" width="9" height="9" fill="#c4c2c5"/><path d="M957 251h4.500v10.500h-10.500v-4.500h6z" fill="#a9a7aa"/><rect x="984" y="247" width="9" height="9" fill="#7f7d80"/><rect x="988" y="251" width="5" height="5" fill="#a9a7aa"/></svg>
<!--/PATHFINDER-->
</div>
</body>
</html>
